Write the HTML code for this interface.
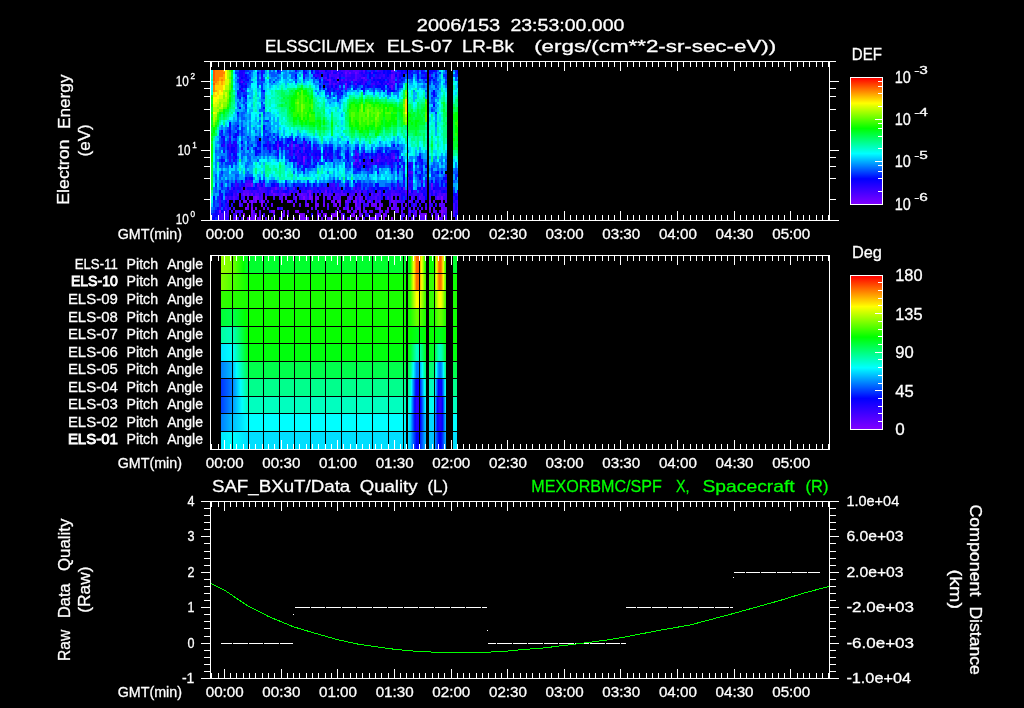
<!DOCTYPE html><html><head><meta charset="utf-8"><title>ELS plot</title>
<style>
html,body{margin:0;padding:0;background:#000;}
svg{display:block}
text{font-family:"Liberation Sans",sans-serif;fill:#fff;white-space:pre;stroke:#fff;stroke-width:0.3px}
.s{font-size:14.3px} .l{font-size:16.6px} .p1{font-size:8.2px} .p2{font-size:10.5px} .b{stroke-width:0.9px}
</style>
</head><body>
<svg width="1024" height="708" viewBox="0 0 1024 708">
<rect width="1024" height="708" fill="#000"/>
<defs><linearGradient id="rb" x1="0" y1="1" x2="0" y2="0">
<stop offset="0" stop-color="#8000ff"/>
<stop offset="0.2" stop-color="#0000ff"/>
<stop offset="0.4" stop-color="#00ffff"/>
<stop offset="0.6" stop-color="#00ff00"/>
<stop offset="0.8" stop-color="#ffff00"/>
<stop offset="1" stop-color="#ff0000"/>
</linearGradient>
</defs>
<g shape-rendering="crispEdges">
<path fill="#8000ff" d="M219 209.5h2v3.5h-2zM235 216.5h2v3.5h-2zM243 213h2v3.5h-2zM245 206.5h2v3h-2zM247 203h2v3.5h-2zM247 216.5h2v3.5h-2zM249 216.5h2v3.5h-2zM251 183h2v3.5h-2zM251 199.5h2v3.5h-2zM251 206.5h2v3h-2zM251 209.5h2v3.5h-2zM253 216.5h2v3.5h-2zM255 196h2v3.5h-2zM255 199.5h2v3.5h-2zM255 213h2v3.5h-2zM259 216.5h2v3.5h-2zM261 199.5h2v3.5h-2zM261 203h2v3.5h-2zM273 209.5h2v3.5h-2zM283 193h2v3h-2zM289 199.5h2v3.5h-2zM297 209.5h2v3.5h-2zM299 213h2v3.5h-2zM301 213h2v3.5h-2zM303 155.5h2v3h-2zM303 158.5h2v3h-2zM303 196h2v3.5h-2zM303 216.5h2v3.5h-2zM307 203h2v3.5h-2zM307 216.5h2v3.5h-2zM309 193h2v3h-2zM309 196h2v3.5h-2zM317 213h2v3.5h-2zM325 213h2v3.5h-2zM329 216.5h2v3.5h-2zM333 213h2v3.5h-2zM335 203h2v3.5h-2zM335 213h2v3.5h-2zM337 199.5h2v3.5h-2zM339 199.5h2v3.5h-2zM341 216.5h2v3.5h-2zM345 83h2v2h-2zM347 209.5h2v3.5h-2zM353 213h2v3.5h-2zM355 199.5h2v3.5h-2zM355 203h2v3.5h-2zM355 209.5h2v3.5h-2zM369 216.5h2v3.5h-2zM379 206.5h2v3h-2zM383 213h2v3.5h-2zM383 216.5h2v3.5h-2zM387 206.5h2v3h-2zM391 206.5h2v3h-2zM391 216.5h2v3.5h-2zM405 216.5h2v3.5h-2zM425 213h2v3.5h-2zM441 196h2v3.5h-2zM441 209.5h2v3.5h-2zM441 213h2v3.5h-2z"/>
<path fill="#6b00ff" d="M243 193h2v3h-2zM243 199.5h2v3.5h-2zM245 199.5h2v3.5h-2zM247 193h2v3h-2zM251 193h2v3h-2zM251 213h2v3.5h-2zM253 196h2v3.5h-2zM255 206.5h2v3h-2zM257 196h2v3.5h-2zM257 216.5h2v3.5h-2zM263 206.5h2v3h-2zM265 196h2v3.5h-2zM271 189.5h2v3.5h-2zM271 209.5h2v3.5h-2zM271 216.5h2v3.5h-2zM273 193h2v3h-2zM275 186.5h2v3h-2zM277 144h2v3h-2zM279 216.5h2v3.5h-2zM281 199.5h2v3.5h-2zM283 209.5h2v3.5h-2zM283 213h2v3.5h-2zM285 186.5h2v3h-2zM285 196h2v3.5h-2zM287 199.5h2v3.5h-2zM287 209.5h2v3.5h-2zM287 213h2v3.5h-2zM291 144h2v3h-2zM293 203h2v3.5h-2zM293 216.5h2v3.5h-2zM295 196h2v3.5h-2zM295 209.5h2v3.5h-2zM299 216.5h2v3.5h-2zM301 193h2v3h-2zM301 216.5h2v3.5h-2zM303 147h2v2.5h-2zM303 213h2v3.5h-2zM309 189.5h2v3.5h-2zM311 196h2v3.5h-2zM315 196h2v3.5h-2zM315 203h2v3.5h-2zM317 196h2v3.5h-2zM317 203h2v3.5h-2zM321 216.5h2v3.5h-2zM323 203h2v3.5h-2zM323 213h2v3.5h-2zM325 189.5h2v3.5h-2zM327 216.5h2v3.5h-2zM329 78.5h2v2h-2zM331 199.5h2v3.5h-2zM331 213h2v3.5h-2zM333 199.5h2v3.5h-2zM337 76.5h2v2h-2zM337 80.5h2v2.5h-2zM337 206.5h2v3h-2zM339 203h2v3.5h-2zM339 209.5h2v3.5h-2zM341 213h2v3.5h-2zM343 206.5h2v3h-2zM345 72h2v2h-2zM345 199.5h2v3.5h-2zM347 206.5h2v3h-2zM347 216.5h2v3.5h-2zM349 72h2v2h-2zM349 196h2v3.5h-2zM351 206.5h2v3h-2zM351 213h2v3.5h-2zM353 199.5h2v3.5h-2zM355 72h2v2h-2zM355 158.5h2v3h-2zM355 196h2v3.5h-2zM355 216.5h2v3.5h-2zM357 206.5h2v3h-2zM357 216.5h2v3.5h-2zM359 196h2v3.5h-2zM359 199.5h2v3.5h-2zM359 206.5h2v3h-2zM359 209.5h2v3.5h-2zM359 213h2v3.5h-2zM363 76.5h2v2h-2zM365 209.5h2v3.5h-2zM369 199.5h2v3.5h-2zM371 203h2v3.5h-2zM371 216.5h2v3.5h-2zM373 203h2v3.5h-2zM373 216.5h2v3.5h-2zM375 203h2v3.5h-2zM375 213h2v3.5h-2zM375 216.5h2v3.5h-2zM377 158.5h2v3h-2zM379 203h2v3.5h-2zM379 209.5h2v3.5h-2zM379 213h2v3.5h-2zM387 209.5h2v3.5h-2zM391 70h2v2h-2zM391 74h2v2.5h-2zM391 76.5h2v2h-2zM391 85h2v2.5h-2zM391 196h2v3.5h-2zM391 199.5h2v3.5h-2zM393 80.5h2v2.5h-2zM393 155.5h2v3h-2zM393 199.5h2v3.5h-2zM393 203h2v3.5h-2zM397 206.5h2v3h-2zM397 209.5h2v3.5h-2zM403 186.5h2v3h-2zM405 203h2v3.5h-2zM409 189.5h2v3.5h-2zM409 209.5h2v3.5h-2zM415 209.5h2v3.5h-2zM419 209.5h2v3.5h-2zM421 213h2v3.5h-2zM423 213h2v3.5h-2zM427 213h2v3.5h-2zM429 199.5h2v3.5h-2zM429 206.5h2v3h-2zM431 183h2v3.5h-2zM435 216.5h2v3.5h-2zM437 196h2v3.5h-2zM437 216.5h2v3.5h-2zM441 199.5h2v3.5h-2zM441 206.5h2v3h-2zM443 209.5h2v3.5h-2zM445 206.5h2v3h-2z"/>
<path fill="#5500ff" d="M221 213h2v3.5h-2zM221 216.5h2v3.5h-2zM225 196h2v3.5h-2zM227 199.5h2v3.5h-2zM227 209.5h2v3.5h-2zM233 196h2v3.5h-2zM233 216.5h2v3.5h-2zM235 209.5h2v3.5h-2zM237 193h2v3h-2zM239 203h2v3.5h-2zM241 80.5h2v2.5h-2zM243 189.5h2v3.5h-2zM245 183h2v3.5h-2zM245 189.5h2v3.5h-2zM245 193h2v3h-2zM247 183h2v3.5h-2zM247 189.5h2v3.5h-2zM247 196h2v3.5h-2zM247 206.5h2v3h-2zM249 183h2v3.5h-2zM249 199.5h2v3.5h-2zM251 203h2v3.5h-2zM251 216.5h2v3.5h-2zM253 199.5h2v3.5h-2zM253 213h2v3.5h-2zM255 193h2v3h-2zM257 183h2v3.5h-2zM257 193h2v3h-2zM259 186.5h2v3h-2zM259 209.5h2v3.5h-2zM259 213h2v3.5h-2zM261 193h2v3h-2zM261 196h2v3.5h-2zM263 183h2v3.5h-2zM263 199.5h2v3.5h-2zM265 216.5h2v3.5h-2zM267 199.5h2v3.5h-2zM267 206.5h2v3h-2zM271 203h2v3.5h-2zM275 193h2v3h-2zM277 147h2v2.5h-2zM277 206.5h2v3h-2zM279 196h2v3.5h-2zM281 186.5h2v3h-2zM281 193h2v3h-2zM281 196h2v3.5h-2zM281 213h2v3.5h-2zM281 216.5h2v3.5h-2zM285 193h2v3h-2zM289 193h2v3h-2zM291 147h2v2.5h-2zM293 186.5h2v3h-2zM295 144h2v3h-2zM297 149.5h2v3h-2zM297 161.5h2v3h-2zM297 193h2v3h-2zM299 193h2v3h-2zM299 203h2v3.5h-2zM301 196h2v3.5h-2zM303 161.5h2v3h-2zM303 193h2v3h-2zM305 193h2v3h-2zM305 196h2v3.5h-2zM305 203h2v3.5h-2zM305 216.5h2v3.5h-2zM307 189.5h2v3.5h-2zM307 209.5h2v3.5h-2zM311 206.5h2v3h-2zM315 199.5h2v3.5h-2zM315 206.5h2v3h-2zM317 209.5h2v3.5h-2zM317 216.5h2v3.5h-2zM319 213h2v3.5h-2zM321 209.5h2v3.5h-2zM323 193h2v3h-2zM323 196h2v3.5h-2zM323 199.5h2v3.5h-2zM325 76.5h2v2h-2zM325 193h2v3h-2zM327 78.5h2v2h-2zM327 196h2v3.5h-2zM327 203h2v3.5h-2zM329 74h2v2.5h-2zM329 80.5h2v2.5h-2zM329 83h2v2h-2zM329 193h2v3h-2zM329 196h2v3.5h-2zM331 70h2v2h-2zM331 72h2v2h-2zM331 216.5h2v3.5h-2zM333 83h2v2h-2zM333 196h2v3.5h-2zM333 203h2v3.5h-2zM335 193h2v3h-2zM335 196h2v3.5h-2zM335 209.5h2v3.5h-2zM337 72h2v2h-2zM337 87.5h2v2h-2zM337 186.5h2v3h-2zM337 193h2v3h-2zM337 216.5h2v3.5h-2zM339 196h2v3.5h-2zM341 78.5h2v2h-2zM341 189.5h2v3.5h-2zM341 193h2v3h-2zM343 193h2v3h-2zM345 70h2v2h-2zM345 74h2v2.5h-2zM345 78.5h2v2h-2zM345 85h2v2.5h-2zM345 87.5h2v2h-2zM347 70h2v2h-2zM347 196h2v3.5h-2zM347 199.5h2v3.5h-2zM347 203h2v3.5h-2zM349 209.5h2v3.5h-2zM353 70h2v2h-2zM353 78.5h2v2h-2zM353 161.5h2v3h-2zM353 186.5h2v3h-2zM355 70h2v2h-2zM355 74h2v2.5h-2zM355 76.5h2v2h-2zM355 78.5h2v2h-2zM355 83h2v2h-2zM355 189.5h2v3.5h-2zM357 70h2v2h-2zM357 72h2v2h-2zM357 152.5h2v3h-2zM357 193h2v3h-2zM359 161.5h2v3h-2zM359 189.5h2v3.5h-2zM359 193h2v3h-2zM359 203h2v3.5h-2zM361 76.5h2v2h-2zM361 196h2v3.5h-2zM361 213h2v3.5h-2zM363 70h2v2h-2zM363 206.5h2v3h-2zM365 78.5h2v2h-2zM365 196h2v3.5h-2zM367 203h2v3.5h-2zM369 209.5h2v3.5h-2zM371 72h2v2h-2zM371 76.5h2v2h-2zM371 193h2v3h-2zM371 209.5h2v3.5h-2zM375 196h2v3.5h-2zM375 199.5h2v3.5h-2zM377 193h2v3h-2zM377 206.5h2v3h-2zM377 213h2v3.5h-2zM377 216.5h2v3.5h-2zM379 189.5h2v3.5h-2zM379 199.5h2v3.5h-2zM381 203h2v3.5h-2zM381 209.5h2v3.5h-2zM383 193h2v3h-2zM385 213h2v3.5h-2zM387 83h2v2h-2zM387 196h2v3.5h-2zM391 78.5h2v2h-2zM391 80.5h2v2.5h-2zM391 87.5h2v2h-2zM391 193h2v3h-2zM393 70h2v2h-2zM393 74h2v2.5h-2zM393 76.5h2v2h-2zM393 83h2v2h-2zM393 206.5h2v3h-2zM395 193h2v3h-2zM395 199.5h2v3.5h-2zM395 203h2v3.5h-2zM395 206.5h2v3h-2zM395 209.5h2v3.5h-2zM397 158.5h2v3h-2zM397 199.5h2v3.5h-2zM401 209.5h2v3.5h-2zM403 206.5h2v3h-2zM405 189.5h2v3.5h-2zM407 177h2v3h-2zM407 216.5h2v3.5h-2zM409 199.5h2v3.5h-2zM411 170.5h2v3.5h-2zM411 196h2v3.5h-2zM411 216.5h2v3.5h-2zM413 206.5h2v3h-2zM413 213h2v3.5h-2zM415 213h2v3.5h-2zM419 196h2v3.5h-2zM419 213h2v3.5h-2zM421 186.5h2v3h-2zM421 193h2v3h-2zM421 206.5h2v3h-2zM421 216.5h2v3.5h-2zM423 216.5h2v3.5h-2zM425 206.5h2v3h-2zM425 216.5h2v3.5h-2zM427 199.5h2v3.5h-2zM427 206.5h2v3h-2zM427 216.5h2v3.5h-2zM429 209.5h2v3.5h-2zM431 186.5h2v3h-2zM433 189.5h2v3.5h-2zM433 199.5h2v3.5h-2zM433 206.5h2v3h-2zM433 209.5h2v3.5h-2zM435 213h2v3.5h-2zM437 213h2v3.5h-2zM439 193h2v3h-2zM439 196h2v3.5h-2zM439 203h2v3.5h-2zM439 209.5h2v3.5h-2zM439 216.5h2v3.5h-2zM441 203h2v3.5h-2zM441 216.5h2v3.5h-2zM443 193h2v3h-2zM443 203h2v3.5h-2zM443 206.5h2v3h-2zM445 199.5h2v3.5h-2zM445 209.5h2v3.5h-2zM445 216.5h2v3.5h-2zM457 206.5h1v3h-1z"/>
<path fill="#4000ff" d="M219 199.5h2v3.5h-2zM219 203h2v3.5h-2zM219 213h2v3.5h-2zM219 216.5h2v3.5h-2zM225 206.5h2v3h-2zM225 213h2v3.5h-2zM225 216.5h2v3.5h-2zM227 213h2v3.5h-2zM229 135.5h2v2.5h-2zM229 144h2v3h-2zM229 196h2v3.5h-2zM229 206.5h2v3h-2zM231 186.5h2v3h-2zM231 209.5h2v3.5h-2zM233 193h2v3h-2zM233 206.5h2v3h-2zM233 213h2v3.5h-2zM235 183h2v3.5h-2zM235 196h2v3.5h-2zM235 213h2v3.5h-2zM237 209.5h2v3.5h-2zM237 216.5h2v3.5h-2zM239 199.5h2v3.5h-2zM239 209.5h2v3.5h-2zM239 213h2v3.5h-2zM241 186.5h2v3h-2zM241 193h2v3h-2zM241 209.5h2v3.5h-2zM241 216.5h2v3.5h-2zM243 196h2v3.5h-2zM245 186.5h2v3h-2zM247 180h2v3h-2zM249 180h2v3h-2zM249 189.5h2v3.5h-2zM249 193h2v3h-2zM253 189.5h2v3.5h-2zM253 209.5h2v3.5h-2zM255 189.5h2v3.5h-2zM259 189.5h2v3.5h-2zM259 196h2v3.5h-2zM259 199.5h2v3.5h-2zM261 186.5h2v3h-2zM261 189.5h2v3.5h-2zM263 186.5h2v3h-2zM263 189.5h2v3.5h-2zM263 213h2v3.5h-2zM265 193h2v3h-2zM269 193h2v3h-2zM271 186.5h2v3h-2zM271 193h2v3h-2zM273 186.5h2v3h-2zM273 196h2v3.5h-2zM273 213h2v3.5h-2zM277 141h2v3h-2zM277 186.5h2v3h-2zM277 193h2v3h-2zM279 189.5h2v3.5h-2zM279 193h2v3h-2zM281 206.5h2v3h-2zM289 189.5h2v3.5h-2zM291 141h2v3h-2zM291 149.5h2v3h-2zM291 152.5h2v3h-2zM291 189.5h2v3.5h-2zM291 199.5h2v3.5h-2zM293 193h2v3h-2zM293 196h2v3.5h-2zM295 152.5h2v3h-2zM295 199.5h2v3.5h-2zM297 144h2v3h-2zM297 155.5h2v3h-2zM297 189.5h2v3.5h-2zM299 147h2v2.5h-2zM299 196h2v3.5h-2zM303 141h2v3h-2zM303 144h2v3h-2zM303 149.5h2v3h-2zM305 155.5h2v3h-2zM305 199.5h2v3.5h-2zM307 196h2v3.5h-2zM311 189.5h2v3.5h-2zM311 199.5h2v3.5h-2zM315 74h2v2.5h-2zM315 193h2v3h-2zM317 155.5h2v3h-2zM317 189.5h2v3.5h-2zM319 70h2v2h-2zM319 76.5h2v2h-2zM319 193h2v3h-2zM321 70h2v2h-2zM321 189.5h2v3.5h-2zM323 70h2v2h-2zM323 72h2v2h-2zM323 76.5h2v2h-2zM325 152.5h2v3h-2zM325 186.5h2v3h-2zM327 193h2v3h-2zM327 206.5h2v3h-2zM329 76.5h2v2h-2zM329 189.5h2v3.5h-2zM331 74h2v2.5h-2zM331 183h2v3.5h-2zM331 193h2v3h-2zM333 74h2v2.5h-2zM333 85h2v2.5h-2zM333 183h2v3.5h-2zM333 186.5h2v3h-2zM333 189.5h2v3.5h-2zM335 74h2v2.5h-2zM335 76.5h2v2h-2zM335 83h2v2h-2zM337 74h2v2.5h-2zM337 183h2v3.5h-2zM337 196h2v3.5h-2zM339 193h2v3h-2zM341 70h2v2h-2zM341 74h2v2.5h-2zM343 70h2v2h-2zM343 72h2v2h-2zM343 216.5h2v3.5h-2zM345 76.5h2v2h-2zM345 193h2v3h-2zM345 206.5h2v3h-2zM347 72h2v2h-2zM347 74h2v2.5h-2zM349 70h2v2h-2zM349 74h2v2.5h-2zM349 78.5h2v2h-2zM349 193h2v3h-2zM349 216.5h2v3.5h-2zM351 70h2v2h-2zM351 72h2v2h-2zM351 193h2v3h-2zM351 196h2v3.5h-2zM353 72h2v2h-2zM353 155.5h2v3h-2zM353 193h2v3h-2zM353 209.5h2v3.5h-2zM355 149.5h2v3h-2zM355 152.5h2v3h-2zM355 206.5h2v3h-2zM357 74h2v2.5h-2zM357 76.5h2v2h-2zM357 155.5h2v3h-2zM357 158.5h2v3h-2zM357 164.5h2v3h-2zM357 186.5h2v3h-2zM357 196h2v3.5h-2zM357 203h2v3.5h-2zM359 70h2v2h-2zM359 74h2v2.5h-2zM361 199.5h2v3.5h-2zM363 72h2v2h-2zM363 78.5h2v2h-2zM363 80.5h2v2.5h-2zM363 83h2v2h-2zM363 152.5h2v3h-2zM363 189.5h2v3.5h-2zM363 199.5h2v3.5h-2zM363 203h2v3.5h-2zM363 209.5h2v3.5h-2zM363 216.5h2v3.5h-2zM365 76.5h2v2h-2zM365 189.5h2v3.5h-2zM367 161.5h2v3h-2zM367 199.5h2v3.5h-2zM371 83h2v2h-2zM371 196h2v3.5h-2zM373 83h2v2h-2zM373 161.5h2v3h-2zM373 196h2v3.5h-2zM375 193h2v3h-2zM375 206.5h2v3h-2zM377 70h2v2h-2zM377 80.5h2v2.5h-2zM377 152.5h2v3h-2zM377 155.5h2v3h-2zM377 199.5h2v3.5h-2zM379 76.5h2v2h-2zM379 155.5h2v3h-2zM379 193h2v3h-2zM379 196h2v3.5h-2zM383 74h2v2.5h-2zM385 80.5h2v2.5h-2zM385 155.5h2v3h-2zM385 209.5h2v3.5h-2zM387 161.5h2v3h-2zM389 78.5h2v2h-2zM389 80.5h2v2.5h-2zM389 85h2v2.5h-2zM389 199.5h2v3.5h-2zM389 203h2v3.5h-2zM391 152.5h2v3h-2zM391 155.5h2v3h-2zM391 186.5h2v3h-2zM391 189.5h2v3.5h-2zM393 72h2v2h-2zM393 78.5h2v2h-2zM393 152.5h2v3h-2zM393 158.5h2v3h-2zM393 189.5h2v3.5h-2zM393 193h2v3h-2zM395 196h2v3.5h-2zM397 72h2v2h-2zM397 74h2v2.5h-2zM397 155.5h2v3h-2zM397 183h2v3.5h-2zM397 186.5h2v3h-2zM397 193h2v3h-2zM399 186.5h2v3h-2zM399 193h2v3h-2zM399 196h2v3.5h-2zM399 199.5h2v3.5h-2zM401 203h2v3.5h-2zM401 213h2v3.5h-2zM403 199.5h2v3.5h-2zM403 213h2v3.5h-2zM405 193h2v3h-2zM407 180h2v3h-2zM407 186.5h2v3h-2zM409 170.5h2v3.5h-2zM409 206.5h2v3h-2zM409 213h2v3.5h-2zM411 180h2v3h-2zM411 199.5h2v3.5h-2zM413 189.5h2v3.5h-2zM413 193h2v3h-2zM413 203h2v3.5h-2zM413 216.5h2v3.5h-2zM415 189.5h2v3.5h-2zM415 193h2v3h-2zM417 199.5h2v3.5h-2zM419 193h2v3h-2zM419 216.5h2v3.5h-2zM421 180h2v3h-2zM421 196h2v3.5h-2zM421 199.5h2v3.5h-2zM423 196h2v3.5h-2zM423 199.5h2v3.5h-2zM425 203h2v3.5h-2zM429 74h2v2.5h-2zM429 193h2v3h-2zM429 196h2v3.5h-2zM429 203h2v3.5h-2zM431 213h2v3.5h-2zM433 193h2v3h-2zM435 196h2v3.5h-2zM435 209.5h2v3.5h-2zM437 193h2v3h-2zM439 189.5h2v3.5h-2zM441 193h2v3h-2zM443 196h2v3.5h-2zM443 213h2v3.5h-2zM445 180h2v3h-2zM445 193h2v3h-2zM445 196h2v3.5h-2zM445 213h2v3.5h-2zM453 203h2v3.5h-2zM453 206.5h2v3h-2zM453 209.5h2v3.5h-2zM453 213h2v3.5h-2zM457 193h1v3h-1zM457 199.5h1v3.5h-1zM457 203h1v3.5h-1zM457 209.5h1v3.5h-1z"/>
<path fill="#2b00ff" d="M219 196h2v3.5h-2zM219 206.5h2v3h-2zM223 144h2v3h-2zM223 209.5h2v3.5h-2zM223 213h2v3.5h-2zM223 216.5h2v3.5h-2zM225 203h2v3.5h-2zM227 196h2v3.5h-2zM227 216.5h2v3.5h-2zM229 141h2v3h-2zM229 147h2v2.5h-2zM229 149.5h2v3h-2zM229 155.5h2v3h-2zM229 158.5h2v3h-2zM231 196h2v3.5h-2zM233 144h2v3h-2zM233 155.5h2v3h-2zM233 189.5h2v3.5h-2zM233 199.5h2v3.5h-2zM235 141h2v3h-2zM235 147h2v2.5h-2zM235 149.5h2v3h-2zM235 180h2v3h-2zM235 186.5h2v3h-2zM235 189.5h2v3.5h-2zM235 193h2v3h-2zM237 183h2v3.5h-2zM237 196h2v3.5h-2zM239 76.5h2v2h-2zM239 80.5h2v2.5h-2zM239 189.5h2v3.5h-2zM241 78.5h2v2h-2zM241 87.5h2v2h-2zM241 189.5h2v3.5h-2zM241 196h2v3.5h-2zM241 203h2v3.5h-2zM243 72h2v2h-2zM243 74h2v2.5h-2zM243 89.5h2v2.5h-2zM245 83h2v2h-2zM245 180h2v3h-2zM251 180h2v3h-2zM251 189.5h2v3.5h-2zM253 193h2v3h-2zM257 186.5h2v3h-2zM257 189.5h2v3.5h-2zM259 183h2v3.5h-2zM259 193h2v3h-2zM261 70h2v2h-2zM261 76.5h2v2h-2zM261 78.5h2v2h-2zM265 186.5h2v3h-2zM265 189.5h2v3.5h-2zM265 203h2v3.5h-2zM267 141h2v3h-2zM267 144h2v3h-2zM267 147h2v2.5h-2zM269 189.5h2v3.5h-2zM269 209.5h2v3.5h-2zM273 189.5h2v3.5h-2zM275 183h2v3.5h-2zM275 189.5h2v3.5h-2zM281 189.5h2v3.5h-2zM285 147h2v2.5h-2zM287 193h2v3h-2zM289 144h2v3h-2zM289 147h2v2.5h-2zM289 152.5h2v3h-2zM291 158.5h2v3h-2zM295 149.5h2v3h-2zM295 189.5h2v3.5h-2zM297 147h2v2.5h-2zM297 152.5h2v3h-2zM297 158.5h2v3h-2zM299 152.5h2v3h-2zM299 155.5h2v3h-2zM299 158.5h2v3h-2zM301 189.5h2v3.5h-2zM303 74h2v2.5h-2zM303 186.5h2v3h-2zM303 189.5h2v3.5h-2zM305 152.5h2v3h-2zM305 189.5h2v3.5h-2zM307 144h2v3h-2zM307 161.5h2v3h-2zM307 193h2v3h-2zM309 186.5h2v3h-2zM311 152.5h2v3h-2zM311 193h2v3h-2zM313 147h2v2.5h-2zM313 155.5h2v3h-2zM313 186.5h2v3h-2zM315 147h2v2.5h-2zM315 186.5h2v3h-2zM315 189.5h2v3.5h-2zM317 74h2v2.5h-2zM317 158.5h2v3h-2zM319 72h2v2h-2zM319 74h2v2.5h-2zM319 186.5h2v3h-2zM321 186.5h2v3h-2zM323 74h2v2.5h-2zM323 83h2v2h-2zM323 155.5h2v3h-2zM323 186.5h2v3h-2zM323 189.5h2v3.5h-2zM325 72h2v2h-2zM325 74h2v2.5h-2zM325 78.5h2v2h-2zM325 149.5h2v3h-2zM327 70h2v2h-2zM327 186.5h2v3h-2zM329 70h2v2h-2zM329 72h2v2h-2zM329 85h2v2.5h-2zM329 89.5h2v2.5h-2zM329 183h2v3.5h-2zM329 186.5h2v3h-2zM331 78.5h2v2h-2zM331 80.5h2v2.5h-2zM331 83h2v2h-2zM331 155.5h2v3h-2zM331 186.5h2v3h-2zM333 70h2v2h-2zM333 76.5h2v2h-2zM333 80.5h2v2.5h-2zM335 70h2v2h-2zM335 78.5h2v2h-2zM335 87.5h2v2h-2zM335 189.5h2v3.5h-2zM337 83h2v2h-2zM337 85h2v2.5h-2zM337 189.5h2v3.5h-2zM339 70h2v2h-2zM339 72h2v2h-2zM339 186.5h2v3h-2zM339 189.5h2v3.5h-2zM341 80.5h2v2.5h-2zM341 85h2v2.5h-2zM343 74h2v2.5h-2zM343 78.5h2v2h-2zM343 80.5h2v2.5h-2zM343 213h2v3.5h-2zM345 80.5h2v2.5h-2zM345 183h2v3.5h-2zM345 189.5h2v3.5h-2zM345 203h2v3.5h-2zM347 76.5h2v2h-2zM347 78.5h2v2h-2zM349 76.5h2v2h-2zM349 80.5h2v2.5h-2zM349 199.5h2v3.5h-2zM351 74h2v2.5h-2zM351 76.5h2v2h-2zM351 78.5h2v2h-2zM351 189.5h2v3.5h-2zM353 74h2v2.5h-2zM353 76.5h2v2h-2zM353 80.5h2v2.5h-2zM353 83h2v2h-2zM353 189.5h2v3.5h-2zM355 161.5h2v3h-2zM357 78.5h2v2h-2zM357 80.5h2v2.5h-2zM357 183h2v3.5h-2zM357 189.5h2v3.5h-2zM357 199.5h2v3.5h-2zM359 72h2v2h-2zM359 76.5h2v2h-2zM359 78.5h2v2h-2zM359 186.5h2v3h-2zM361 70h2v2h-2zM361 74h2v2.5h-2zM361 83h2v2h-2zM363 155.5h2v3h-2zM363 161.5h2v3h-2zM363 193h2v3h-2zM365 74h2v2.5h-2zM365 80.5h2v2.5h-2zM365 193h2v3h-2zM365 203h2v3.5h-2zM365 213h2v3.5h-2zM367 72h2v2h-2zM367 78.5h2v2h-2zM367 155.5h2v3h-2zM367 158.5h2v3h-2zM367 167.5h2v3h-2zM367 213h2v3.5h-2zM369 161.5h2v3h-2zM369 164.5h2v3h-2zM369 186.5h2v3h-2zM369 189.5h2v3.5h-2zM369 196h2v3.5h-2zM371 70h2v2h-2zM371 78.5h2v2h-2zM371 85h2v2.5h-2zM371 161.5h2v3h-2zM371 189.5h2v3.5h-2zM371 199.5h2v3.5h-2zM373 80.5h2v2.5h-2zM373 155.5h2v3h-2zM373 158.5h2v3h-2zM373 193h2v3h-2zM375 74h2v2.5h-2zM375 76.5h2v2h-2zM375 158.5h2v3h-2zM377 76.5h2v2h-2zM377 83h2v2h-2zM377 161.5h2v3h-2zM377 164.5h2v3h-2zM377 189.5h2v3.5h-2zM377 196h2v3.5h-2zM379 70h2v2h-2zM379 74h2v2.5h-2zM379 83h2v2h-2zM379 152.5h2v3h-2zM379 158.5h2v3h-2zM381 70h2v2h-2zM381 72h2v2h-2zM381 74h2v2.5h-2zM381 158.5h2v3h-2zM383 76.5h2v2h-2zM383 83h2v2h-2zM383 152.5h2v3h-2zM383 158.5h2v3h-2zM385 193h2v3h-2zM387 76.5h2v2h-2zM387 155.5h2v3h-2zM387 158.5h2v3h-2zM387 189.5h2v3.5h-2zM387 193h2v3h-2zM389 74h2v2.5h-2zM389 76.5h2v2h-2zM389 83h2v2h-2zM389 158.5h2v3h-2zM389 189.5h2v3.5h-2zM389 193h2v3h-2zM389 196h2v3.5h-2zM391 72h2v2h-2zM391 83h2v2h-2zM391 164.5h2v3h-2zM393 85h2v2.5h-2zM393 87.5h2v2h-2zM395 72h2v2h-2zM395 189.5h2v3.5h-2zM397 76.5h2v2h-2zM397 78.5h2v2h-2zM397 80.5h2v2.5h-2zM397 164.5h2v3h-2zM397 189.5h2v3.5h-2zM399 72h2v2h-2zM401 189.5h2v3.5h-2zM401 199.5h2v3.5h-2zM401 206.5h2v3h-2zM401 216.5h2v3.5h-2zM403 72h2v2h-2zM403 167.5h2v3h-2zM403 180h2v3h-2zM403 189.5h2v3.5h-2zM405 196h2v3.5h-2zM407 170.5h2v3.5h-2zM407 183h2v3.5h-2zM407 193h2v3h-2zM407 199.5h2v3.5h-2zM407 203h2v3.5h-2zM407 206.5h2v3h-2zM407 209.5h2v3.5h-2zM407 213h2v3.5h-2zM409 186.5h2v3h-2zM409 193h2v3h-2zM411 161.5h2v3h-2zM411 164.5h2v3h-2zM411 174h2v3h-2zM411 183h2v3.5h-2zM411 193h2v3h-2zM411 209.5h2v3.5h-2zM413 196h2v3.5h-2zM413 209.5h2v3.5h-2zM415 199.5h2v3.5h-2zM415 203h2v3.5h-2zM417 193h2v3h-2zM417 196h2v3.5h-2zM417 206.5h2v3h-2zM419 189.5h2v3.5h-2zM419 203h2v3.5h-2zM425 180h2v3h-2zM425 183h2v3.5h-2zM425 186.5h2v3h-2zM427 70h2v2h-2zM427 72h2v2h-2zM427 183h2v3.5h-2zM427 186.5h2v3h-2zM427 189.5h2v3.5h-2zM429 189.5h2v3.5h-2zM431 203h2v3.5h-2zM435 189.5h2v3.5h-2zM435 203h2v3.5h-2zM437 189.5h2v3.5h-2zM441 186.5h2v3h-2zM443 186.5h2v3h-2zM445 174h2v3h-2zM445 186.5h2v3h-2zM453 196h2v3.5h-2zM455 199.5h2v3.5h-2zM455 209.5h2v3.5h-2zM455 216.5h2v3.5h-2zM457 213h1v3.5h-1zM457 216.5h1v3.5h-1z"/>
<path fill="#1500ff" d="M213 213h2v3.5h-2zM217 209.5h2v3.5h-2zM217 213h2v3.5h-2zM217 216.5h2v3.5h-2zM219 193h2v3h-2zM221 130h2v2.5h-2zM221 144h2v3h-2zM221 183h2v3.5h-2zM221 193h2v3h-2zM223 135.5h2v2.5h-2zM223 138h2v3h-2zM223 141h2v3h-2zM223 149.5h2v3h-2zM223 158.5h2v3h-2zM223 206.5h2v3h-2zM225 209.5h2v3.5h-2zM227 144h2v3h-2zM227 186.5h2v3h-2zM227 193h2v3h-2zM227 203h2v3.5h-2zM227 206.5h2v3h-2zM229 127h2v3h-2zM229 132.5h2v3h-2zM229 138h2v3h-2zM229 152.5h2v3h-2zM229 189.5h2v3.5h-2zM229 193h2v3h-2zM231 144h2v3h-2zM231 189.5h2v3.5h-2zM231 203h2v3.5h-2zM233 141h2v3h-2zM233 149.5h2v3h-2zM233 158.5h2v3h-2zM235 144h2v3h-2zM235 152.5h2v3h-2zM237 92h2v2.5h-2zM237 132.5h2v3h-2zM237 186.5h2v3h-2zM239 70h2v2h-2zM239 72h2v2h-2zM239 74h2v2.5h-2zM239 78.5h2v2h-2zM239 186.5h2v3h-2zM241 70h2v2h-2zM241 72h2v2h-2zM241 74h2v2.5h-2zM241 83h2v2h-2zM241 147h2v2.5h-2zM241 183h2v3.5h-2zM243 70h2v2h-2zM243 76.5h2v2h-2zM243 80.5h2v2.5h-2zM243 85h2v2.5h-2zM243 183h2v3.5h-2zM245 76.5h2v2h-2zM245 78.5h2v2h-2zM245 94.5h2v2h-2zM247 147h2v2.5h-2zM247 186.5h2v3h-2zM249 177h2v3h-2zM249 186.5h2v3h-2zM251 186.5h2v3h-2zM255 186.5h2v3h-2zM261 72h2v2h-2zM261 74h2v2.5h-2zM263 180h2v3h-2zM267 186.5h2v3h-2zM267 189.5h2v3.5h-2zM267 193h2v3h-2zM269 147h2v2.5h-2zM269 186.5h2v3h-2zM273 147h2v2.5h-2zM275 144h2v3h-2zM277 149.5h2v3h-2zM277 152.5h2v3h-2zM277 183h2v3.5h-2zM277 189.5h2v3.5h-2zM279 206.5h2v3h-2zM281 141h2v3h-2zM281 144h2v3h-2zM281 147h2v2.5h-2zM283 189.5h2v3.5h-2zM285 144h2v3h-2zM287 147h2v2.5h-2zM287 189.5h2v3.5h-2zM289 149.5h2v3h-2zM291 138h2v3h-2zM291 155.5h2v3h-2zM293 189.5h2v3.5h-2zM295 70h2v2h-2zM295 138h2v3h-2zM295 147h2v2.5h-2zM297 164.5h2v3h-2zM301 152.5h2v3h-2zM301 155.5h2v3h-2zM301 158.5h2v3h-2zM301 161.5h2v3h-2zM301 186.5h2v3h-2zM303 72h2v2h-2zM303 76.5h2v2h-2zM303 152.5h2v3h-2zM303 164.5h2v3h-2zM303 167.5h2v3h-2zM303 183h2v3.5h-2zM305 141h2v3h-2zM305 147h2v2.5h-2zM307 147h2v2.5h-2zM307 149.5h2v3h-2zM307 155.5h2v3h-2zM307 164.5h2v3h-2zM307 186.5h2v3h-2zM309 144h2v3h-2zM309 149.5h2v3h-2zM309 155.5h2v3h-2zM309 158.5h2v3h-2zM309 161.5h2v3h-2zM311 72h2v2h-2zM311 213h2v3.5h-2zM313 74h2v2.5h-2zM313 144h2v3h-2zM313 149.5h2v3h-2zM313 152.5h2v3h-2zM313 158.5h2v3h-2zM313 189.5h2v3.5h-2zM315 70h2v2h-2zM315 72h2v2h-2zM315 149.5h2v3h-2zM315 155.5h2v3h-2zM317 70h2v2h-2zM317 149.5h2v3h-2zM317 152.5h2v3h-2zM319 149.5h2v3h-2zM319 155.5h2v3h-2zM321 183h2v3.5h-2zM323 78.5h2v2h-2zM323 80.5h2v2.5h-2zM325 147h2v2.5h-2zM325 155.5h2v3h-2zM327 72h2v2h-2zM327 85h2v2.5h-2zM327 189.5h2v3.5h-2zM329 87.5h2v2h-2zM329 92h2v2.5h-2zM329 152.5h2v3h-2zM329 155.5h2v3h-2zM331 76.5h2v2h-2zM331 152.5h2v3h-2zM333 72h2v2h-2zM333 87.5h2v2h-2zM333 180h2v3h-2zM335 72h2v2h-2zM335 80.5h2v2.5h-2zM335 186.5h2v3h-2zM337 70h2v2h-2zM337 92h2v2.5h-2zM337 152.5h2v3h-2zM337 155.5h2v3h-2zM339 74h2v2.5h-2zM339 78.5h2v2h-2zM339 80.5h2v2.5h-2zM339 83h2v2h-2zM339 89.5h2v2.5h-2zM341 72h2v2h-2zM341 83h2v2h-2zM341 87.5h2v2h-2zM343 189.5h2v3.5h-2zM345 155.5h2v3h-2zM347 80.5h2v2.5h-2zM347 83h2v2h-2zM347 85h2v2.5h-2zM347 186.5h2v3h-2zM347 189.5h2v3.5h-2zM349 186.5h2v3h-2zM349 189.5h2v3.5h-2zM353 164.5h2v3h-2zM355 80.5h2v2.5h-2zM355 85h2v2.5h-2zM355 155.5h2v3h-2zM355 164.5h2v3h-2zM355 186.5h2v3h-2zM357 161.5h2v3h-2zM359 80.5h2v2.5h-2zM359 164.5h2v3h-2zM359 183h2v3.5h-2zM361 72h2v2h-2zM361 78.5h2v2h-2zM361 80.5h2v2.5h-2zM361 161.5h2v3h-2zM361 189.5h2v3.5h-2zM363 74h2v2.5h-2zM363 85h2v2.5h-2zM363 87.5h2v2h-2zM363 149.5h2v3h-2zM363 186.5h2v3h-2zM365 70h2v2h-2zM365 72h2v2h-2zM365 158.5h2v3h-2zM365 161.5h2v3h-2zM367 164.5h2v3h-2zM367 193h2v3h-2zM367 196h2v3.5h-2zM369 85h2v2.5h-2zM369 158.5h2v3h-2zM371 74h2v2.5h-2zM371 80.5h2v2.5h-2zM371 155.5h2v3h-2zM371 186.5h2v3h-2zM373 70h2v2h-2zM373 76.5h2v2h-2zM373 189.5h2v3.5h-2zM375 78.5h2v2h-2zM375 80.5h2v2.5h-2zM375 83h2v2h-2zM375 85h2v2.5h-2zM375 155.5h2v3h-2zM375 161.5h2v3h-2zM377 72h2v2h-2zM377 74h2v2.5h-2zM377 170.5h2v3.5h-2zM379 72h2v2h-2zM379 161.5h2v3h-2zM381 76.5h2v2h-2zM381 78.5h2v2h-2zM381 85h2v2.5h-2zM381 155.5h2v3h-2zM381 196h2v3.5h-2zM383 80.5h2v2.5h-2zM383 87.5h2v2h-2zM383 155.5h2v3h-2zM383 161.5h2v3h-2zM383 186.5h2v3h-2zM385 70h2v2h-2zM385 72h2v2h-2zM385 74h2v2.5h-2zM385 76.5h2v2h-2zM385 83h2v2h-2zM385 158.5h2v3h-2zM385 196h2v3.5h-2zM387 78.5h2v2h-2zM387 80.5h2v2.5h-2zM387 89.5h2v2.5h-2zM387 186.5h2v3h-2zM389 152.5h2v3h-2zM389 155.5h2v3h-2zM389 161.5h2v3h-2zM391 149.5h2v3h-2zM391 158.5h2v3h-2zM391 161.5h2v3h-2zM391 183h2v3.5h-2zM393 149.5h2v3h-2zM395 80.5h2v2.5h-2zM397 70h2v2h-2zM397 83h2v2h-2zM397 170.5h2v3.5h-2zM397 180h2v3h-2zM399 70h2v2h-2zM399 74h2v2.5h-2zM399 80.5h2v2.5h-2zM399 189.5h2v3.5h-2zM401 193h2v3h-2zM401 196h2v3.5h-2zM403 70h2v2h-2zM403 164.5h2v3h-2zM403 183h2v3.5h-2zM403 193h2v3h-2zM405 72h2v2h-2zM407 189.5h2v3.5h-2zM407 196h2v3.5h-2zM409 70h2v2h-2zM409 72h2v2h-2zM409 161.5h2v3h-2zM409 167.5h2v3h-2zM409 174h2v3h-2zM409 183h2v3.5h-2zM411 70h2v2h-2zM411 177h2v3h-2zM411 186.5h2v3h-2zM411 203h2v3.5h-2zM417 70h2v2h-2zM417 72h2v2h-2zM419 158.5h2v3h-2zM421 70h2v2h-2zM421 158.5h2v3h-2zM421 167.5h2v3h-2zM421 189.5h2v3.5h-2zM423 189.5h2v3.5h-2zM425 72h2v2h-2zM425 74h2v2.5h-2zM425 189.5h2v3.5h-2zM425 193h2v3h-2zM427 74h2v2.5h-2zM427 174h2v3h-2zM429 76.5h2v2h-2zM431 72h2v2h-2zM431 189.5h2v3.5h-2zM431 193h2v3h-2zM435 70h2v2h-2zM435 180h2v3h-2zM435 183h2v3.5h-2zM435 186.5h2v3h-2zM435 193h2v3h-2zM437 183h2v3.5h-2zM437 186.5h2v3h-2zM439 186.5h2v3h-2zM441 189.5h2v3.5h-2zM445 189.5h2v3.5h-2zM453 199.5h2v3.5h-2zM455 193h2v3h-2zM455 203h2v3.5h-2zM455 206.5h2v3h-2zM457 189.5h1v3.5h-1zM457 196h1v3.5h-1z"/>
<path fill="#0000ff" d="M211 216.5h2v3.5h-2zM213 196h2v3.5h-2zM213 216.5h2v3.5h-2zM215 209.5h2v3.5h-2zM215 213h2v3.5h-2zM217 206.5h2v3h-2zM219 189.5h2v3.5h-2zM221 135.5h2v2.5h-2zM221 158.5h2v3h-2zM221 196h2v3.5h-2zM221 203h2v3.5h-2zM221 209.5h2v3.5h-2zM225 193h2v3h-2zM225 199.5h2v3.5h-2zM227 147h2v2.5h-2zM229 122h2v2.5h-2zM229 124.5h2v2.5h-2zM229 130h2v2.5h-2zM231 147h2v2.5h-2zM231 149.5h2v3h-2zM231 183h2v3.5h-2zM231 193h2v3h-2zM233 135.5h2v2.5h-2zM233 147h2v2.5h-2zM233 152.5h2v3h-2zM233 186.5h2v3h-2zM235 132.5h2v3h-2zM235 135.5h2v2.5h-2zM235 155.5h2v3h-2zM237 111.5h2v2.5h-2zM237 124.5h2v2.5h-2zM237 130h2v2.5h-2zM239 83h2v2h-2zM239 87.5h2v2h-2zM239 96.5h2v2.5h-2zM239 106.5h2v2.5h-2zM241 76.5h2v2h-2zM241 85h2v2.5h-2zM241 89.5h2v2.5h-2zM241 141h2v3h-2zM241 180h2v3h-2zM243 94.5h2v2h-2zM245 74h2v2.5h-2zM245 85h2v2.5h-2zM245 96.5h2v2.5h-2zM245 177h2v3h-2zM247 78.5h2v2h-2zM251 177h2v3h-2zM253 186.5h2v3h-2zM255 147h2v2.5h-2zM255 149.5h2v3h-2zM255 152.5h2v3h-2zM255 183h2v3.5h-2zM257 72h2v2h-2zM257 141h2v3h-2zM257 144h2v3h-2zM257 149.5h2v3h-2zM259 141h2v3h-2zM259 144h2v3h-2zM259 149.5h2v3h-2zM259 180h2v3h-2zM261 183h2v3.5h-2zM263 89.5h2v2.5h-2zM263 106.5h2v2.5h-2zM263 124.5h2v2.5h-2zM263 127h2v3h-2zM263 144h2v3h-2zM265 144h2v3h-2zM267 135.5h2v2.5h-2zM269 144h2v3h-2zM269 149.5h2v3h-2zM271 183h2v3.5h-2zM273 144h2v3h-2zM273 183h2v3.5h-2zM275 141h2v3h-2zM275 147h2v2.5h-2zM277 70h2v2h-2zM277 135.5h2v2.5h-2zM277 138h2v3h-2zM279 141h2v3h-2zM279 144h2v3h-2zM285 183h2v3.5h-2zM285 189.5h2v3.5h-2zM287 138h2v3h-2zM287 141h2v3h-2zM287 186.5h2v3h-2zM289 138h2v3h-2zM289 158.5h2v3h-2zM293 141h2v3h-2zM293 149.5h2v3h-2zM293 158.5h2v3h-2zM293 183h2v3.5h-2zM295 74h2v2.5h-2zM295 76.5h2v2h-2zM295 141h2v3h-2zM295 155.5h2v3h-2zM295 158.5h2v3h-2zM295 186.5h2v3h-2zM299 144h2v3h-2zM299 149.5h2v3h-2zM299 161.5h2v3h-2zM299 186.5h2v3h-2zM301 144h2v3h-2zM303 70h2v2h-2zM303 138h2v3h-2zM305 72h2v2h-2zM305 149.5h2v3h-2zM305 164.5h2v3h-2zM305 186.5h2v3h-2zM307 152.5h2v3h-2zM307 158.5h2v3h-2zM307 183h2v3.5h-2zM309 141h2v3h-2zM309 147h2v2.5h-2zM311 70h2v2h-2zM313 164.5h2v3h-2zM313 183h2v3.5h-2zM315 76.5h2v2h-2zM315 152.5h2v3h-2zM315 161.5h2v3h-2zM317 72h2v2h-2zM317 186.5h2v3h-2zM319 78.5h2v2h-2zM319 80.5h2v2.5h-2zM319 85h2v2.5h-2zM319 152.5h2v3h-2zM319 189.5h2v3.5h-2zM323 87.5h2v2h-2zM323 149.5h2v3h-2zM323 152.5h2v3h-2zM325 70h2v2h-2zM325 80.5h2v2.5h-2zM325 158.5h2v3h-2zM327 74h2v2.5h-2zM327 76.5h2v2h-2zM327 80.5h2v2.5h-2zM327 87.5h2v2h-2zM327 89.5h2v2.5h-2zM327 152.5h2v3h-2zM329 147h2v2.5h-2zM329 149.5h2v3h-2zM331 85h2v2.5h-2zM331 147h2v2.5h-2zM331 149.5h2v3h-2zM331 158.5h2v3h-2zM331 189.5h2v3.5h-2zM333 78.5h2v2h-2zM333 89.5h2v2.5h-2zM335 85h2v2.5h-2zM337 149.5h2v3h-2zM339 76.5h2v2h-2zM339 155.5h2v3h-2zM341 92h2v2.5h-2zM345 152.5h2v3h-2zM345 186.5h2v3h-2zM347 149.5h2v3h-2zM347 152.5h2v3h-2zM347 155.5h2v3h-2zM347 158.5h2v3h-2zM347 183h2v3.5h-2zM349 83h2v2h-2zM353 87.5h2v2h-2zM353 180h2v3h-2zM355 183h2v3.5h-2zM357 83h2v2h-2zM357 147h2v2.5h-2zM357 167.5h2v3h-2zM359 83h2v2h-2zM359 155.5h2v3h-2zM359 167.5h2v3h-2zM361 87.5h2v2h-2zM361 152.5h2v3h-2zM361 155.5h2v3h-2zM361 158.5h2v3h-2zM363 89.5h2v2.5h-2zM365 83h2v2h-2zM365 152.5h2v3h-2zM365 164.5h2v3h-2zM367 85h2v2.5h-2zM367 152.5h2v3h-2zM367 189.5h2v3.5h-2zM369 72h2v2h-2zM369 74h2v2.5h-2zM369 76.5h2v2h-2zM371 152.5h2v3h-2zM373 72h2v2h-2zM373 78.5h2v2h-2zM373 186.5h2v3h-2zM375 72h2v2h-2zM375 152.5h2v3h-2zM375 183h2v3.5h-2zM377 78.5h2v2h-2zM377 85h2v2.5h-2zM377 149.5h2v3h-2zM377 183h2v3.5h-2zM377 186.5h2v3h-2zM379 78.5h2v2h-2zM379 80.5h2v2.5h-2zM379 85h2v2.5h-2zM379 149.5h2v3h-2zM379 186.5h2v3h-2zM381 80.5h2v2.5h-2zM381 83h2v2h-2zM381 87.5h2v2h-2zM381 152.5h2v3h-2zM381 161.5h2v3h-2zM381 186.5h2v3h-2zM381 189.5h2v3.5h-2zM381 193h2v3h-2zM383 70h2v2h-2zM383 72h2v2h-2zM383 78.5h2v2h-2zM383 85h2v2.5h-2zM383 89.5h2v2.5h-2zM385 149.5h2v3h-2zM385 186.5h2v3h-2zM387 70h2v2h-2zM387 72h2v2h-2zM387 74h2v2.5h-2zM387 85h2v2.5h-2zM387 152.5h2v3h-2zM389 70h2v2h-2zM389 72h2v2h-2zM389 87.5h2v2h-2zM389 89.5h2v2.5h-2zM391 89.5h2v2.5h-2zM391 167.5h2v3h-2zM393 89.5h2v2.5h-2zM393 144h2v3h-2zM393 186.5h2v3h-2zM395 74h2v2.5h-2zM395 149.5h2v3h-2zM395 158.5h2v3h-2zM397 85h2v2.5h-2zM397 149.5h2v3h-2zM397 152.5h2v3h-2zM397 161.5h2v3h-2zM397 167.5h2v3h-2zM399 76.5h2v2h-2zM399 158.5h2v3h-2zM399 164.5h2v3h-2zM401 70h2v2h-2zM401 72h2v2h-2zM401 74h2v2.5h-2zM401 78.5h2v2h-2zM401 186.5h2v3h-2zM403 161.5h2v3h-2zM403 174h2v3h-2zM403 177h2v3h-2zM405 70h2v2h-2zM407 164.5h2v3h-2zM407 174h2v3h-2zM409 164.5h2v3h-2zM409 177h2v3h-2zM411 74h2v2.5h-2zM411 189.5h2v3.5h-2zM415 161.5h2v3h-2zM415 170.5h2v3.5h-2zM417 74h2v2.5h-2zM417 76.5h2v2h-2zM417 186.5h2v3h-2zM419 155.5h2v3h-2zM419 174h2v3h-2zM419 177h2v3h-2zM419 186.5h2v3h-2zM421 72h2v2h-2zM421 76.5h2v2h-2zM421 161.5h2v3h-2zM421 170.5h2v3.5h-2zM421 183h2v3.5h-2zM423 72h2v2h-2zM423 76.5h2v2h-2zM423 186.5h2v3h-2zM423 193h2v3h-2zM425 76.5h2v2h-2zM425 80.5h2v2.5h-2zM425 164.5h2v3h-2zM425 196h2v3.5h-2zM427 167.5h2v3h-2zM427 180h2v3h-2zM429 70h2v2h-2zM429 72h2v2h-2zM429 78.5h2v2h-2zM431 70h2v2h-2zM431 76.5h2v2h-2zM431 180h2v3h-2zM433 70h2v2h-2zM433 78.5h2v2h-2zM433 89.5h2v2.5h-2zM433 92h2v2.5h-2zM433 94.5h2v2h-2zM433 104h2v2.5h-2zM433 186.5h2v3h-2zM435 74h2v2.5h-2zM437 170.5h2v3.5h-2zM441 170.5h2v3.5h-2zM441 180h2v3h-2zM441 183h2v3.5h-2zM443 177h2v3h-2zM443 189.5h2v3.5h-2zM445 177h2v3h-2zM445 183h2v3.5h-2zM453 193h2v3h-2zM455 196h2v3.5h-2zM455 213h2v3.5h-2zM457 70h1v2h-1zM457 72h1v2h-1z"/>
<path fill="#002bff" d="M211 213h2v3.5h-2zM213 199.5h2v3.5h-2zM213 203h2v3.5h-2zM213 209.5h2v3.5h-2zM215 183h2v3.5h-2zM215 206.5h2v3h-2zM215 216.5h2v3.5h-2zM217 196h2v3.5h-2zM217 199.5h2v3.5h-2zM219 132.5h2v3h-2zM219 158.5h2v3h-2zM221 132.5h2v3h-2zM221 138h2v3h-2zM221 141h2v3h-2zM221 155.5h2v3h-2zM221 161.5h2v3h-2zM221 170.5h2v3.5h-2zM221 186.5h2v3h-2zM221 199.5h2v3.5h-2zM223 147h2v2.5h-2zM223 199.5h2v3.5h-2zM223 203h2v3.5h-2zM225 161.5h2v3h-2zM225 189.5h2v3.5h-2zM227 130h2v2.5h-2zM227 141h2v3h-2zM227 149.5h2v3h-2zM227 152.5h2v3h-2zM227 155.5h2v3h-2zM227 161.5h2v3h-2zM227 180h2v3h-2zM227 189.5h2v3.5h-2zM229 161.5h2v3h-2zM231 155.5h2v3h-2zM231 161.5h2v3h-2zM231 164.5h2v3h-2zM233 132.5h2v3h-2zM233 183h2v3.5h-2zM235 72h2v2h-2zM235 127h2v3h-2zM235 138h2v3h-2zM235 158.5h2v3h-2zM235 161.5h2v3h-2zM237 72h2v2h-2zM237 74h2v2.5h-2zM237 78.5h2v2h-2zM237 80.5h2v2.5h-2zM237 89.5h2v2.5h-2zM237 94.5h2v2h-2zM237 114h2v2.5h-2zM237 189.5h2v3.5h-2zM239 85h2v2.5h-2zM239 89.5h2v2.5h-2zM239 92h2v2.5h-2zM239 94.5h2v2h-2zM239 183h2v3.5h-2zM241 127h2v3h-2zM241 130h2v2.5h-2zM241 132.5h2v3h-2zM243 78.5h2v2h-2zM243 83h2v2h-2zM243 92h2v2.5h-2zM243 101.5h2v2.5h-2zM245 70h2v2h-2zM245 80.5h2v2.5h-2zM245 87.5h2v2h-2zM245 92h2v2.5h-2zM245 99h2v2.5h-2zM245 104h2v2.5h-2zM245 106.5h2v2.5h-2zM247 70h2v2h-2zM247 74h2v2.5h-2zM247 76.5h2v2h-2zM247 80.5h2v2.5h-2zM247 135.5h2v2.5h-2zM247 141h2v3h-2zM247 177h2v3h-2zM249 72h2v2h-2zM249 76.5h2v2h-2zM251 144h2v3h-2zM253 147h2v2.5h-2zM255 135.5h2v2.5h-2zM257 74h2v2.5h-2zM257 76.5h2v2h-2zM257 78.5h2v2h-2zM257 83h2v2h-2zM257 138h2v3h-2zM257 152.5h2v3h-2zM259 147h2v2.5h-2zM261 83h2v2h-2zM261 85h2v2.5h-2zM261 87.5h2v2h-2zM261 89.5h2v2.5h-2zM261 101.5h2v2.5h-2zM263 70h2v2h-2zM263 72h2v2h-2zM263 78.5h2v2h-2zM263 96.5h2v2.5h-2zM263 111.5h2v2.5h-2zM263 130h2v2.5h-2zM263 132.5h2v3h-2zM263 135.5h2v2.5h-2zM263 138h2v3h-2zM263 147h2v2.5h-2zM265 119.5h2v2.5h-2zM265 130h2v2.5h-2zM265 135.5h2v2.5h-2zM265 138h2v3h-2zM265 141h2v3h-2zM267 119.5h2v2.5h-2zM267 138h2v3h-2zM269 132.5h2v3h-2zM269 141h2v3h-2zM271 144h2v3h-2zM273 80.5h2v2.5h-2zM273 132.5h2v3h-2zM273 138h2v3h-2zM273 180h2v3h-2zM275 152.5h2v3h-2zM277 72h2v2h-2zM277 155.5h2v3h-2zM279 70h2v2h-2zM279 72h2v2h-2zM279 186.5h2v3h-2zM281 138h2v3h-2zM281 149.5h2v3h-2zM283 144h2v3h-2zM285 138h2v3h-2zM285 141h2v3h-2zM285 149.5h2v3h-2zM285 152.5h2v3h-2zM285 155.5h2v3h-2zM285 180h2v3h-2zM287 152.5h2v3h-2zM287 155.5h2v3h-2zM289 141h2v3h-2zM289 155.5h2v3h-2zM289 186.5h2v3h-2zM291 135.5h2v2.5h-2zM291 186.5h2v3h-2zM293 147h2v2.5h-2zM293 152.5h2v3h-2zM293 161.5h2v3h-2zM293 164.5h2v3h-2zM295 80.5h2v2.5h-2zM295 183h2v3.5h-2zM297 135.5h2v2.5h-2zM297 167.5h2v3h-2zM297 183h2v3.5h-2zM299 164.5h2v3h-2zM299 183h2v3.5h-2zM301 147h2v2.5h-2zM301 149.5h2v3h-2zM301 167.5h2v3h-2zM301 183h2v3.5h-2zM303 170.5h2v3.5h-2zM305 70h2v2h-2zM305 144h2v3h-2zM305 158.5h2v3h-2zM305 161.5h2v3h-2zM307 180h2v3h-2zM309 152.5h2v3h-2zM309 164.5h2v3h-2zM309 183h2v3.5h-2zM311 149.5h2v3h-2zM311 164.5h2v3h-2zM311 186.5h2v3h-2zM313 161.5h2v3h-2zM315 144h2v3h-2zM315 158.5h2v3h-2zM315 183h2v3.5h-2zM317 76.5h2v2h-2zM317 144h2v3h-2zM319 87.5h2v2h-2zM319 161.5h2v3h-2zM319 183h2v3.5h-2zM321 72h2v2h-2zM321 161.5h2v3h-2zM323 147h2v2.5h-2zM323 183h2v3.5h-2zM325 83h2v2h-2zM325 85h2v2.5h-2zM325 89.5h2v2.5h-2zM325 92h2v2.5h-2zM325 144h2v3h-2zM325 183h2v3.5h-2zM327 83h2v2h-2zM327 147h2v2.5h-2zM327 149.5h2v3h-2zM327 155.5h2v3h-2zM329 94.5h2v2h-2zM329 144h2v3h-2zM329 158.5h2v3h-2zM331 87.5h2v2h-2zM331 89.5h2v2.5h-2zM331 144h2v3h-2zM333 94.5h2v2h-2zM335 89.5h2v2.5h-2zM335 149.5h2v3h-2zM335 152.5h2v3h-2zM335 183h2v3.5h-2zM337 89.5h2v2.5h-2zM337 94.5h2v2h-2zM337 96.5h2v2.5h-2zM337 99h2v2.5h-2zM337 147h2v2.5h-2zM337 180h2v3h-2zM339 87.5h2v2h-2zM339 92h2v2.5h-2zM339 94.5h2v2h-2zM339 96.5h2v2.5h-2zM339 147h2v2.5h-2zM339 149.5h2v3h-2zM339 180h2v3h-2zM341 76.5h2v2h-2zM343 76.5h2v2h-2zM343 83h2v2h-2zM345 89.5h2v2.5h-2zM345 149.5h2v3h-2zM345 161.5h2v3h-2zM345 164.5h2v3h-2zM347 141h2v3h-2zM347 147h2v2.5h-2zM347 180h2v3h-2zM349 85h2v2.5h-2zM349 161.5h2v3h-2zM349 164.5h2v3h-2zM351 83h2v2h-2zM353 85h2v2.5h-2zM353 149.5h2v3h-2zM353 170.5h2v3.5h-2zM355 87.5h2v2h-2zM355 147h2v2.5h-2zM355 167.5h2v3h-2zM355 170.5h2v3.5h-2zM357 85h2v2.5h-2zM357 149.5h2v3h-2zM357 180h2v3h-2zM359 180h2v3h-2zM361 164.5h2v3h-2zM363 183h2v3.5h-2zM365 85h2v2.5h-2zM365 155.5h2v3h-2zM365 167.5h2v3h-2zM365 183h2v3.5h-2zM367 70h2v2h-2zM367 74h2v2.5h-2zM367 76.5h2v2h-2zM367 80.5h2v2.5h-2zM367 83h2v2h-2zM367 186.5h2v3h-2zM369 70h2v2h-2zM369 78.5h2v2h-2zM369 80.5h2v2.5h-2zM369 83h2v2h-2zM369 152.5h2v3h-2zM369 183h2v3.5h-2zM371 149.5h2v3h-2zM371 164.5h2v3h-2zM371 167.5h2v3h-2zM371 170.5h2v3.5h-2zM371 183h2v3.5h-2zM373 74h2v2.5h-2zM373 85h2v2.5h-2zM373 87.5h2v2h-2zM373 89.5h2v2.5h-2zM373 152.5h2v3h-2zM375 70h2v2h-2zM375 186.5h2v3h-2zM377 167.5h2v3h-2zM379 147h2v2.5h-2zM379 164.5h2v3h-2zM381 147h2v2.5h-2zM381 149.5h2v3h-2zM381 164.5h2v3h-2zM383 164.5h2v3h-2zM385 78.5h2v2h-2zM385 147h2v2.5h-2zM385 152.5h2v3h-2zM385 161.5h2v3h-2zM385 189.5h2v3.5h-2zM387 87.5h2v2h-2zM387 92h2v2.5h-2zM387 147h2v2.5h-2zM389 149.5h2v3h-2zM389 164.5h2v3h-2zM391 170.5h2v3.5h-2zM393 161.5h2v3h-2zM393 164.5h2v3h-2zM393 183h2v3.5h-2zM395 76.5h2v2h-2zM395 89.5h2v2.5h-2zM395 152.5h2v3h-2zM395 186.5h2v3h-2zM397 87.5h2v2h-2zM397 144h2v3h-2zM399 78.5h2v2h-2zM399 85h2v2.5h-2zM399 183h2v3.5h-2zM401 76.5h2v2h-2zM401 80.5h2v2.5h-2zM401 85h2v2.5h-2zM401 155.5h2v3h-2zM401 158.5h2v3h-2zM401 161.5h2v3h-2zM403 76.5h2v2h-2zM403 78.5h2v2h-2zM403 170.5h2v3.5h-2zM403 196h2v3.5h-2zM407 70h2v2h-2zM407 72h2v2h-2zM407 74h2v2.5h-2zM407 76.5h2v2h-2zM407 161.5h2v3h-2zM407 167.5h2v3h-2zM409 74h2v2.5h-2zM409 76.5h2v2h-2zM409 180h2v3h-2zM411 72h2v2h-2zM411 76.5h2v2h-2zM411 167.5h2v3h-2zM413 72h2v2h-2zM415 70h2v2h-2zM415 72h2v2h-2zM417 78.5h2v2h-2zM417 155.5h2v3h-2zM417 158.5h2v3h-2zM417 174h2v3h-2zM419 152.5h2v3h-2zM419 161.5h2v3h-2zM419 164.5h2v3h-2zM419 167.5h2v3h-2zM421 74h2v2.5h-2zM421 164.5h2v3h-2zM421 174h2v3h-2zM421 177h2v3h-2zM423 70h2v2h-2zM423 74h2v2.5h-2zM423 78.5h2v2h-2zM425 170.5h2v3.5h-2zM425 177h2v3h-2zM427 76.5h2v2h-2zM427 78.5h2v2h-2zM427 161.5h2v3h-2zM427 164.5h2v3h-2zM427 170.5h2v3.5h-2zM427 193h2v3h-2zM429 80.5h2v2.5h-2zM429 83h2v2h-2zM429 183h2v3.5h-2zM429 186.5h2v3h-2zM431 92h2v2.5h-2zM431 96.5h2v2.5h-2zM431 109h2v2.5h-2zM431 167.5h2v3h-2zM431 170.5h2v3.5h-2zM431 174h2v3h-2zM433 80.5h2v2.5h-2zM433 83h2v2h-2zM433 101.5h2v2.5h-2zM433 174h2v3h-2zM433 183h2v3.5h-2zM435 72h2v2h-2zM435 76.5h2v2h-2zM435 78.5h2v2h-2zM435 80.5h2v2.5h-2zM435 85h2v2.5h-2zM435 94.5h2v2h-2zM435 111.5h2v2.5h-2zM435 170.5h2v3.5h-2zM435 177h2v3h-2zM437 177h2v3h-2zM437 180h2v3h-2zM439 72h2v2h-2zM443 74h2v2.5h-2zM443 180h2v3h-2zM445 70h2v2h-2zM445 74h2v2.5h-2zM445 76.5h2v2h-2zM445 80.5h2v2.5h-2zM453 189.5h2v3.5h-2zM455 70h2v2h-2zM455 72h2v2h-2zM455 74h2v2.5h-2zM455 174h2v3h-2zM455 177h2v3h-2zM457 74h1v2.5h-1zM457 174h1v3h-1z"/>
<path fill="#0055ff" d="M211 209.5h2v3.5h-2zM213 206.5h2v3h-2zM215 149.5h2v3h-2zM215 174h2v3h-2zM215 177h2v3h-2zM215 186.5h2v3h-2zM215 189.5h2v3.5h-2zM215 199.5h2v3.5h-2zM215 203h2v3.5h-2zM217 203h2v3.5h-2zM219 130h2v2.5h-2zM219 138h2v3h-2zM219 141h2v3h-2zM219 147h2v2.5h-2zM219 149.5h2v3h-2zM219 164.5h2v3h-2zM219 174h2v3h-2zM219 177h2v3h-2zM219 183h2v3.5h-2zM221 147h2v2.5h-2zM221 164.5h2v3h-2zM221 174h2v3h-2zM221 180h2v3h-2zM221 206.5h2v3h-2zM223 155.5h2v3h-2zM223 186.5h2v3h-2zM225 130h2v2.5h-2zM225 132.5h2v3h-2zM225 141h2v3h-2zM225 144h2v3h-2zM225 147h2v2.5h-2zM225 164.5h2v3h-2zM225 180h2v3h-2zM225 186.5h2v3h-2zM227 127h2v3h-2zM227 132.5h2v3h-2zM227 138h2v3h-2zM227 158.5h2v3h-2zM227 164.5h2v3h-2zM227 183h2v3.5h-2zM229 186.5h2v3h-2zM231 130h2v2.5h-2zM231 132.5h2v3h-2zM231 141h2v3h-2zM231 152.5h2v3h-2zM231 158.5h2v3h-2zM231 180h2v3h-2zM233 124.5h2v2.5h-2zM233 127h2v3h-2zM233 130h2v2.5h-2zM233 138h2v3h-2zM235 70h2v2h-2zM235 122h2v2.5h-2zM235 124.5h2v2.5h-2zM235 174h2v3h-2zM235 177h2v3h-2zM237 70h2v2h-2zM237 96.5h2v2.5h-2zM237 101.5h2v2.5h-2zM237 104h2v2.5h-2zM237 116.5h2v3h-2zM237 119.5h2v2.5h-2zM237 122h2v2.5h-2zM237 127h2v3h-2zM237 144h2v3h-2zM237 147h2v2.5h-2zM237 149.5h2v3h-2zM237 155.5h2v3h-2zM237 174h2v3h-2zM237 180h2v3h-2zM239 99h2v2.5h-2zM239 130h2v2.5h-2zM239 180h2v3h-2zM241 92h2v2.5h-2zM241 94.5h2v2h-2zM241 111.5h2v2.5h-2zM241 114h2v2.5h-2zM241 116.5h2v3h-2zM241 122h2v2.5h-2zM241 124.5h2v2.5h-2zM241 135.5h2v2.5h-2zM241 138h2v3h-2zM241 144h2v3h-2zM241 152.5h2v3h-2zM241 155.5h2v3h-2zM243 87.5h2v2h-2zM243 96.5h2v2.5h-2zM243 99h2v2.5h-2zM243 111.5h2v2.5h-2zM243 116.5h2v3h-2zM243 127h2v3h-2zM243 132.5h2v3h-2zM243 144h2v3h-2zM243 149.5h2v3h-2zM243 152.5h2v3h-2zM245 72h2v2h-2zM245 89.5h2v2.5h-2zM245 109h2v2.5h-2zM245 164.5h2v3h-2zM245 174h2v3h-2zM247 83h2v2h-2zM247 85h2v2.5h-2zM247 138h2v3h-2zM247 144h2v3h-2zM247 152.5h2v3h-2zM247 155.5h2v3h-2zM247 161.5h2v3h-2zM247 170.5h2v3.5h-2zM247 174h2v3h-2zM249 70h2v2h-2zM249 74h2v2.5h-2zM249 78.5h2v2h-2zM249 80.5h2v2.5h-2zM249 83h2v2h-2zM249 138h2v3h-2zM249 144h2v3h-2zM249 149.5h2v3h-2zM249 155.5h2v3h-2zM249 158.5h2v3h-2zM249 174h2v3h-2zM251 70h2v2h-2zM251 80.5h2v2.5h-2zM251 174h2v3h-2zM253 183h2v3.5h-2zM255 130h2v2.5h-2zM255 138h2v3h-2zM255 141h2v3h-2zM257 70h2v2h-2zM257 80.5h2v2.5h-2zM257 85h2v2.5h-2zM257 135.5h2v2.5h-2zM257 147h2v2.5h-2zM257 158.5h2v3h-2zM259 70h2v2h-2zM259 72h2v2h-2zM259 78.5h2v2h-2zM259 80.5h2v2.5h-2zM259 83h2v2h-2zM259 109h2v2.5h-2zM259 114h2v2.5h-2zM259 119.5h2v2.5h-2zM259 132.5h2v3h-2zM259 135.5h2v2.5h-2zM259 152.5h2v3h-2zM259 177h2v3h-2zM261 80.5h2v2.5h-2zM261 92h2v2.5h-2zM261 94.5h2v2h-2zM261 96.5h2v2.5h-2zM261 104h2v2.5h-2zM261 106.5h2v2.5h-2zM261 109h2v2.5h-2zM261 180h2v3h-2zM263 76.5h2v2h-2zM263 80.5h2v2.5h-2zM263 92h2v2.5h-2zM263 94.5h2v2h-2zM263 104h2v2.5h-2zM263 109h2v2.5h-2zM263 114h2v2.5h-2zM263 119.5h2v2.5h-2zM263 141h2v3h-2zM263 149.5h2v3h-2zM263 152.5h2v3h-2zM263 177h2v3h-2zM265 124.5h2v2.5h-2zM265 147h2v2.5h-2zM265 149.5h2v3h-2zM267 130h2v2.5h-2zM267 132.5h2v3h-2zM267 149.5h2v3h-2zM267 152.5h2v3h-2zM267 183h2v3.5h-2zM269 70h2v2h-2zM269 72h2v2h-2zM269 78.5h2v2h-2zM269 80.5h2v2.5h-2zM269 127h2v3h-2zM269 135.5h2v2.5h-2zM269 152.5h2v3h-2zM269 180h2v3h-2zM269 183h2v3.5h-2zM271 72h2v2h-2zM271 74h2v2.5h-2zM271 135.5h2v2.5h-2zM271 138h2v3h-2zM271 141h2v3h-2zM271 147h2v2.5h-2zM271 149.5h2v3h-2zM271 180h2v3h-2zM273 70h2v2h-2zM273 72h2v2h-2zM273 74h2v2.5h-2zM273 152.5h2v3h-2zM275 74h2v2.5h-2zM275 78.5h2v2h-2zM275 135.5h2v2.5h-2zM275 149.5h2v3h-2zM275 180h2v3h-2zM277 76.5h2v2h-2zM277 132.5h2v3h-2zM281 152.5h2v3h-2zM281 155.5h2v3h-2zM281 183h2v3.5h-2zM283 147h2v2.5h-2zM283 186.5h2v3h-2zM285 161.5h2v3h-2zM287 149.5h2v3h-2zM287 183h2v3.5h-2zM289 72h2v2h-2zM289 135.5h2v2.5h-2zM291 72h2v2h-2zM291 74h2v2.5h-2zM291 76.5h2v2h-2zM291 183h2v3.5h-2zM293 72h2v2h-2zM293 74h2v2.5h-2zM293 144h2v3h-2zM293 155.5h2v3h-2zM293 170.5h2v3.5h-2zM295 72h2v2h-2zM295 78.5h2v2h-2zM297 70h2v2h-2zM297 138h2v3h-2zM297 141h2v3h-2zM297 180h2v3h-2zM299 138h2v3h-2zM299 141h2v3h-2zM301 141h2v3h-2zM303 78.5h2v2h-2zM305 74h2v2.5h-2zM307 70h2v2h-2zM307 72h2v2h-2zM307 74h2v2.5h-2zM307 167.5h2v3h-2zM309 167.5h2v3h-2zM311 76.5h2v2h-2zM311 155.5h2v3h-2zM313 70h2v2h-2zM313 72h2v2h-2zM313 76.5h2v2h-2zM313 78.5h2v2h-2zM313 80.5h2v2.5h-2zM313 141h2v3h-2zM315 141h2v3h-2zM315 164.5h2v3h-2zM315 180h2v3h-2zM317 78.5h2v2h-2zM317 147h2v2.5h-2zM319 83h2v2h-2zM319 147h2v2.5h-2zM319 158.5h2v3h-2zM321 76.5h2v2h-2zM321 80.5h2v2.5h-2zM321 83h2v2h-2zM321 85h2v2.5h-2zM323 144h2v3h-2zM323 161.5h2v3h-2zM327 92h2v2.5h-2zM327 96.5h2v2.5h-2zM327 158.5h2v3h-2zM329 96.5h2v2.5h-2zM329 180h2v3h-2zM331 180h2v3h-2zM333 92h2v2.5h-2zM333 152.5h2v3h-2zM333 155.5h2v3h-2zM333 161.5h2v3h-2zM333 164.5h2v3h-2zM333 177h2v3h-2zM335 92h2v2.5h-2zM335 155.5h2v3h-2zM339 152.5h2v3h-2zM339 158.5h2v3h-2zM339 183h2v3.5h-2zM341 89.5h2v2.5h-2zM341 94.5h2v2h-2zM341 155.5h2v3h-2zM341 183h2v3.5h-2zM343 87.5h2v2h-2zM343 158.5h2v3h-2zM343 186.5h2v3h-2zM345 144h2v3h-2zM345 158.5h2v3h-2zM345 180h2v3h-2zM347 87.5h2v2h-2zM347 161.5h2v3h-2zM347 164.5h2v3h-2zM347 167.5h2v3h-2zM349 87.5h2v2h-2zM349 152.5h2v3h-2zM349 155.5h2v3h-2zM349 158.5h2v3h-2zM351 80.5h2v2.5h-2zM351 155.5h2v3h-2zM351 158.5h2v3h-2zM351 186.5h2v3h-2zM353 152.5h2v3h-2zM353 158.5h2v3h-2zM353 167.5h2v3h-2zM353 183h2v3.5h-2zM355 144h2v3h-2zM357 144h2v3h-2zM357 170.5h2v3.5h-2zM359 85h2v2.5h-2zM359 152.5h2v3h-2zM359 158.5h2v3h-2zM359 170.5h2v3.5h-2zM361 147h2v2.5h-2zM361 149.5h2v3h-2zM361 167.5h2v3h-2zM361 183h2v3.5h-2zM361 186.5h2v3h-2zM363 92h2v2.5h-2zM363 147h2v2.5h-2zM363 167.5h2v3h-2zM363 180h2v3h-2zM365 87.5h2v2h-2zM365 186.5h2v3h-2zM367 87.5h2v2h-2zM367 170.5h2v3.5h-2zM367 174h2v3h-2zM367 183h2v3.5h-2zM369 155.5h2v3h-2zM369 167.5h2v3h-2zM369 170.5h2v3.5h-2zM369 180h2v3h-2zM371 87.5h2v2h-2zM371 147h2v2.5h-2zM375 149.5h2v3h-2zM375 167.5h2v3h-2zM377 87.5h2v2h-2zM377 147h2v2.5h-2zM379 87.5h2v2h-2zM379 89.5h2v2.5h-2zM385 87.5h2v2h-2zM385 164.5h2v3h-2zM385 183h2v3.5h-2zM387 149.5h2v3h-2zM387 164.5h2v3h-2zM387 183h2v3.5h-2zM389 92h2v2.5h-2zM389 147h2v2.5h-2zM389 183h2v3.5h-2zM389 186.5h2v3h-2zM391 144h2v3h-2zM391 147h2v2.5h-2zM391 180h2v3h-2zM393 147h2v2.5h-2zM393 167.5h2v3h-2zM395 70h2v2h-2zM395 78.5h2v2h-2zM395 147h2v2.5h-2zM395 155.5h2v3h-2zM395 161.5h2v3h-2zM395 183h2v3.5h-2zM397 89.5h2v2.5h-2zM397 174h2v3h-2zM399 83h2v2h-2zM399 149.5h2v3h-2zM399 152.5h2v3h-2zM401 83h2v2h-2zM401 147h2v2.5h-2zM401 167.5h2v3h-2zM401 183h2v3.5h-2zM403 80.5h2v2.5h-2zM405 74h2v2.5h-2zM405 76.5h2v2h-2zM411 78.5h2v2h-2zM413 70h2v2h-2zM415 164.5h2v3h-2zM415 167.5h2v3h-2zM415 174h2v3h-2zM417 80.5h2v2.5h-2zM417 161.5h2v3h-2zM417 167.5h2v3h-2zM417 177h2v3h-2zM417 180h2v3h-2zM417 183h2v3.5h-2zM417 189.5h2v3.5h-2zM419 70h2v2h-2zM419 74h2v2.5h-2zM419 76.5h2v2h-2zM419 80.5h2v2.5h-2zM419 180h2v3h-2zM423 80.5h2v2.5h-2zM423 85h2v2.5h-2zM423 161.5h2v3h-2zM423 174h2v3h-2zM425 78.5h2v2h-2zM425 89.5h2v2.5h-2zM425 161.5h2v3h-2zM427 80.5h2v2.5h-2zM427 83h2v2h-2zM427 177h2v3h-2zM429 180h2v3h-2zM431 74h2v2.5h-2zM431 78.5h2v2h-2zM431 99h2v2.5h-2zM431 101.5h2v2.5h-2zM431 106.5h2v2.5h-2zM431 164.5h2v3h-2zM431 177h2v3h-2zM433 72h2v2h-2zM433 76.5h2v2h-2zM433 96.5h2v2.5h-2zM433 99h2v2.5h-2zM433 109h2v2.5h-2zM433 161.5h2v3h-2zM433 164.5h2v3h-2zM433 170.5h2v3.5h-2zM435 83h2v2h-2zM435 92h2v2.5h-2zM435 174h2v3h-2zM437 70h2v2h-2zM437 74h2v2.5h-2zM437 80.5h2v2.5h-2zM437 83h2v2h-2zM437 87.5h2v2h-2zM437 164.5h2v3h-2zM437 167.5h2v3h-2zM437 174h2v3h-2zM439 177h2v3h-2zM439 180h2v3h-2zM439 183h2v3.5h-2zM441 161.5h2v3h-2zM441 167.5h2v3h-2zM441 177h2v3h-2zM443 174h2v3h-2zM443 183h2v3.5h-2zM445 72h2v2h-2zM445 78.5h2v2h-2zM445 83h2v2h-2zM445 158.5h2v3h-2zM445 164.5h2v3h-2zM445 167.5h2v3h-2zM453 74h2v2.5h-2zM453 170.5h2v3.5h-2zM453 180h2v3h-2zM453 186.5h2v3h-2zM455 76.5h2v2h-2zM455 78.5h2v2h-2zM455 167.5h2v3h-2zM455 170.5h2v3.5h-2zM457 78.5h1v2h-1zM457 170.5h1v3.5h-1z"/>
<path fill="#0080ff" d="M211 206.5h2v3h-2zM213 186.5h2v3h-2zM213 189.5h2v3.5h-2zM213 193h2v3h-2zM215 147h2v2.5h-2zM215 152.5h2v3h-2zM215 155.5h2v3h-2zM215 158.5h2v3h-2zM215 161.5h2v3h-2zM215 164.5h2v3h-2zM215 180h2v3h-2zM217 141h2v3h-2zM217 149.5h2v3h-2zM217 152.5h2v3h-2zM217 158.5h2v3h-2zM217 189.5h2v3.5h-2zM219 135.5h2v2.5h-2zM219 144h2v3h-2zM219 152.5h2v3h-2zM219 155.5h2v3h-2zM219 161.5h2v3h-2zM219 170.5h2v3.5h-2zM219 180h2v3h-2zM219 186.5h2v3h-2zM221 124.5h2v2.5h-2zM221 127h2v3h-2zM221 152.5h2v3h-2zM221 167.5h2v3h-2zM221 189.5h2v3.5h-2zM223 132.5h2v3h-2zM223 152.5h2v3h-2zM223 161.5h2v3h-2zM223 164.5h2v3h-2zM223 170.5h2v3.5h-2zM223 177h2v3h-2zM223 180h2v3h-2zM223 183h2v3.5h-2zM223 189.5h2v3.5h-2zM223 193h2v3h-2zM225 127h2v3h-2zM225 135.5h2v2.5h-2zM225 149.5h2v3h-2zM225 152.5h2v3h-2zM225 155.5h2v3h-2zM225 170.5h2v3.5h-2zM225 174h2v3h-2zM227 135.5h2v2.5h-2zM227 167.5h2v3h-2zM227 170.5h2v3.5h-2zM227 174h2v3h-2zM227 177h2v3h-2zM229 180h2v3h-2zM229 183h2v3.5h-2zM231 124.5h2v2.5h-2zM231 127h2v3h-2zM231 135.5h2v2.5h-2zM231 138h2v3h-2zM231 170.5h2v3.5h-2zM231 177h2v3h-2zM233 122h2v2.5h-2zM233 161.5h2v3h-2zM233 170.5h2v3.5h-2zM233 180h2v3h-2zM235 76.5h2v2h-2zM235 80.5h2v2.5h-2zM235 130h2v2.5h-2zM235 164.5h2v3h-2zM235 167.5h2v3h-2zM235 170.5h2v3.5h-2zM237 76.5h2v2h-2zM237 83h2v2h-2zM237 85h2v2.5h-2zM237 106.5h2v2.5h-2zM237 135.5h2v2.5h-2zM237 138h2v3h-2zM237 158.5h2v3h-2zM237 170.5h2v3.5h-2zM237 177h2v3h-2zM239 104h2v2.5h-2zM239 111.5h2v2.5h-2zM239 114h2v2.5h-2zM239 132.5h2v3h-2zM241 101.5h2v2.5h-2zM241 119.5h2v2.5h-2zM241 149.5h2v3h-2zM241 158.5h2v3h-2zM243 104h2v2.5h-2zM243 109h2v2.5h-2zM243 114h2v2.5h-2zM243 130h2v2.5h-2zM243 138h2v3h-2zM243 141h2v3h-2zM243 147h2v2.5h-2zM243 180h2v3h-2zM245 101.5h2v2.5h-2zM245 111.5h2v2.5h-2zM245 116.5h2v3h-2zM245 119.5h2v2.5h-2zM245 124.5h2v2.5h-2zM245 127h2v3h-2zM245 130h2v2.5h-2zM245 132.5h2v3h-2zM245 135.5h2v2.5h-2zM245 138h2v3h-2zM245 152.5h2v3h-2zM245 161.5h2v3h-2zM245 167.5h2v3h-2zM245 170.5h2v3.5h-2zM247 72h2v2h-2zM247 92h2v2.5h-2zM247 158.5h2v3h-2zM247 164.5h2v3h-2zM249 85h2v2.5h-2zM249 96.5h2v2.5h-2zM249 114h2v2.5h-2zM249 116.5h2v3h-2zM249 122h2v2.5h-2zM249 124.5h2v2.5h-2zM249 127h2v3h-2zM249 130h2v2.5h-2zM249 132.5h2v3h-2zM249 135.5h2v2.5h-2zM249 141h2v3h-2zM249 147h2v2.5h-2zM249 152.5h2v3h-2zM249 161.5h2v3h-2zM251 72h2v2h-2zM251 74h2v2.5h-2zM251 141h2v3h-2zM251 152.5h2v3h-2zM251 161.5h2v3h-2zM253 127h2v3h-2zM253 141h2v3h-2zM253 149.5h2v3h-2zM253 152.5h2v3h-2zM253 155.5h2v3h-2zM253 177h2v3h-2zM255 144h2v3h-2zM255 155.5h2v3h-2zM259 74h2v2.5h-2zM259 122h2v2.5h-2zM259 127h2v3h-2zM259 130h2v2.5h-2zM259 155.5h2v3h-2zM261 99h2v2.5h-2zM261 138h2v3h-2zM261 141h2v3h-2zM261 144h2v3h-2zM261 147h2v2.5h-2zM261 149.5h2v3h-2zM261 152.5h2v3h-2zM263 99h2v2.5h-2zM263 116.5h2v3h-2zM263 122h2v2.5h-2zM263 155.5h2v3h-2zM263 174h2v3h-2zM265 127h2v3h-2zM265 132.5h2v3h-2zM265 152.5h2v3h-2zM265 183h2v3.5h-2zM267 111.5h2v2.5h-2zM267 122h2v2.5h-2zM267 124.5h2v2.5h-2zM267 127h2v3h-2zM267 155.5h2v3h-2zM269 74h2v2.5h-2zM269 116.5h2v3h-2zM269 122h2v2.5h-2zM269 124.5h2v2.5h-2zM269 130h2v2.5h-2zM269 138h2v3h-2zM271 76.5h2v2h-2zM271 78.5h2v2h-2zM271 83h2v2h-2zM271 132.5h2v3h-2zM271 152.5h2v3h-2zM273 76.5h2v2h-2zM273 141h2v3h-2zM273 149.5h2v3h-2zM275 72h2v2h-2zM275 132.5h2v3h-2zM275 138h2v3h-2zM275 155.5h2v3h-2zM277 74h2v2.5h-2zM277 78.5h2v2h-2zM277 130h2v2.5h-2zM277 158.5h2v3h-2zM279 76.5h2v2h-2zM279 138h2v3h-2zM279 147h2v2.5h-2zM279 183h2v3.5h-2zM281 70h2v2h-2zM281 135.5h2v2.5h-2zM283 70h2v2h-2zM283 74h2v2.5h-2zM283 76.5h2v2h-2zM283 138h2v3h-2zM283 141h2v3h-2zM283 183h2v3.5h-2zM285 70h2v2h-2zM285 72h2v2h-2zM285 74h2v2.5h-2zM285 76.5h2v2h-2zM285 135.5h2v2.5h-2zM285 158.5h2v3h-2zM287 144h2v3h-2zM287 158.5h2v3h-2zM289 70h2v2h-2zM289 183h2v3.5h-2zM291 132.5h2v3h-2zM293 70h2v2h-2zM293 76.5h2v2h-2zM293 78.5h2v2h-2zM293 180h2v3h-2zM295 135.5h2v2.5h-2zM295 161.5h2v3h-2zM295 164.5h2v3h-2zM297 72h2v2h-2zM297 170.5h2v3.5h-2zM299 70h2v2h-2zM299 74h2v2.5h-2zM299 167.5h2v3h-2zM299 170.5h2v3.5h-2zM299 180h2v3h-2zM301 164.5h2v3h-2zM303 80.5h2v2.5h-2zM303 135.5h2v2.5h-2zM305 76.5h2v2h-2zM305 138h2v3h-2zM305 183h2v3.5h-2zM307 76.5h2v2h-2zM307 78.5h2v2h-2zM307 138h2v3h-2zM307 141h2v3h-2zM307 170.5h2v3.5h-2zM311 147h2v2.5h-2zM311 158.5h2v3h-2zM311 161.5h2v3h-2zM311 167.5h2v3h-2zM311 183h2v3.5h-2zM313 138h2v3h-2zM315 78.5h2v2h-2zM315 83h2v2h-2zM315 89.5h2v2.5h-2zM315 167.5h2v3h-2zM317 83h2v2h-2zM317 92h2v2.5h-2zM317 183h2v3.5h-2zM319 89.5h2v2.5h-2zM319 144h2v3h-2zM319 180h2v3h-2zM321 78.5h2v2h-2zM321 87.5h2v2h-2zM321 152.5h2v3h-2zM323 158.5h2v3h-2zM323 180h2v3h-2zM325 87.5h2v2h-2zM325 94.5h2v2h-2zM327 144h2v3h-2zM327 170.5h2v3.5h-2zM327 180h2v3h-2zM329 101.5h2v2.5h-2zM329 141h2v3h-2zM329 177h2v3h-2zM331 94.5h2v2h-2zM333 99h2v2.5h-2zM333 149.5h2v3h-2zM333 158.5h2v3h-2zM335 158.5h2v3h-2zM335 180h2v3h-2zM337 144h2v3h-2zM337 158.5h2v3h-2zM337 161.5h2v3h-2zM337 177h2v3h-2zM339 85h2v2.5h-2zM339 101.5h2v2.5h-2zM339 144h2v3h-2zM341 96.5h2v2.5h-2zM341 147h2v2.5h-2zM343 89.5h2v2.5h-2zM343 92h2v2.5h-2zM343 149.5h2v3h-2zM343 183h2v3.5h-2zM345 92h2v2.5h-2zM345 94.5h2v2h-2zM345 147h2v2.5h-2zM345 167.5h2v3h-2zM345 170.5h2v3.5h-2zM345 177h2v3h-2zM347 89.5h2v2.5h-2zM347 144h2v3h-2zM349 147h2v2.5h-2zM349 149.5h2v3h-2zM349 167.5h2v3h-2zM349 180h2v3h-2zM349 183h2v3.5h-2zM351 85h2v2.5h-2zM357 87.5h2v2h-2zM357 89.5h2v2.5h-2zM359 87.5h2v2h-2zM361 85h2v2.5h-2zM361 180h2v3h-2zM363 144h2v3h-2zM363 170.5h2v3.5h-2zM365 170.5h2v3.5h-2zM365 180h2v3h-2zM367 149.5h2v3h-2zM367 177h2v3h-2zM367 180h2v3h-2zM369 87.5h2v2h-2zM369 89.5h2v2.5h-2zM371 89.5h2v2.5h-2zM371 180h2v3h-2zM373 92h2v2.5h-2zM373 164.5h2v3h-2zM373 167.5h2v3h-2zM373 180h2v3h-2zM373 183h2v3.5h-2zM375 87.5h2v2h-2zM375 147h2v2.5h-2zM377 89.5h2v2.5h-2zM377 174h2v3h-2zM377 180h2v3h-2zM379 141h2v3h-2zM379 180h2v3h-2zM379 183h2v3.5h-2zM381 167.5h2v3h-2zM381 180h2v3h-2zM381 183h2v3.5h-2zM383 147h2v2.5h-2zM383 180h2v3h-2zM383 183h2v3.5h-2zM385 85h2v2.5h-2zM385 144h2v3h-2zM385 180h2v3h-2zM389 94.5h2v2h-2zM389 167.5h2v3h-2zM391 141h2v3h-2zM393 92h2v2.5h-2zM393 141h2v3h-2zM393 170.5h2v3.5h-2zM393 174h2v3h-2zM393 177h2v3h-2zM393 180h2v3h-2zM395 83h2v2h-2zM395 85h2v2.5h-2zM395 87.5h2v2h-2zM395 92h2v2.5h-2zM395 164.5h2v3h-2zM395 167.5h2v3h-2zM397 92h2v2.5h-2zM397 94.5h2v2h-2zM397 147h2v2.5h-2zM397 177h2v3h-2zM399 87.5h2v2h-2zM399 144h2v3h-2zM399 147h2v2.5h-2zM399 161.5h2v3h-2zM399 167.5h2v3h-2zM399 180h2v3h-2zM401 144h2v3h-2zM401 149.5h2v3h-2zM401 170.5h2v3.5h-2zM401 174h2v3h-2zM401 180h2v3h-2zM403 158.5h2v3h-2zM405 186.5h2v3h-2zM407 149.5h2v3h-2zM409 78.5h2v2h-2zM409 80.5h2v2.5h-2zM409 155.5h2v3h-2zM411 80.5h2v2.5h-2zM411 155.5h2v3h-2zM411 158.5h2v3h-2zM413 89.5h2v2.5h-2zM415 74h2v2.5h-2zM415 76.5h2v2h-2zM415 78.5h2v2h-2zM415 155.5h2v3h-2zM415 158.5h2v3h-2zM415 177h2v3h-2zM417 170.5h2v3.5h-2zM419 72h2v2h-2zM419 170.5h2v3.5h-2zM419 183h2v3.5h-2zM421 78.5h2v2h-2zM421 80.5h2v2.5h-2zM421 85h2v2.5h-2zM421 152.5h2v3h-2zM421 155.5h2v3h-2zM423 83h2v2h-2zM423 158.5h2v3h-2zM423 170.5h2v3.5h-2zM423 180h2v3h-2zM425 70h2v2h-2zM425 85h2v2.5h-2zM425 94.5h2v2h-2zM425 158.5h2v3h-2zM425 167.5h2v3h-2zM425 174h2v3h-2zM427 85h2v2.5h-2zM427 94.5h2v2h-2zM427 155.5h2v3h-2zM427 158.5h2v3h-2zM429 85h2v2.5h-2zM429 87.5h2v2h-2zM429 101.5h2v2.5h-2zM429 167.5h2v3h-2zM429 177h2v3h-2zM431 80.5h2v2.5h-2zM431 87.5h2v2h-2zM431 89.5h2v2.5h-2zM431 94.5h2v2h-2zM433 74h2v2.5h-2zM433 106.5h2v2.5h-2zM433 158.5h2v3h-2zM433 177h2v3h-2zM433 180h2v3h-2zM435 87.5h2v2h-2zM435 89.5h2v2.5h-2zM435 96.5h2v2.5h-2zM435 101.5h2v2.5h-2zM435 106.5h2v2.5h-2zM435 114h2v2.5h-2zM435 116.5h2v3h-2zM435 122h2v2.5h-2zM435 124.5h2v2.5h-2zM435 155.5h2v3h-2zM435 161.5h2v3h-2zM435 164.5h2v3h-2zM437 72h2v2h-2zM437 76.5h2v2h-2zM437 85h2v2.5h-2zM437 96.5h2v2.5h-2zM437 161.5h2v3h-2zM439 78.5h2v2h-2zM439 80.5h2v2.5h-2zM439 158.5h2v3h-2zM439 167.5h2v3h-2zM439 170.5h2v3.5h-2zM441 155.5h2v3h-2zM441 158.5h2v3h-2zM441 174h2v3h-2zM443 72h2v2h-2zM443 76.5h2v2h-2zM443 83h2v2h-2zM443 167.5h2v3h-2zM445 85h2v2.5h-2zM445 155.5h2v3h-2zM445 161.5h2v3h-2zM453 70h2v2h-2zM453 167.5h2v3h-2zM455 161.5h2v3h-2zM455 164.5h2v3h-2zM455 180h2v3h-2zM457 167.5h1v3h-1zM457 180h1v3h-1z"/>
<path fill="#00aaff" d="M213 170.5h2v3.5h-2zM213 174h2v3h-2zM215 141h2v3h-2zM215 144h2v3h-2zM215 167.5h2v3h-2zM215 170.5h2v3.5h-2zM215 193h2v3h-2zM215 196h2v3.5h-2zM217 135.5h2v2.5h-2zM217 147h2v2.5h-2zM217 180h2v3h-2zM217 186.5h2v3h-2zM217 193h2v3h-2zM219 127h2v3h-2zM221 177h2v3h-2zM223 127h2v3h-2zM223 130h2v2.5h-2zM223 174h2v3h-2zM223 196h2v3.5h-2zM225 124.5h2v2.5h-2zM225 138h2v3h-2zM225 158.5h2v3h-2zM225 167.5h2v3h-2zM229 119.5h2v2.5h-2zM229 174h2v3h-2zM229 177h2v3h-2zM231 122h2v2.5h-2zM231 174h2v3h-2zM233 116.5h2v3h-2zM233 119.5h2v2.5h-2zM233 174h2v3h-2zM233 177h2v3h-2zM235 74h2v2.5h-2zM235 78.5h2v2h-2zM235 83h2v2h-2zM235 85h2v2.5h-2zM235 87.5h2v2h-2zM235 89.5h2v2.5h-2zM235 94.5h2v2h-2zM235 96.5h2v2.5h-2zM235 99h2v2.5h-2zM235 109h2v2.5h-2zM235 111.5h2v2.5h-2zM235 119.5h2v2.5h-2zM237 87.5h2v2h-2zM237 99h2v2.5h-2zM237 109h2v2.5h-2zM237 141h2v3h-2zM237 152.5h2v3h-2zM237 161.5h2v3h-2zM237 164.5h2v3h-2zM239 101.5h2v2.5h-2zM239 109h2v2.5h-2zM239 116.5h2v3h-2zM239 122h2v2.5h-2zM239 124.5h2v2.5h-2zM239 141h2v3h-2zM239 147h2v2.5h-2zM239 149.5h2v3h-2zM239 174h2v3h-2zM239 177h2v3h-2zM241 96.5h2v2.5h-2zM241 99h2v2.5h-2zM241 106.5h2v2.5h-2zM241 109h2v2.5h-2zM241 161.5h2v3h-2zM241 170.5h2v3.5h-2zM241 174h2v3h-2zM241 177h2v3h-2zM243 106.5h2v2.5h-2zM243 119.5h2v2.5h-2zM243 122h2v2.5h-2zM243 124.5h2v2.5h-2zM243 135.5h2v2.5h-2zM243 155.5h2v3h-2zM243 158.5h2v3h-2zM243 177h2v3h-2zM245 114h2v2.5h-2zM245 122h2v2.5h-2zM245 144h2v3h-2zM245 147h2v2.5h-2zM245 149.5h2v3h-2zM247 114h2v2.5h-2zM247 116.5h2v3h-2zM247 132.5h2v3h-2zM247 149.5h2v3h-2zM249 87.5h2v2h-2zM249 92h2v2.5h-2zM249 109h2v2.5h-2zM249 111.5h2v2.5h-2zM249 119.5h2v2.5h-2zM249 164.5h2v3h-2zM249 167.5h2v3h-2zM249 170.5h2v3.5h-2zM251 76.5h2v2h-2zM251 89.5h2v2.5h-2zM251 92h2v2.5h-2zM251 94.5h2v2h-2zM251 96.5h2v2.5h-2zM251 104h2v2.5h-2zM251 109h2v2.5h-2zM251 135.5h2v2.5h-2zM251 138h2v3h-2zM251 147h2v2.5h-2zM251 155.5h2v3h-2zM251 158.5h2v3h-2zM251 164.5h2v3h-2zM251 167.5h2v3h-2zM251 170.5h2v3.5h-2zM253 70h2v2h-2zM253 135.5h2v2.5h-2zM253 138h2v3h-2zM253 144h2v3h-2zM253 158.5h2v3h-2zM255 116.5h2v3h-2zM255 119.5h2v2.5h-2zM255 124.5h2v2.5h-2zM255 127h2v3h-2zM255 132.5h2v3h-2zM255 158.5h2v3h-2zM255 180h2v3h-2zM257 87.5h2v2h-2zM257 89.5h2v2.5h-2zM257 94.5h2v2h-2zM257 122h2v2.5h-2zM257 130h2v2.5h-2zM257 132.5h2v3h-2zM257 155.5h2v3h-2zM257 174h2v3h-2zM257 180h2v3h-2zM259 76.5h2v2h-2zM259 87.5h2v2h-2zM259 99h2v2.5h-2zM259 116.5h2v3h-2zM259 161.5h2v3h-2zM259 174h2v3h-2zM261 135.5h2v2.5h-2zM263 74h2v2.5h-2zM263 83h2v2h-2zM263 85h2v2.5h-2zM263 87.5h2v2h-2zM263 161.5h2v3h-2zM263 170.5h2v3.5h-2zM265 70h2v2h-2zM265 72h2v2h-2zM265 74h2v2.5h-2zM265 83h2v2h-2zM265 111.5h2v2.5h-2zM265 114h2v2.5h-2zM265 122h2v2.5h-2zM265 180h2v3h-2zM267 114h2v2.5h-2zM267 158.5h2v3h-2zM269 76.5h2v2h-2zM269 83h2v2h-2zM269 85h2v2.5h-2zM269 111.5h2v2.5h-2zM269 114h2v2.5h-2zM269 119.5h2v2.5h-2zM271 70h2v2h-2zM271 80.5h2v2.5h-2zM271 124.5h2v2.5h-2zM271 130h2v2.5h-2zM271 155.5h2v3h-2zM271 177h2v3h-2zM273 78.5h2v2h-2zM273 83h2v2h-2zM273 116.5h2v3h-2zM273 119.5h2v2.5h-2zM273 122h2v2.5h-2zM273 124.5h2v2.5h-2zM273 127h2v3h-2zM273 135.5h2v2.5h-2zM273 155.5h2v3h-2zM273 177h2v3h-2zM275 76.5h2v2h-2zM275 80.5h2v2.5h-2zM275 83h2v2h-2zM275 122h2v2.5h-2zM277 80.5h2v2.5h-2zM277 116.5h2v3h-2zM277 119.5h2v2.5h-2zM277 122h2v2.5h-2zM277 124.5h2v2.5h-2zM277 127h2v3h-2zM277 180h2v3h-2zM279 74h2v2.5h-2zM279 78.5h2v2h-2zM279 149.5h2v3h-2zM283 72h2v2h-2zM283 130h2v2.5h-2zM283 132.5h2v3h-2zM283 149.5h2v3h-2zM283 152.5h2v3h-2zM285 78.5h2v2h-2zM285 80.5h2v2.5h-2zM285 83h2v2h-2zM287 72h2v2h-2zM287 74h2v2.5h-2zM287 78.5h2v2h-2zM287 180h2v3h-2zM289 76.5h2v2h-2zM289 80.5h2v2.5h-2zM289 161.5h2v3h-2zM289 164.5h2v3h-2zM289 180h2v3h-2zM291 70h2v2h-2zM291 80.5h2v2.5h-2zM293 167.5h2v3h-2zM295 83h2v2h-2zM297 76.5h2v2h-2zM297 78.5h2v2h-2zM297 130h2v2.5h-2zM297 132.5h2v3h-2zM297 174h2v3h-2zM299 80.5h2v2.5h-2zM299 132.5h2v3h-2zM299 135.5h2v2.5h-2zM301 70h2v2h-2zM301 72h2v2h-2zM301 138h2v3h-2zM303 174h2v3h-2zM303 180h2v3h-2zM305 78.5h2v2h-2zM305 135.5h2v2.5h-2zM305 167.5h2v3h-2zM305 170.5h2v3.5h-2zM307 135.5h2v2.5h-2zM307 174h2v3h-2zM309 70h2v2h-2zM309 74h2v2.5h-2zM309 76.5h2v2h-2zM309 138h2v3h-2zM311 74h2v2.5h-2zM311 144h2v3h-2zM313 83h2v2h-2zM313 167.5h2v3h-2zM315 80.5h2v2.5h-2zM315 85h2v2.5h-2zM315 138h2v3h-2zM315 170.5h2v3.5h-2zM317 80.5h2v2.5h-2zM317 141h2v3h-2zM317 161.5h2v3h-2zM319 164.5h2v3h-2zM321 144h2v3h-2zM321 180h2v3h-2zM323 141h2v3h-2zM323 164.5h2v3h-2zM323 177h2v3h-2zM325 96.5h2v2.5h-2zM325 141h2v3h-2zM325 180h2v3h-2zM327 99h2v2.5h-2zM327 161.5h2v3h-2zM329 99h2v2.5h-2zM329 161.5h2v3h-2zM329 164.5h2v3h-2zM329 174h2v3h-2zM331 96.5h2v2.5h-2zM331 99h2v2.5h-2zM331 138h2v3h-2zM331 141h2v3h-2zM331 177h2v3h-2zM333 144h2v3h-2zM333 147h2v2.5h-2zM333 170.5h2v3.5h-2zM333 174h2v3h-2zM335 94.5h2v2h-2zM335 99h2v2.5h-2zM335 147h2v2.5h-2zM335 161.5h2v3h-2zM337 101.5h2v2.5h-2zM337 138h2v3h-2zM337 141h2v3h-2zM337 164.5h2v3h-2zM337 167.5h2v3h-2zM339 99h2v2.5h-2zM339 104h2v2.5h-2zM339 106.5h2v2.5h-2zM339 138h2v3h-2zM339 161.5h2v3h-2zM341 114h2v2.5h-2zM341 149.5h2v3h-2zM341 158.5h2v3h-2zM341 161.5h2v3h-2zM341 177h2v3h-2zM341 180h2v3h-2zM343 85h2v2.5h-2zM343 144h2v3h-2zM343 147h2v2.5h-2zM343 152.5h2v3h-2zM345 174h2v3h-2zM347 170.5h2v3.5h-2zM349 89.5h2v2.5h-2zM349 144h2v3h-2zM349 174h2v3h-2zM351 89.5h2v2.5h-2zM351 149.5h2v3h-2zM351 164.5h2v3h-2zM353 89.5h2v2.5h-2zM353 147h2v2.5h-2zM353 174h2v3h-2zM355 174h2v3h-2zM355 177h2v3h-2zM355 180h2v3h-2zM357 141h2v3h-2zM357 177h2v3h-2zM359 149.5h2v3h-2zM359 174h2v3h-2zM361 144h2v3h-2zM361 170.5h2v3.5h-2zM361 177h2v3h-2zM363 174h2v3h-2zM365 89.5h2v2.5h-2zM365 149.5h2v3h-2zM365 177h2v3h-2zM369 149.5h2v3h-2zM369 177h2v3h-2zM371 144h2v3h-2zM373 144h2v3h-2zM373 149.5h2v3h-2zM373 170.5h2v3.5h-2zM375 164.5h2v3h-2zM377 177h2v3h-2zM379 92h2v2.5h-2zM379 144h2v3h-2zM379 170.5h2v3.5h-2zM379 174h2v3h-2zM381 89.5h2v2.5h-2zM381 144h2v3h-2zM381 170.5h2v3.5h-2zM383 94.5h2v2h-2zM383 149.5h2v3h-2zM383 167.5h2v3h-2zM383 170.5h2v3.5h-2zM385 92h2v2.5h-2zM385 167.5h2v3h-2zM385 177h2v3h-2zM387 94.5h2v2h-2zM387 96.5h2v2.5h-2zM387 180h2v3h-2zM389 170.5h2v3.5h-2zM389 180h2v3h-2zM391 174h2v3h-2zM391 177h2v3h-2zM393 138h2v3h-2zM395 144h2v3h-2zM395 180h2v3h-2zM397 96.5h2v2.5h-2zM397 135.5h2v2.5h-2zM397 138h2v3h-2zM397 141h2v3h-2zM399 89.5h2v2.5h-2zM399 155.5h2v3h-2zM399 170.5h2v3.5h-2zM399 174h2v3h-2zM399 177h2v3h-2zM401 87.5h2v2h-2zM401 164.5h2v3h-2zM401 177h2v3h-2zM403 144h2v3h-2zM403 147h2v2.5h-2zM403 155.5h2v3h-2zM405 78.5h2v2h-2zM405 80.5h2v2.5h-2zM405 177h2v3h-2zM405 180h2v3h-2zM405 183h2v3.5h-2zM407 80.5h2v2.5h-2zM407 158.5h2v3h-2zM409 83h2v2h-2zM409 158.5h2v3h-2zM411 83h2v2h-2zM413 74h2v2.5h-2zM413 92h2v2.5h-2zM413 94.5h2v2h-2zM413 96.5h2v2.5h-2zM413 99h2v2.5h-2zM413 155.5h2v3h-2zM413 170.5h2v3.5h-2zM413 174h2v3h-2zM413 183h2v3.5h-2zM415 92h2v2.5h-2zM415 96.5h2v2.5h-2zM415 149.5h2v3h-2zM415 152.5h2v3h-2zM415 180h2v3h-2zM415 183h2v3.5h-2zM415 186.5h2v3h-2zM417 83h2v2h-2zM417 85h2v2.5h-2zM417 87.5h2v2h-2zM417 164.5h2v3h-2zM419 78.5h2v2h-2zM419 85h2v2.5h-2zM419 147h2v2.5h-2zM419 149.5h2v3h-2zM423 87.5h2v2h-2zM423 152.5h2v3h-2zM423 155.5h2v3h-2zM423 164.5h2v3h-2zM423 167.5h2v3h-2zM423 183h2v3.5h-2zM425 83h2v2h-2zM425 87.5h2v2h-2zM425 92h2v2.5h-2zM425 96.5h2v2.5h-2zM425 149.5h2v3h-2zM425 152.5h2v3h-2zM425 155.5h2v3h-2zM427 87.5h2v2h-2zM427 92h2v2.5h-2zM427 96.5h2v2.5h-2zM429 89.5h2v2.5h-2zM429 92h2v2.5h-2zM429 94.5h2v2h-2zM429 96.5h2v2.5h-2zM429 99h2v2.5h-2zM429 106.5h2v2.5h-2zM429 109h2v2.5h-2zM429 155.5h2v3h-2zM429 164.5h2v3h-2zM429 170.5h2v3.5h-2zM431 83h2v2h-2zM431 85h2v2.5h-2zM431 161.5h2v3h-2zM433 85h2v2.5h-2zM433 87.5h2v2h-2zM433 155.5h2v3h-2zM433 167.5h2v3h-2zM435 104h2v2.5h-2zM435 109h2v2.5h-2zM435 119.5h2v2.5h-2zM435 127h2v3h-2zM435 130h2v2.5h-2zM435 132.5h2v3h-2zM435 158.5h2v3h-2zM435 167.5h2v3h-2zM437 78.5h2v2h-2zM437 89.5h2v2.5h-2zM437 92h2v2.5h-2zM437 99h2v2.5h-2zM437 104h2v2.5h-2zM439 74h2v2.5h-2zM439 76.5h2v2h-2zM439 83h2v2h-2zM439 85h2v2.5h-2zM439 89.5h2v2.5h-2zM439 155.5h2v3h-2zM439 174h2v3h-2zM441 152.5h2v3h-2zM441 164.5h2v3h-2zM443 70h2v2h-2zM443 155.5h2v3h-2zM443 161.5h2v3h-2zM443 170.5h2v3.5h-2zM445 152.5h2v3h-2zM453 174h2v3h-2zM453 177h2v3h-2zM453 183h2v3.5h-2zM455 183h2v3.5h-2zM455 186.5h2v3h-2zM455 189.5h2v3.5h-2zM457 76.5h1v2h-1zM457 83h1v2h-1zM457 85h1v2.5h-1z"/>
<path fill="#00d4ff" d="M211 203h2v3.5h-2zM213 161.5h2v3h-2zM213 167.5h2v3h-2zM213 177h2v3h-2zM213 180h2v3h-2zM215 135.5h2v2.5h-2zM215 138h2v3h-2zM217 138h2v3h-2zM217 144h2v3h-2zM217 155.5h2v3h-2zM217 177h2v3h-2zM217 183h2v3.5h-2zM219 124.5h2v2.5h-2zM219 167.5h2v3h-2zM221 149.5h2v3h-2zM223 167.5h2v3h-2zM225 122h2v2.5h-2zM225 177h2v3h-2zM225 183h2v3.5h-2zM227 119.5h2v2.5h-2zM229 164.5h2v3h-2zM229 167.5h2v3h-2zM231 119.5h2v2.5h-2zM231 167.5h2v3h-2zM233 72h2v2h-2zM233 78.5h2v2h-2zM233 85h2v2.5h-2zM233 114h2v2.5h-2zM233 164.5h2v3h-2zM233 167.5h2v3h-2zM235 92h2v2.5h-2zM235 101.5h2v2.5h-2zM235 104h2v2.5h-2zM235 114h2v2.5h-2zM235 116.5h2v3h-2zM237 167.5h2v3h-2zM239 119.5h2v2.5h-2zM239 127h2v3h-2zM239 135.5h2v2.5h-2zM239 144h2v3h-2zM239 152.5h2v3h-2zM239 155.5h2v3h-2zM241 104h2v2.5h-2zM241 167.5h2v3h-2zM243 161.5h2v3h-2zM243 164.5h2v3h-2zM243 174h2v3h-2zM245 141h2v3h-2zM245 155.5h2v3h-2zM245 158.5h2v3h-2zM247 87.5h2v2h-2zM247 96.5h2v2.5h-2zM247 99h2v2.5h-2zM247 101.5h2v2.5h-2zM247 106.5h2v2.5h-2zM247 111.5h2v2.5h-2zM247 119.5h2v2.5h-2zM247 122h2v2.5h-2zM247 124.5h2v2.5h-2zM247 130h2v2.5h-2zM247 167.5h2v3h-2zM249 89.5h2v2.5h-2zM249 94.5h2v2h-2zM249 99h2v2.5h-2zM249 106.5h2v2.5h-2zM251 78.5h2v2h-2zM251 87.5h2v2h-2zM251 99h2v2.5h-2zM251 101.5h2v2.5h-2zM251 106.5h2v2.5h-2zM251 122h2v2.5h-2zM251 127h2v3h-2zM251 132.5h2v3h-2zM251 149.5h2v3h-2zM253 72h2v2h-2zM253 74h2v2.5h-2zM253 76.5h2v2h-2zM253 80.5h2v2.5h-2zM253 119.5h2v2.5h-2zM253 122h2v2.5h-2zM253 124.5h2v2.5h-2zM253 130h2v2.5h-2zM253 132.5h2v3h-2zM253 164.5h2v3h-2zM253 180h2v3h-2zM255 72h2v2h-2zM255 74h2v2.5h-2zM255 78.5h2v2h-2zM255 114h2v2.5h-2zM255 122h2v2.5h-2zM257 92h2v2.5h-2zM257 99h2v2.5h-2zM257 104h2v2.5h-2zM257 106.5h2v2.5h-2zM257 109h2v2.5h-2zM257 127h2v3h-2zM257 177h2v3h-2zM259 89.5h2v2.5h-2zM259 96.5h2v2.5h-2zM259 106.5h2v2.5h-2zM259 111.5h2v2.5h-2zM259 124.5h2v2.5h-2zM259 170.5h2v3.5h-2zM261 155.5h2v3h-2zM263 101.5h2v2.5h-2zM263 164.5h2v3h-2zM263 167.5h2v3h-2zM265 78.5h2v2h-2zM265 80.5h2v2.5h-2zM265 85h2v2.5h-2zM265 87.5h2v2h-2zM265 89.5h2v2.5h-2zM265 116.5h2v3h-2zM265 155.5h2v3h-2zM265 177h2v3h-2zM267 72h2v2h-2zM267 80.5h2v2.5h-2zM267 116.5h2v3h-2zM267 180h2v3h-2zM269 87.5h2v2h-2zM269 155.5h2v3h-2zM269 158.5h2v3h-2zM269 177h2v3h-2zM271 85h2v2.5h-2zM271 114h2v2.5h-2zM271 119.5h2v2.5h-2zM271 127h2v3h-2zM271 174h2v3h-2zM273 114h2v2.5h-2zM273 130h2v2.5h-2zM275 70h2v2h-2zM275 127h2v3h-2zM275 130h2v2.5h-2zM275 158.5h2v3h-2zM277 83h2v2h-2zM277 85h2v2.5h-2zM277 111.5h2v2.5h-2zM277 177h2v3h-2zM279 83h2v2h-2zM279 124.5h2v2.5h-2zM279 130h2v2.5h-2zM279 132.5h2v3h-2zM279 135.5h2v2.5h-2zM279 152.5h2v3h-2zM279 155.5h2v3h-2zM281 74h2v2.5h-2zM281 158.5h2v3h-2zM281 180h2v3h-2zM283 78.5h2v2h-2zM283 80.5h2v2.5h-2zM283 127h2v3h-2zM285 85h2v2.5h-2zM285 164.5h2v3h-2zM285 167.5h2v3h-2zM287 70h2v2h-2zM287 76.5h2v2h-2zM287 80.5h2v2.5h-2zM287 135.5h2v2.5h-2zM287 161.5h2v3h-2zM287 164.5h2v3h-2zM289 74h2v2.5h-2zM291 78.5h2v2h-2zM291 161.5h2v3h-2zM291 167.5h2v3h-2zM293 138h2v3h-2zM293 174h2v3h-2zM293 177h2v3h-2zM295 167.5h2v3h-2zM295 180h2v3h-2zM297 74h2v2.5h-2zM297 80.5h2v2.5h-2zM299 72h2v2h-2zM299 78.5h2v2h-2zM301 135.5h2v2.5h-2zM301 170.5h2v3.5h-2zM301 180h2v3h-2zM303 83h2v2h-2zM303 132.5h2v3h-2zM305 80.5h2v2.5h-2zM305 83h2v2h-2zM305 132.5h2v3h-2zM305 174h2v3h-2zM305 180h2v3h-2zM309 72h2v2h-2zM309 78.5h2v2h-2zM309 135.5h2v2.5h-2zM309 170.5h2v3.5h-2zM309 174h2v3h-2zM309 180h2v3h-2zM311 78.5h2v2h-2zM311 80.5h2v2.5h-2zM311 138h2v3h-2zM311 141h2v3h-2zM311 170.5h2v3.5h-2zM313 89.5h2v2.5h-2zM313 135.5h2v2.5h-2zM313 170.5h2v3.5h-2zM313 174h2v3h-2zM313 180h2v3h-2zM315 87.5h2v2h-2zM315 94.5h2v2h-2zM315 132.5h2v3h-2zM315 177h2v3h-2zM317 85h2v2.5h-2zM317 89.5h2v2.5h-2zM317 138h2v3h-2zM317 164.5h2v3h-2zM319 92h2v2.5h-2zM319 94.5h2v2h-2zM319 141h2v3h-2zM319 167.5h2v3h-2zM319 177h2v3h-2zM321 89.5h2v2.5h-2zM321 174h2v3h-2zM323 89.5h2v2.5h-2zM323 138h2v3h-2zM323 167.5h2v3h-2zM323 174h2v3h-2zM325 101.5h2v2.5h-2zM325 104h2v2.5h-2zM325 164.5h2v3h-2zM327 94.5h2v2h-2zM327 101.5h2v2.5h-2zM327 164.5h2v3h-2zM327 167.5h2v3h-2zM327 177h2v3h-2zM329 104h2v2.5h-2zM329 109h2v2.5h-2zM329 111.5h2v2.5h-2zM329 138h2v3h-2zM331 92h2v2.5h-2zM331 101.5h2v2.5h-2zM331 104h2v2.5h-2zM331 135.5h2v2.5h-2zM331 161.5h2v3h-2zM331 164.5h2v3h-2zM331 174h2v3h-2zM333 101.5h2v2.5h-2zM333 104h2v2.5h-2zM333 141h2v3h-2zM333 167.5h2v3h-2zM335 96.5h2v2.5h-2zM335 141h2v3h-2zM335 144h2v3h-2zM335 164.5h2v3h-2zM335 177h2v3h-2zM337 104h2v2.5h-2zM337 109h2v2.5h-2zM337 135.5h2v2.5h-2zM337 170.5h2v3.5h-2zM337 174h2v3h-2zM339 174h2v3h-2zM341 99h2v2.5h-2zM341 101.5h2v2.5h-2zM341 111.5h2v2.5h-2zM341 119.5h2v2.5h-2zM341 122h2v2.5h-2zM341 127h2v3h-2zM341 132.5h2v3h-2zM341 141h2v3h-2zM341 144h2v3h-2zM341 152.5h2v3h-2zM341 164.5h2v3h-2zM343 94.5h2v2h-2zM343 96.5h2v2.5h-2zM343 135.5h2v2.5h-2zM343 141h2v3h-2zM343 155.5h2v3h-2zM345 135.5h2v2.5h-2zM345 141h2v3h-2zM347 94.5h2v2h-2zM347 138h2v3h-2zM347 174h2v3h-2zM349 92h2v2.5h-2zM349 170.5h2v3.5h-2zM349 177h2v3h-2zM351 144h2v3h-2zM351 147h2v2.5h-2zM351 161.5h2v3h-2zM351 167.5h2v3h-2zM351 170.5h2v3.5h-2zM351 183h2v3.5h-2zM353 144h2v3h-2zM353 177h2v3h-2zM355 89.5h2v2.5h-2zM355 92h2v2.5h-2zM355 138h2v3h-2zM355 141h2v3h-2zM357 92h2v2.5h-2zM357 174h2v3h-2zM359 89.5h2v2.5h-2zM359 177h2v3h-2zM361 174h2v3h-2zM363 141h2v3h-2zM363 177h2v3h-2zM365 92h2v2.5h-2zM365 174h2v3h-2zM367 144h2v3h-2zM367 147h2v2.5h-2zM369 147h2v2.5h-2zM369 174h2v3h-2zM371 174h2v3h-2zM371 177h2v3h-2zM373 94.5h2v2h-2zM373 174h2v3h-2zM375 89.5h2v2.5h-2zM375 180h2v3h-2zM377 144h2v3h-2zM379 94.5h2v2h-2zM379 167.5h2v3h-2zM379 177h2v3h-2zM381 141h2v3h-2zM383 92h2v2.5h-2zM383 144h2v3h-2zM383 174h2v3h-2zM385 89.5h2v2.5h-2zM385 141h2v3h-2zM385 174h2v3h-2zM387 144h2v3h-2zM387 167.5h2v3h-2zM387 170.5h2v3.5h-2zM387 174h2v3h-2zM389 141h2v3h-2zM389 174h2v3h-2zM389 177h2v3h-2zM393 94.5h2v2h-2zM393 135.5h2v2.5h-2zM395 141h2v3h-2zM395 170.5h2v3.5h-2zM395 174h2v3h-2zM399 138h2v3h-2zM401 141h2v3h-2zM403 83h2v2h-2zM403 149.5h2v3h-2zM403 152.5h2v3h-2zM405 155.5h2v3h-2zM405 161.5h2v3h-2zM407 78.5h2v2h-2zM407 85h2v2.5h-2zM407 147h2v2.5h-2zM409 85h2v2.5h-2zM409 87.5h2v2h-2zM409 147h2v2.5h-2zM409 149.5h2v3h-2zM411 85h2v2.5h-2zM413 76.5h2v2h-2zM413 85h2v2.5h-2zM413 161.5h2v3h-2zM413 167.5h2v3h-2zM413 177h2v3h-2zM413 186.5h2v3h-2zM415 80.5h2v2.5h-2zM415 94.5h2v2h-2zM415 147h2v2.5h-2zM417 152.5h2v3h-2zM419 83h2v2h-2zM421 83h2v2h-2zM421 87.5h2v2h-2zM421 149.5h2v3h-2zM423 177h2v3h-2zM427 89.5h2v2.5h-2zM427 99h2v2.5h-2zM427 106.5h2v2.5h-2zM427 147h2v2.5h-2zM427 149.5h2v3h-2zM427 152.5h2v3h-2zM429 104h2v2.5h-2zM429 111.5h2v2.5h-2zM429 116.5h2v3h-2zM429 119.5h2v2.5h-2zM429 158.5h2v3h-2zM429 161.5h2v3h-2zM431 104h2v2.5h-2zM431 111.5h2v2.5h-2zM433 111.5h2v2.5h-2zM433 114h2v2.5h-2zM433 119.5h2v2.5h-2zM433 149.5h2v3h-2zM435 99h2v2.5h-2zM435 141h2v3h-2zM435 149.5h2v3h-2zM435 152.5h2v3h-2zM437 94.5h2v2h-2zM437 106.5h2v2.5h-2zM437 109h2v2.5h-2zM439 70h2v2h-2zM439 87.5h2v2h-2zM439 92h2v2.5h-2zM439 94.5h2v2h-2zM439 96.5h2v2.5h-2zM439 114h2v2.5h-2zM439 116.5h2v3h-2zM439 119.5h2v2.5h-2zM439 161.5h2v3h-2zM439 164.5h2v3h-2zM441 72h2v2h-2zM441 78.5h2v2h-2zM443 78.5h2v2h-2zM443 80.5h2v2.5h-2zM443 85h2v2.5h-2zM443 164.5h2v3h-2zM445 87.5h2v2h-2zM445 89.5h2v2.5h-2zM445 149.5h2v3h-2zM453 72h2v2h-2zM453 78.5h2v2h-2zM453 158.5h2v3h-2zM455 85h2v2.5h-2zM455 87.5h2v2h-2zM455 92h2v2.5h-2zM457 80.5h1v2.5h-1zM457 164.5h1v3h-1zM457 177h1v3h-1zM457 183h1v3.5h-1zM457 186.5h1v3h-1z"/>
<path fill="#00ffff" d="M211 70h2v2h-2zM211 72h2v2h-2zM211 80.5h2v2.5h-2zM211 85h2v2.5h-2zM211 87.5h2v2h-2zM211 196h2v3.5h-2zM213 152.5h2v3h-2zM213 155.5h2v3h-2zM213 158.5h2v3h-2zM213 164.5h2v3h-2zM213 183h2v3.5h-2zM217 170.5h2v3.5h-2zM217 174h2v3h-2zM221 122h2v2.5h-2zM227 122h2v2.5h-2zM227 124.5h2v2.5h-2zM229 116.5h2v3h-2zM229 170.5h2v3.5h-2zM231 116.5h2v3h-2zM233 70h2v2h-2zM233 74h2v2.5h-2zM233 76.5h2v2h-2zM233 83h2v2h-2zM233 87.5h2v2h-2zM233 111.5h2v2.5h-2zM235 106.5h2v2.5h-2zM239 138h2v3h-2zM239 161.5h2v3h-2zM239 170.5h2v3.5h-2zM241 164.5h2v3h-2zM247 89.5h2v2.5h-2zM247 94.5h2v2h-2zM247 104h2v2.5h-2zM247 109h2v2.5h-2zM247 127h2v3h-2zM249 101.5h2v2.5h-2zM249 104h2v2.5h-2zM251 83h2v2h-2zM251 85h2v2.5h-2zM251 111.5h2v2.5h-2zM251 114h2v2.5h-2zM251 116.5h2v3h-2zM251 119.5h2v2.5h-2zM251 130h2v2.5h-2zM253 83h2v2h-2zM253 85h2v2.5h-2zM253 87.5h2v2h-2zM253 92h2v2.5h-2zM253 111.5h2v2.5h-2zM253 114h2v2.5h-2zM253 116.5h2v3h-2zM253 161.5h2v3h-2zM253 174h2v3h-2zM255 70h2v2h-2zM255 80.5h2v2.5h-2zM255 83h2v2h-2zM255 85h2v2.5h-2zM255 111.5h2v2.5h-2zM257 101.5h2v2.5h-2zM257 114h2v2.5h-2zM257 119.5h2v2.5h-2zM257 124.5h2v2.5h-2zM257 161.5h2v3h-2zM257 164.5h2v3h-2zM257 170.5h2v3.5h-2zM259 85h2v2.5h-2zM259 92h2v2.5h-2zM259 94.5h2v2h-2zM259 104h2v2.5h-2zM259 158.5h2v3h-2zM259 164.5h2v3h-2zM261 132.5h2v3h-2zM261 158.5h2v3h-2zM261 167.5h2v3h-2zM261 174h2v3h-2zM261 177h2v3h-2zM263 158.5h2v3h-2zM265 76.5h2v2h-2zM265 158.5h2v3h-2zM267 78.5h2v2h-2zM267 83h2v2h-2zM267 85h2v2.5h-2zM267 89.5h2v2.5h-2zM267 92h2v2.5h-2zM267 109h2v2.5h-2zM269 92h2v2.5h-2zM269 96.5h2v2.5h-2zM269 106.5h2v2.5h-2zM269 174h2v3h-2zM271 87.5h2v2h-2zM271 104h2v2.5h-2zM271 109h2v2.5h-2zM271 111.5h2v2.5h-2zM271 116.5h2v3h-2zM271 122h2v2.5h-2zM271 158.5h2v3h-2zM271 161.5h2v3h-2zM273 85h2v2.5h-2zM273 87.5h2v2h-2zM273 104h2v2.5h-2zM273 109h2v2.5h-2zM273 161.5h2v3h-2zM273 170.5h2v3.5h-2zM275 109h2v2.5h-2zM275 111.5h2v2.5h-2zM275 116.5h2v3h-2zM275 124.5h2v2.5h-2zM275 161.5h2v3h-2zM277 87.5h2v2h-2zM277 114h2v2.5h-2zM277 161.5h2v3h-2zM277 164.5h2v3h-2zM279 80.5h2v2.5h-2zM279 122h2v2.5h-2zM279 158.5h2v3h-2zM281 72h2v2h-2zM281 76.5h2v2h-2zM281 78.5h2v2h-2zM281 80.5h2v2.5h-2zM281 124.5h2v2.5h-2zM281 127h2v3h-2zM281 130h2v2.5h-2zM283 116.5h2v3h-2zM283 124.5h2v2.5h-2zM283 135.5h2v2.5h-2zM283 155.5h2v3h-2zM283 158.5h2v3h-2zM283 180h2v3h-2zM285 127h2v3h-2zM285 132.5h2v3h-2zM285 170.5h2v3.5h-2zM285 174h2v3h-2zM287 127h2v3h-2zM287 130h2v2.5h-2zM287 132.5h2v3h-2zM289 78.5h2v2h-2zM289 83h2v2h-2zM291 127h2v3h-2zM291 130h2v2.5h-2zM291 164.5h2v3h-2zM291 180h2v3h-2zM293 80.5h2v2.5h-2zM293 83h2v2h-2zM293 135.5h2v2.5h-2zM295 85h2v2.5h-2zM295 132.5h2v3h-2zM295 170.5h2v3.5h-2zM297 177h2v3h-2zM299 76.5h2v2h-2zM299 174h2v3h-2zM301 76.5h2v2h-2zM301 132.5h2v3h-2zM301 174h2v3h-2zM303 130h2v2.5h-2zM307 80.5h2v2.5h-2zM307 83h2v2h-2zM311 83h2v2h-2zM311 135.5h2v2.5h-2zM311 174h2v3h-2zM311 180h2v3h-2zM313 85h2v2.5h-2zM313 177h2v3h-2zM315 92h2v2.5h-2zM315 135.5h2v2.5h-2zM315 174h2v3h-2zM317 87.5h2v2h-2zM317 135.5h2v2.5h-2zM317 180h2v3h-2zM319 99h2v2.5h-2zM321 94.5h2v2h-2zM321 147h2v2.5h-2zM321 149.5h2v3h-2zM321 155.5h2v3h-2zM321 158.5h2v3h-2zM321 177h2v3h-2zM323 92h2v2.5h-2zM323 94.5h2v2h-2zM323 135.5h2v2.5h-2zM323 170.5h2v3.5h-2zM325 99h2v2.5h-2zM325 109h2v2.5h-2zM325 135.5h2v2.5h-2zM325 138h2v3h-2zM325 161.5h2v3h-2zM325 167.5h2v3h-2zM325 174h2v3h-2zM325 177h2v3h-2zM327 104h2v2.5h-2zM327 109h2v2.5h-2zM327 111.5h2v2.5h-2zM327 135.5h2v2.5h-2zM327 141h2v3h-2zM327 174h2v3h-2zM329 106.5h2v2.5h-2zM329 114h2v2.5h-2zM329 132.5h2v3h-2zM329 135.5h2v2.5h-2zM329 167.5h2v3h-2zM331 167.5h2v3h-2zM333 96.5h2v2.5h-2zM333 109h2v2.5h-2zM333 138h2v3h-2zM335 101.5h2v2.5h-2zM335 104h2v2.5h-2zM335 127h2v3h-2zM335 132.5h2v3h-2zM335 138h2v3h-2zM335 167.5h2v3h-2zM335 170.5h2v3.5h-2zM335 174h2v3h-2zM337 132.5h2v3h-2zM339 109h2v2.5h-2zM339 114h2v2.5h-2zM339 116.5h2v3h-2zM339 141h2v3h-2zM339 164.5h2v3h-2zM339 167.5h2v3h-2zM341 104h2v2.5h-2zM341 106.5h2v2.5h-2zM341 109h2v2.5h-2zM341 116.5h2v3h-2zM341 130h2v2.5h-2zM341 167.5h2v3h-2zM341 170.5h2v3.5h-2zM343 99h2v2.5h-2zM343 111.5h2v2.5h-2zM343 116.5h2v3h-2zM343 127h2v3h-2zM343 132.5h2v3h-2zM343 161.5h2v3h-2zM343 164.5h2v3h-2zM345 96.5h2v2.5h-2zM345 99h2v2.5h-2zM345 138h2v3h-2zM347 92h2v2.5h-2zM347 96.5h2v2.5h-2zM347 135.5h2v2.5h-2zM347 177h2v3h-2zM349 141h2v3h-2zM351 87.5h2v2h-2zM351 92h2v2.5h-2zM351 152.5h2v3h-2zM351 180h2v3h-2zM353 141h2v3h-2zM357 138h2v3h-2zM359 144h2v3h-2zM359 147h2v2.5h-2zM361 89.5h2v2.5h-2zM361 141h2v3h-2zM363 94.5h2v2h-2zM365 147h2v2.5h-2zM367 89.5h2v2.5h-2zM367 92h2v2.5h-2zM369 92h2v2.5h-2zM369 144h2v3h-2zM371 92h2v2.5h-2zM373 141h2v3h-2zM373 147h2v2.5h-2zM373 177h2v3h-2zM375 92h2v2.5h-2zM375 144h2v3h-2zM375 170.5h2v3.5h-2zM375 174h2v3h-2zM375 177h2v3h-2zM377 138h2v3h-2zM377 141h2v3h-2zM379 96.5h2v2.5h-2zM379 135.5h2v2.5h-2zM379 138h2v3h-2zM381 92h2v2.5h-2zM381 94.5h2v2h-2zM381 174h2v3h-2zM381 177h2v3h-2zM383 141h2v3h-2zM383 177h2v3h-2zM385 94.5h2v2h-2zM385 170.5h2v3.5h-2zM387 138h2v3h-2zM387 141h2v3h-2zM387 177h2v3h-2zM389 96.5h2v2.5h-2zM389 144h2v3h-2zM391 94.5h2v2h-2zM391 135.5h2v2.5h-2zM391 138h2v3h-2zM393 96.5h2v2.5h-2zM395 94.5h2v2h-2zM395 96.5h2v2.5h-2zM395 177h2v3h-2zM397 99h2v2.5h-2zM397 132.5h2v3h-2zM399 92h2v2.5h-2zM399 94.5h2v2h-2zM399 141h2v3h-2zM401 89.5h2v2.5h-2zM401 96.5h2v2.5h-2zM401 135.5h2v2.5h-2zM401 138h2v3h-2zM401 152.5h2v3h-2zM403 85h2v2.5h-2zM403 138h2v3h-2zM403 141h2v3h-2zM405 144h2v3h-2zM405 149.5h2v3h-2zM405 158.5h2v3h-2zM405 167.5h2v3h-2zM405 170.5h2v3.5h-2zM407 83h2v2h-2zM407 89.5h2v2.5h-2zM407 138h2v3h-2zM407 141h2v3h-2zM407 144h2v3h-2zM407 152.5h2v3h-2zM407 155.5h2v3h-2zM409 89.5h2v2.5h-2zM409 92h2v2.5h-2zM409 94.5h2v2h-2zM409 144h2v3h-2zM409 152.5h2v3h-2zM411 87.5h2v2h-2zM411 147h2v2.5h-2zM411 149.5h2v3h-2zM411 152.5h2v3h-2zM413 78.5h2v2h-2zM413 80.5h2v2.5h-2zM413 83h2v2h-2zM413 101.5h2v2.5h-2zM413 104h2v2.5h-2zM413 158.5h2v3h-2zM413 164.5h2v3h-2zM413 180h2v3h-2zM415 83h2v2h-2zM415 85h2v2.5h-2zM415 101.5h2v2.5h-2zM417 89.5h2v2.5h-2zM417 149.5h2v3h-2zM419 87.5h2v2h-2zM419 89.5h2v2.5h-2zM419 92h2v2.5h-2zM419 94.5h2v2h-2zM419 141h2v3h-2zM419 144h2v3h-2zM421 89.5h2v2.5h-2zM421 92h2v2.5h-2zM421 144h2v3h-2zM421 147h2v2.5h-2zM423 149.5h2v3h-2zM427 101.5h2v2.5h-2zM427 111.5h2v2.5h-2zM427 114h2v2.5h-2zM427 116.5h2v3h-2zM427 119.5h2v2.5h-2zM427 127h2v3h-2zM427 132.5h2v3h-2zM427 144h2v3h-2zM429 114h2v2.5h-2zM429 122h2v2.5h-2zM429 130h2v2.5h-2zM429 135.5h2v2.5h-2zM429 152.5h2v3h-2zM429 174h2v3h-2zM433 116.5h2v3h-2zM433 135.5h2v2.5h-2zM433 152.5h2v3h-2zM435 138h2v3h-2zM435 144h2v3h-2zM435 147h2v2.5h-2zM437 101.5h2v2.5h-2zM437 158.5h2v3h-2zM439 101.5h2v2.5h-2zM439 104h2v2.5h-2zM439 111.5h2v2.5h-2zM439 127h2v3h-2zM439 132.5h2v3h-2zM439 138h2v3h-2zM439 147h2v2.5h-2zM439 152.5h2v3h-2zM441 70h2v2h-2zM441 80.5h2v2.5h-2zM441 83h2v2h-2zM441 92h2v2.5h-2zM441 141h2v3h-2zM441 144h2v3h-2zM441 147h2v2.5h-2zM441 149.5h2v3h-2zM443 87.5h2v2h-2zM443 152.5h2v3h-2zM443 158.5h2v3h-2zM445 92h2v2.5h-2zM445 94.5h2v2h-2zM445 144h2v3h-2zM445 147h2v2.5h-2zM453 76.5h2v2h-2zM453 83h2v2h-2zM453 89.5h2v2.5h-2zM453 92h2v2.5h-2zM453 161.5h2v3h-2zM453 164.5h2v3h-2zM455 80.5h2v2.5h-2zM455 83h2v2h-2zM455 89.5h2v2.5h-2zM455 155.5h2v3h-2zM455 158.5h2v3h-2zM457 87.5h1v2h-1zM457 161.5h1v3h-1z"/>
<path fill="#00ffd5" d="M211 74h2v2.5h-2zM211 76.5h2v2h-2zM211 83h2v2h-2zM211 89.5h2v2.5h-2zM211 92h2v2.5h-2zM211 199.5h2v3.5h-2zM213 141h2v3h-2zM213 144h2v3h-2zM213 147h2v2.5h-2zM213 149.5h2v3h-2zM217 130h2v2.5h-2zM217 132.5h2v3h-2zM217 164.5h2v3h-2zM217 167.5h2v3h-2zM221 119.5h2v2.5h-2zM223 124.5h2v2.5h-2zM225 119.5h2v2.5h-2zM231 114h2v2.5h-2zM233 80.5h2v2.5h-2zM239 164.5h2v3h-2zM243 167.5h2v3h-2zM251 124.5h2v2.5h-2zM253 78.5h2v2h-2zM253 89.5h2v2.5h-2zM253 94.5h2v2h-2zM253 99h2v2.5h-2zM253 106.5h2v2.5h-2zM253 109h2v2.5h-2zM253 167.5h2v3h-2zM253 170.5h2v3.5h-2zM255 76.5h2v2h-2zM255 87.5h2v2h-2zM255 89.5h2v2.5h-2zM255 96.5h2v2.5h-2zM255 101.5h2v2.5h-2zM255 104h2v2.5h-2zM255 106.5h2v2.5h-2zM255 164.5h2v3h-2zM255 174h2v3h-2zM255 177h2v3h-2zM257 96.5h2v2.5h-2zM257 111.5h2v2.5h-2zM257 116.5h2v3h-2zM257 167.5h2v3h-2zM259 101.5h2v2.5h-2zM259 167.5h2v3h-2zM261 111.5h2v2.5h-2zM261 116.5h2v3h-2zM261 119.5h2v2.5h-2zM261 122h2v2.5h-2zM261 130h2v2.5h-2zM261 161.5h2v3h-2zM265 92h2v2.5h-2zM265 106.5h2v2.5h-2zM267 70h2v2h-2zM267 74h2v2.5h-2zM267 87.5h2v2h-2zM267 94.5h2v2h-2zM267 96.5h2v2.5h-2zM267 99h2v2.5h-2zM267 101.5h2v2.5h-2zM267 104h2v2.5h-2zM267 106.5h2v2.5h-2zM267 161.5h2v3h-2zM267 177h2v3h-2zM269 89.5h2v2.5h-2zM269 94.5h2v2h-2zM269 161.5h2v3h-2zM269 164.5h2v3h-2zM271 94.5h2v2h-2zM271 99h2v2.5h-2zM271 101.5h2v2.5h-2zM271 106.5h2v2.5h-2zM271 164.5h2v3h-2zM271 167.5h2v3h-2zM271 170.5h2v3.5h-2zM273 89.5h2v2.5h-2zM273 92h2v2.5h-2zM273 94.5h2v2h-2zM273 99h2v2.5h-2zM273 101.5h2v2.5h-2zM273 106.5h2v2.5h-2zM273 111.5h2v2.5h-2zM273 158.5h2v3h-2zM273 174h2v3h-2zM275 85h2v2.5h-2zM275 87.5h2v2h-2zM275 104h2v2.5h-2zM275 114h2v2.5h-2zM275 119.5h2v2.5h-2zM275 164.5h2v3h-2zM275 174h2v3h-2zM275 177h2v3h-2zM277 109h2v2.5h-2zM277 167.5h2v3h-2zM277 174h2v3h-2zM279 85h2v2.5h-2zM279 87.5h2v2h-2zM279 114h2v2.5h-2zM279 116.5h2v3h-2zM279 119.5h2v2.5h-2zM279 180h2v3h-2zM281 83h2v2h-2zM281 119.5h2v2.5h-2zM281 132.5h2v3h-2zM281 161.5h2v3h-2zM281 174h2v3h-2zM283 83h2v2h-2zM283 85h2v2.5h-2zM283 87.5h2v2h-2zM283 119.5h2v2.5h-2zM283 122h2v2.5h-2zM283 161.5h2v3h-2zM285 87.5h2v2h-2zM285 119.5h2v2.5h-2zM285 124.5h2v2.5h-2zM285 130h2v2.5h-2zM285 177h2v3h-2zM287 85h2v2.5h-2zM287 167.5h2v3h-2zM287 170.5h2v3.5h-2zM287 177h2v3h-2zM289 85h2v2.5h-2zM289 130h2v2.5h-2zM289 132.5h2v3h-2zM289 167.5h2v3h-2zM289 177h2v3h-2zM291 83h2v2h-2zM291 85h2v2.5h-2zM291 170.5h2v3.5h-2zM293 85h2v2.5h-2zM293 130h2v2.5h-2zM293 132.5h2v3h-2zM295 127h2v3h-2zM295 130h2v2.5h-2zM295 174h2v3h-2zM299 83h2v2h-2zM299 177h2v3h-2zM301 74h2v2.5h-2zM301 78.5h2v2h-2zM301 80.5h2v2.5h-2zM301 130h2v2.5h-2zM301 177h2v3h-2zM303 177h2v3h-2zM305 130h2v2.5h-2zM307 85h2v2.5h-2zM307 132.5h2v3h-2zM307 177h2v3h-2zM309 80.5h2v2.5h-2zM309 83h2v2h-2zM309 132.5h2v3h-2zM309 177h2v3h-2zM311 85h2v2.5h-2zM311 132.5h2v3h-2zM311 177h2v3h-2zM313 87.5h2v2h-2zM313 92h2v2.5h-2zM315 130h2v2.5h-2zM317 94.5h2v2h-2zM317 96.5h2v2.5h-2zM317 99h2v2.5h-2zM317 174h2v3h-2zM319 104h2v2.5h-2zM319 138h2v3h-2zM319 170.5h2v3.5h-2zM319 174h2v3h-2zM321 92h2v2.5h-2zM321 96.5h2v2.5h-2zM321 99h2v2.5h-2zM321 101.5h2v2.5h-2zM321 164.5h2v3h-2zM325 106.5h2v2.5h-2zM325 111.5h2v2.5h-2zM325 114h2v2.5h-2zM325 170.5h2v3.5h-2zM327 106.5h2v2.5h-2zM327 114h2v2.5h-2zM327 116.5h2v3h-2zM327 132.5h2v3h-2zM327 138h2v3h-2zM329 116.5h2v3h-2zM329 119.5h2v2.5h-2zM329 130h2v2.5h-2zM329 170.5h2v3.5h-2zM331 106.5h2v2.5h-2zM331 109h2v2.5h-2zM331 170.5h2v3.5h-2zM333 106.5h2v2.5h-2zM333 111.5h2v2.5h-2zM333 114h2v2.5h-2zM333 130h2v2.5h-2zM333 132.5h2v3h-2zM333 135.5h2v2.5h-2zM335 111.5h2v2.5h-2zM335 114h2v2.5h-2zM335 124.5h2v2.5h-2zM335 130h2v2.5h-2zM335 135.5h2v2.5h-2zM337 106.5h2v2.5h-2zM337 111.5h2v2.5h-2zM337 114h2v2.5h-2zM337 116.5h2v3h-2zM337 122h2v2.5h-2zM337 127h2v3h-2zM339 111.5h2v2.5h-2zM339 119.5h2v2.5h-2zM339 122h2v2.5h-2zM339 124.5h2v2.5h-2zM339 127h2v3h-2zM339 130h2v2.5h-2zM339 132.5h2v3h-2zM339 135.5h2v2.5h-2zM339 170.5h2v3.5h-2zM339 177h2v3h-2zM341 124.5h2v2.5h-2zM341 138h2v3h-2zM341 174h2v3h-2zM343 114h2v2.5h-2zM343 119.5h2v2.5h-2zM343 122h2v2.5h-2zM343 124.5h2v2.5h-2zM343 138h2v3h-2zM343 167.5h2v3h-2zM343 170.5h2v3.5h-2zM343 174h2v3h-2zM343 180h2v3h-2zM345 101.5h2v2.5h-2zM345 104h2v2.5h-2zM349 138h2v3h-2zM351 174h2v3h-2zM353 92h2v2.5h-2zM355 94.5h2v2h-2zM357 94.5h2v2h-2zM359 92h2v2.5h-2zM361 138h2v3h-2zM363 96.5h2v2.5h-2zM363 138h2v3h-2zM365 141h2v3h-2zM365 144h2v3h-2zM367 141h2v3h-2zM371 138h2v3h-2zM371 141h2v3h-2zM375 138h2v3h-2zM375 141h2v3h-2zM377 92h2v2.5h-2zM377 94.5h2v2h-2zM377 135.5h2v2.5h-2zM381 138h2v3h-2zM383 96.5h2v2.5h-2zM385 135.5h2v2.5h-2zM385 138h2v3h-2zM389 138h2v3h-2zM391 92h2v2.5h-2zM391 96.5h2v2.5h-2zM391 132.5h2v3h-2zM395 99h2v2.5h-2zM395 135.5h2v2.5h-2zM395 138h2v3h-2zM397 130h2v2.5h-2zM399 96.5h2v2.5h-2zM399 132.5h2v3h-2zM399 135.5h2v2.5h-2zM401 92h2v2.5h-2zM403 87.5h2v2h-2zM405 132.5h2v3h-2zM405 147h2v2.5h-2zM405 164.5h2v3h-2zM407 87.5h2v2h-2zM407 135.5h2v2.5h-2zM409 99h2v2.5h-2zM409 138h2v3h-2zM409 141h2v3h-2zM411 94.5h2v2h-2zM411 96.5h2v2.5h-2zM413 87.5h2v2h-2zM413 106.5h2v2.5h-2zM413 141h2v3h-2zM413 147h2v2.5h-2zM413 149.5h2v3h-2zM413 152.5h2v3h-2zM415 89.5h2v2.5h-2zM415 104h2v2.5h-2zM415 144h2v3h-2zM417 99h2v2.5h-2zM419 96.5h2v2.5h-2zM421 94.5h2v2h-2zM421 96.5h2v2.5h-2zM421 141h2v3h-2zM423 89.5h2v2.5h-2zM423 147h2v2.5h-2zM425 135.5h2v2.5h-2zM425 144h2v3h-2zM425 147h2v2.5h-2zM427 104h2v2.5h-2zM427 109h2v2.5h-2zM427 122h2v2.5h-2zM427 124.5h2v2.5h-2zM427 130h2v2.5h-2zM427 135.5h2v2.5h-2zM427 138h2v3h-2zM427 141h2v3h-2zM429 124.5h2v2.5h-2zM429 127h2v3h-2zM429 132.5h2v3h-2zM429 138h2v3h-2zM429 141h2v3h-2zM429 147h2v2.5h-2zM429 149.5h2v3h-2zM431 119.5h2v2.5h-2zM431 122h2v2.5h-2zM431 127h2v3h-2zM433 122h2v2.5h-2zM433 124.5h2v2.5h-2zM433 127h2v3h-2zM433 130h2v2.5h-2zM433 132.5h2v3h-2zM433 138h2v3h-2zM433 141h2v3h-2zM433 144h2v3h-2zM433 147h2v2.5h-2zM435 135.5h2v2.5h-2zM437 114h2v2.5h-2zM437 116.5h2v3h-2zM437 119.5h2v2.5h-2zM437 124.5h2v2.5h-2zM437 132.5h2v3h-2zM437 149.5h2v3h-2zM437 152.5h2v3h-2zM439 99h2v2.5h-2zM439 106.5h2v2.5h-2zM439 109h2v2.5h-2zM439 122h2v2.5h-2zM439 124.5h2v2.5h-2zM439 130h2v2.5h-2zM439 135.5h2v2.5h-2zM439 141h2v3h-2zM439 144h2v3h-2zM439 149.5h2v3h-2zM441 74h2v2.5h-2zM441 76.5h2v2h-2zM441 85h2v2.5h-2zM441 94.5h2v2h-2zM441 111.5h2v2.5h-2zM441 116.5h2v3h-2zM441 122h2v2.5h-2zM441 130h2v2.5h-2zM441 135.5h2v2.5h-2zM441 138h2v3h-2zM443 89.5h2v2.5h-2zM443 149.5h2v3h-2zM445 96.5h2v2.5h-2zM445 99h2v2.5h-2zM453 80.5h2v2.5h-2zM453 94.5h2v2h-2zM453 96.5h2v2.5h-2zM453 99h2v2.5h-2zM453 155.5h2v3h-2zM455 94.5h2v2h-2zM457 89.5h1v2.5h-1zM457 158.5h1v3h-1z"/>
<path fill="#00ffaa" d="M211 78.5h2v2h-2zM211 193h2v3h-2zM213 138h2v3h-2zM217 127h2v3h-2zM217 161.5h2v3h-2zM219 122h2v2.5h-2zM223 119.5h2v2.5h-2zM227 116.5h2v3h-2zM229 111.5h2v2.5h-2zM229 114h2v2.5h-2zM231 109h2v2.5h-2zM233 92h2v2.5h-2zM233 104h2v2.5h-2zM233 109h2v2.5h-2zM239 167.5h2v3h-2zM243 170.5h2v3.5h-2zM253 96.5h2v2.5h-2zM253 101.5h2v2.5h-2zM253 104h2v2.5h-2zM255 92h2v2.5h-2zM255 94.5h2v2h-2zM255 99h2v2.5h-2zM255 109h2v2.5h-2zM255 161.5h2v3h-2zM261 114h2v2.5h-2zM261 124.5h2v2.5h-2zM261 127h2v3h-2zM261 164.5h2v3h-2zM261 170.5h2v3.5h-2zM265 94.5h2v2h-2zM265 96.5h2v2.5h-2zM265 99h2v2.5h-2zM265 101.5h2v2.5h-2zM265 104h2v2.5h-2zM265 109h2v2.5h-2zM265 161.5h2v3h-2zM265 174h2v3h-2zM267 170.5h2v3.5h-2zM269 99h2v2.5h-2zM269 101.5h2v2.5h-2zM269 104h2v2.5h-2zM269 109h2v2.5h-2zM269 170.5h2v3.5h-2zM271 89.5h2v2.5h-2zM271 92h2v2.5h-2zM271 96.5h2v2.5h-2zM273 96.5h2v2.5h-2zM273 164.5h2v3h-2zM273 167.5h2v3h-2zM275 92h2v2.5h-2zM275 94.5h2v2h-2zM275 96.5h2v2.5h-2zM275 99h2v2.5h-2zM275 101.5h2v2.5h-2zM275 106.5h2v2.5h-2zM275 170.5h2v3.5h-2zM277 94.5h2v2h-2zM277 99h2v2.5h-2zM277 101.5h2v2.5h-2zM277 106.5h2v2.5h-2zM277 170.5h2v3.5h-2zM279 96.5h2v2.5h-2zM279 101.5h2v2.5h-2zM279 106.5h2v2.5h-2zM279 109h2v2.5h-2zM279 111.5h2v2.5h-2zM279 127h2v3h-2zM279 177h2v3h-2zM281 85h2v2.5h-2zM281 111.5h2v2.5h-2zM281 114h2v2.5h-2zM281 116.5h2v3h-2zM281 122h2v2.5h-2zM281 164.5h2v3h-2zM281 167.5h2v3h-2zM281 170.5h2v3.5h-2zM281 177h2v3h-2zM283 111.5h2v2.5h-2zM283 114h2v2.5h-2zM283 164.5h2v3h-2zM283 167.5h2v3h-2zM283 170.5h2v3.5h-2zM283 174h2v3h-2zM283 177h2v3h-2zM285 109h2v2.5h-2zM285 111.5h2v2.5h-2zM285 114h2v2.5h-2zM285 116.5h2v3h-2zM285 122h2v2.5h-2zM287 83h2v2h-2zM287 89.5h2v2.5h-2zM287 122h2v2.5h-2zM287 124.5h2v2.5h-2zM287 174h2v3h-2zM289 124.5h2v2.5h-2zM289 127h2v3h-2zM289 170.5h2v3.5h-2zM289 174h2v3h-2zM291 177h2v3h-2zM293 127h2v3h-2zM295 177h2v3h-2zM297 83h2v2h-2zM297 127h2v3h-2zM299 127h2v3h-2zM299 130h2v2.5h-2zM301 83h2v2h-2zM303 85h2v2.5h-2zM303 127h2v3h-2zM305 85h2v2.5h-2zM305 177h2v3h-2zM307 130h2v2.5h-2zM313 94.5h2v2h-2zM315 96.5h2v2.5h-2zM315 101.5h2v2.5h-2zM317 104h2v2.5h-2zM317 132.5h2v3h-2zM317 167.5h2v3h-2zM317 177h2v3h-2zM319 96.5h2v2.5h-2zM319 101.5h2v2.5h-2zM319 106.5h2v2.5h-2zM319 135.5h2v2.5h-2zM321 104h2v2.5h-2zM321 111.5h2v2.5h-2zM321 132.5h2v3h-2zM321 141h2v3h-2zM321 167.5h2v3h-2zM321 170.5h2v3.5h-2zM323 96.5h2v2.5h-2zM323 99h2v2.5h-2zM325 130h2v2.5h-2zM325 132.5h2v3h-2zM327 124.5h2v2.5h-2zM327 130h2v2.5h-2zM329 122h2v2.5h-2zM329 124.5h2v2.5h-2zM329 127h2v3h-2zM333 116.5h2v3h-2zM333 119.5h2v2.5h-2zM333 122h2v2.5h-2zM333 124.5h2v2.5h-2zM333 127h2v3h-2zM335 106.5h2v2.5h-2zM335 109h2v2.5h-2zM335 116.5h2v3h-2zM335 119.5h2v2.5h-2zM337 119.5h2v2.5h-2zM337 130h2v2.5h-2zM343 101.5h2v2.5h-2zM343 104h2v2.5h-2zM343 106.5h2v2.5h-2zM345 106.5h2v2.5h-2zM345 109h2v2.5h-2zM345 127h2v3h-2zM345 132.5h2v3h-2zM347 127h2v3h-2zM347 130h2v2.5h-2zM347 132.5h2v3h-2zM349 135.5h2v2.5h-2zM351 94.5h2v2h-2zM351 138h2v3h-2zM351 141h2v3h-2zM353 94.5h2v2h-2zM353 138h2v3h-2zM355 96.5h2v2.5h-2zM355 132.5h2v3h-2zM355 135.5h2v2.5h-2zM357 96.5h2v2.5h-2zM357 135.5h2v2.5h-2zM359 94.5h2v2h-2zM359 141h2v3h-2zM365 94.5h2v2h-2zM367 138h2v3h-2zM369 94.5h2v2h-2zM369 132.5h2v3h-2zM371 94.5h2v2h-2zM373 96.5h2v2.5h-2zM373 138h2v3h-2zM375 94.5h2v2h-2zM381 96.5h2v2.5h-2zM381 135.5h2v2.5h-2zM383 130h2v2.5h-2zM383 132.5h2v3h-2zM383 138h2v3h-2zM387 99h2v2.5h-2zM387 135.5h2v2.5h-2zM389 99h2v2.5h-2zM389 132.5h2v3h-2zM389 135.5h2v2.5h-2zM391 99h2v2.5h-2zM391 130h2v2.5h-2zM393 99h2v2.5h-2zM397 101.5h2v2.5h-2zM397 127h2v3h-2zM399 99h2v2.5h-2zM399 127h2v3h-2zM399 130h2v2.5h-2zM401 94.5h2v2h-2zM401 132.5h2v3h-2zM403 130h2v2.5h-2zM405 130h2v2.5h-2zM405 141h2v3h-2zM405 152.5h2v3h-2zM405 174h2v3h-2zM407 92h2v2.5h-2zM407 94.5h2v2h-2zM407 96.5h2v2.5h-2zM407 101.5h2v2.5h-2zM409 96.5h2v2.5h-2zM409 101.5h2v2.5h-2zM409 135.5h2v2.5h-2zM411 89.5h2v2.5h-2zM411 92h2v2.5h-2zM411 99h2v2.5h-2zM411 101.5h2v2.5h-2zM411 135.5h2v2.5h-2zM411 141h2v3h-2zM411 144h2v3h-2zM413 109h2v2.5h-2zM413 144h2v3h-2zM415 87.5h2v2h-2zM415 99h2v2.5h-2zM415 106.5h2v2.5h-2zM415 135.5h2v2.5h-2zM415 138h2v3h-2zM415 141h2v3h-2zM417 92h2v2.5h-2zM417 94.5h2v2h-2zM417 96.5h2v2.5h-2zM417 147h2v2.5h-2zM419 99h2v2.5h-2zM419 101.5h2v2.5h-2zM419 135.5h2v2.5h-2zM419 138h2v3h-2zM421 99h2v2.5h-2zM421 135.5h2v2.5h-2zM421 138h2v3h-2zM423 92h2v2.5h-2zM423 94.5h2v2h-2zM423 99h2v2.5h-2zM425 124.5h2v2.5h-2zM425 130h2v2.5h-2zM425 132.5h2v3h-2zM425 138h2v3h-2zM425 141h2v3h-2zM429 144h2v3h-2zM431 116.5h2v3h-2zM431 124.5h2v2.5h-2zM431 130h2v2.5h-2zM431 132.5h2v3h-2zM431 152.5h2v3h-2zM437 111.5h2v2.5h-2zM437 122h2v2.5h-2zM437 127h2v3h-2zM437 130h2v2.5h-2zM437 138h2v3h-2zM437 141h2v3h-2zM437 147h2v2.5h-2zM437 155.5h2v3h-2zM441 87.5h2v2h-2zM441 89.5h2v2.5h-2zM441 96.5h2v2.5h-2zM441 99h2v2.5h-2zM441 104h2v2.5h-2zM441 106.5h2v2.5h-2zM441 114h2v2.5h-2zM441 119.5h2v2.5h-2zM441 124.5h2v2.5h-2zM441 127h2v3h-2zM441 132.5h2v3h-2zM443 92h2v2.5h-2zM443 144h2v3h-2zM443 147h2v2.5h-2zM445 101.5h2v2.5h-2zM445 138h2v3h-2zM445 141h2v3h-2zM453 85h2v2.5h-2zM453 87.5h2v2h-2zM453 101.5h2v2.5h-2zM455 96.5h2v2.5h-2zM455 152.5h2v3h-2zM457 92h1v2.5h-1zM457 94.5h1v2h-1zM457 155.5h1v3h-1z"/>
<path fill="#00ff80" d="M211 189.5h2v3.5h-2zM213 135.5h2v2.5h-2zM215 130h2v2.5h-2zM219 119.5h2v2.5h-2zM221 114h2v2.5h-2zM221 116.5h2v3h-2zM223 122h2v2.5h-2zM225 116.5h2v3h-2zM227 114h2v2.5h-2zM229 109h2v2.5h-2zM231 101.5h2v2.5h-2zM231 104h2v2.5h-2zM231 106.5h2v2.5h-2zM231 111.5h2v2.5h-2zM233 89.5h2v2.5h-2zM233 96.5h2v2.5h-2zM233 99h2v2.5h-2zM233 101.5h2v2.5h-2zM233 106.5h2v2.5h-2zM239 158.5h2v3h-2zM255 167.5h2v3h-2zM255 170.5h2v3.5h-2zM265 164.5h2v3h-2zM265 167.5h2v3h-2zM265 170.5h2v3.5h-2zM267 76.5h2v2h-2zM267 164.5h2v3h-2zM267 167.5h2v3h-2zM267 174h2v3h-2zM269 167.5h2v3h-2zM275 89.5h2v2.5h-2zM275 167.5h2v3h-2zM277 89.5h2v2.5h-2zM277 92h2v2.5h-2zM277 96.5h2v2.5h-2zM277 104h2v2.5h-2zM279 89.5h2v2.5h-2zM279 92h2v2.5h-2zM279 94.5h2v2h-2zM279 99h2v2.5h-2zM279 161.5h2v3h-2zM279 167.5h2v3h-2zM279 170.5h2v3.5h-2zM279 174h2v3h-2zM281 87.5h2v2h-2zM281 96.5h2v2.5h-2zM281 101.5h2v2.5h-2zM281 106.5h2v2.5h-2zM281 109h2v2.5h-2zM283 89.5h2v2.5h-2zM283 101.5h2v2.5h-2zM283 106.5h2v2.5h-2zM283 109h2v2.5h-2zM285 89.5h2v2.5h-2zM285 92h2v2.5h-2zM285 106.5h2v2.5h-2zM287 87.5h2v2h-2zM287 92h2v2.5h-2zM287 116.5h2v3h-2zM287 119.5h2v2.5h-2zM289 87.5h2v2h-2zM289 122h2v2.5h-2zM291 87.5h2v2h-2zM291 122h2v2.5h-2zM291 124.5h2v2.5h-2zM291 174h2v3h-2zM295 87.5h2v2h-2zM295 124.5h2v2.5h-2zM297 85h2v2.5h-2zM297 124.5h2v2.5h-2zM299 85h2v2.5h-2zM299 124.5h2v2.5h-2zM301 127h2v3h-2zM305 127h2v3h-2zM307 127h2v3h-2zM309 85h2v2.5h-2zM309 89.5h2v2.5h-2zM309 130h2v2.5h-2zM311 87.5h2v2h-2zM311 130h2v2.5h-2zM313 96.5h2v2.5h-2zM313 99h2v2.5h-2zM313 132.5h2v3h-2zM315 99h2v2.5h-2zM315 104h2v2.5h-2zM315 106.5h2v2.5h-2zM315 109h2v2.5h-2zM315 111.5h2v2.5h-2zM315 114h2v2.5h-2zM315 127h2v3h-2zM317 101.5h2v2.5h-2zM317 109h2v2.5h-2zM317 130h2v2.5h-2zM317 170.5h2v3.5h-2zM319 109h2v2.5h-2zM321 106.5h2v2.5h-2zM321 109h2v2.5h-2zM321 114h2v2.5h-2zM321 116.5h2v3h-2zM321 124.5h2v2.5h-2zM321 130h2v2.5h-2zM321 135.5h2v2.5h-2zM321 138h2v3h-2zM323 101.5h2v2.5h-2zM323 104h2v2.5h-2zM323 106.5h2v2.5h-2zM323 114h2v2.5h-2zM323 132.5h2v3h-2zM325 116.5h2v3h-2zM325 119.5h2v2.5h-2zM325 124.5h2v2.5h-2zM327 119.5h2v2.5h-2zM327 122h2v2.5h-2zM327 127h2v3h-2zM335 122h2v2.5h-2zM337 124.5h2v2.5h-2zM341 135.5h2v2.5h-2zM343 109h2v2.5h-2zM343 130h2v2.5h-2zM343 177h2v3h-2zM345 114h2v2.5h-2zM345 119.5h2v2.5h-2zM345 122h2v2.5h-2zM345 124.5h2v2.5h-2zM345 130h2v2.5h-2zM347 99h2v2.5h-2zM347 101.5h2v2.5h-2zM347 122h2v2.5h-2zM347 124.5h2v2.5h-2zM349 94.5h2v2h-2zM349 96.5h2v2.5h-2zM349 132.5h2v3h-2zM351 96.5h2v2.5h-2zM351 177h2v3h-2zM353 135.5h2v2.5h-2zM355 130h2v2.5h-2zM357 132.5h2v3h-2zM359 138h2v3h-2zM361 135.5h2v2.5h-2zM363 99h2v2.5h-2zM363 135.5h2v2.5h-2zM365 96.5h2v2.5h-2zM365 138h2v3h-2zM367 94.5h2v2h-2zM367 135.5h2v2.5h-2zM369 96.5h2v2.5h-2zM369 138h2v3h-2zM371 132.5h2v3h-2zM371 135.5h2v2.5h-2zM373 99h2v2.5h-2zM373 132.5h2v3h-2zM373 135.5h2v2.5h-2zM375 96.5h2v2.5h-2zM377 96.5h2v2.5h-2zM379 132.5h2v3h-2zM381 99h2v2.5h-2zM381 132.5h2v3h-2zM383 99h2v2.5h-2zM383 127h2v3h-2zM383 135.5h2v2.5h-2zM385 96.5h2v2.5h-2zM385 132.5h2v3h-2zM387 132.5h2v3h-2zM391 127h2v3h-2zM393 101.5h2v2.5h-2zM395 132.5h2v3h-2zM397 104h2v2.5h-2zM397 119.5h2v2.5h-2zM397 122h2v2.5h-2zM397 124.5h2v2.5h-2zM401 99h2v2.5h-2zM401 127h2v3h-2zM403 124.5h2v2.5h-2zM403 127h2v3h-2zM403 132.5h2v3h-2zM403 135.5h2v2.5h-2zM405 127h2v3h-2zM405 135.5h2v2.5h-2zM405 138h2v3h-2zM407 99h2v2.5h-2zM409 132.5h2v3h-2zM411 104h2v2.5h-2zM411 106.5h2v2.5h-2zM411 132.5h2v3h-2zM411 138h2v3h-2zM413 135.5h2v2.5h-2zM413 138h2v3h-2zM415 109h2v2.5h-2zM417 135.5h2v2.5h-2zM417 138h2v3h-2zM417 141h2v3h-2zM417 144h2v3h-2zM419 104h2v2.5h-2zM419 106.5h2v2.5h-2zM419 130h2v2.5h-2zM421 101.5h2v2.5h-2zM421 130h2v2.5h-2zM421 132.5h2v3h-2zM423 101.5h2v2.5h-2zM423 130h2v2.5h-2zM423 141h2v3h-2zM423 144h2v3h-2zM425 122h2v2.5h-2zM425 127h2v3h-2zM431 114h2v2.5h-2zM431 138h2v3h-2zM431 149.5h2v3h-2zM431 155.5h2v3h-2zM431 158.5h2v3h-2zM437 135.5h2v2.5h-2zM437 144h2v3h-2zM441 109h2v2.5h-2zM443 94.5h2v2h-2zM443 96.5h2v2.5h-2zM443 99h2v2.5h-2zM443 122h2v2.5h-2zM443 127h2v3h-2zM443 130h2v2.5h-2zM443 132.5h2v3h-2zM443 135.5h2v2.5h-2zM443 138h2v3h-2zM443 141h2v3h-2zM445 104h2v2.5h-2zM445 106.5h2v2.5h-2zM445 109h2v2.5h-2zM445 116.5h2v3h-2zM445 119.5h2v2.5h-2zM445 124.5h2v2.5h-2zM445 127h2v3h-2zM445 130h2v2.5h-2zM445 132.5h2v3h-2zM445 135.5h2v2.5h-2zM453 149.5h2v3h-2zM453 152.5h2v3h-2zM455 99h2v2.5h-2zM455 101.5h2v2.5h-2zM455 104h2v2.5h-2zM455 149.5h2v3h-2zM457 96.5h1v2.5h-1zM457 101.5h1v2.5h-1zM457 104h1v2.5h-1zM457 152.5h1v3h-1z"/>
<path fill="#00ff55" d="M215 132.5h2v3h-2zM217 124.5h2v2.5h-2zM219 116.5h2v3h-2zM223 116.5h2v3h-2zM225 111.5h2v2.5h-2zM225 114h2v2.5h-2zM227 111.5h2v2.5h-2zM229 106.5h2v2.5h-2zM231 92h2v2.5h-2zM231 94.5h2v2h-2zM231 96.5h2v2.5h-2zM231 99h2v2.5h-2zM233 94.5h2v2h-2zM279 104h2v2.5h-2zM279 164.5h2v3h-2zM281 89.5h2v2.5h-2zM281 92h2v2.5h-2zM281 94.5h2v2h-2zM281 99h2v2.5h-2zM283 92h2v2.5h-2zM283 94.5h2v2h-2zM283 99h2v2.5h-2zM283 104h2v2.5h-2zM285 94.5h2v2h-2zM285 96.5h2v2.5h-2zM285 99h2v2.5h-2zM285 104h2v2.5h-2zM287 94.5h2v2h-2zM287 99h2v2.5h-2zM287 101.5h2v2.5h-2zM287 104h2v2.5h-2zM287 106.5h2v2.5h-2zM287 109h2v2.5h-2zM287 111.5h2v2.5h-2zM287 114h2v2.5h-2zM289 89.5h2v2.5h-2zM289 92h2v2.5h-2zM289 114h2v2.5h-2zM289 116.5h2v3h-2zM289 119.5h2v2.5h-2zM291 92h2v2.5h-2zM291 116.5h2v3h-2zM291 119.5h2v2.5h-2zM293 87.5h2v2h-2zM293 89.5h2v2.5h-2zM293 124.5h2v2.5h-2zM297 119.5h2v2.5h-2zM297 122h2v2.5h-2zM303 87.5h2v2h-2zM303 124.5h2v2.5h-2zM305 124.5h2v2.5h-2zM307 87.5h2v2h-2zM307 89.5h2v2.5h-2zM307 124.5h2v2.5h-2zM309 87.5h2v2h-2zM309 92h2v2.5h-2zM309 127h2v3h-2zM311 127h2v3h-2zM313 101.5h2v2.5h-2zM313 104h2v2.5h-2zM313 106.5h2v2.5h-2zM313 109h2v2.5h-2zM313 127h2v3h-2zM313 130h2v2.5h-2zM315 116.5h2v3h-2zM315 124.5h2v2.5h-2zM317 106.5h2v2.5h-2zM317 111.5h2v2.5h-2zM317 114h2v2.5h-2zM319 111.5h2v2.5h-2zM319 114h2v2.5h-2zM319 130h2v2.5h-2zM319 132.5h2v3h-2zM321 119.5h2v2.5h-2zM321 122h2v2.5h-2zM321 127h2v3h-2zM323 109h2v2.5h-2zM323 111.5h2v2.5h-2zM323 124.5h2v2.5h-2zM323 130h2v2.5h-2zM325 122h2v2.5h-2zM325 127h2v3h-2zM331 111.5h2v2.5h-2zM331 114h2v2.5h-2zM331 116.5h2v3h-2zM345 111.5h2v2.5h-2zM345 116.5h2v3h-2zM347 104h2v2.5h-2zM347 106.5h2v2.5h-2zM347 111.5h2v2.5h-2zM347 114h2v2.5h-2zM347 116.5h2v3h-2zM347 119.5h2v2.5h-2zM349 99h2v2.5h-2zM349 127h2v3h-2zM349 130h2v2.5h-2zM351 99h2v2.5h-2zM351 132.5h2v3h-2zM351 135.5h2v2.5h-2zM353 96.5h2v2.5h-2zM353 132.5h2v3h-2zM357 99h2v2.5h-2zM357 130h2v2.5h-2zM359 96.5h2v2.5h-2zM359 132.5h2v3h-2zM359 135.5h2v2.5h-2zM361 92h2v2.5h-2zM361 94.5h2v2h-2zM361 132.5h2v3h-2zM363 101.5h2v2.5h-2zM365 132.5h2v3h-2zM367 96.5h2v2.5h-2zM369 130h2v2.5h-2zM369 135.5h2v2.5h-2zM369 141h2v3h-2zM371 96.5h2v2.5h-2zM371 130h2v2.5h-2zM373 130h2v2.5h-2zM375 135.5h2v2.5h-2zM377 99h2v2.5h-2zM379 99h2v2.5h-2zM381 130h2v2.5h-2zM383 101.5h2v2.5h-2zM385 99h2v2.5h-2zM385 130h2v2.5h-2zM387 101.5h2v2.5h-2zM387 130h2v2.5h-2zM389 101.5h2v2.5h-2zM389 127h2v3h-2zM389 130h2v2.5h-2zM391 101.5h2v2.5h-2zM391 124.5h2v2.5h-2zM393 127h2v3h-2zM393 130h2v2.5h-2zM393 132.5h2v3h-2zM395 101.5h2v2.5h-2zM395 127h2v3h-2zM395 130h2v2.5h-2zM397 111.5h2v2.5h-2zM397 114h2v2.5h-2zM397 116.5h2v3h-2zM399 101.5h2v2.5h-2zM399 119.5h2v2.5h-2zM399 122h2v2.5h-2zM399 124.5h2v2.5h-2zM401 101.5h2v2.5h-2zM401 130h2v2.5h-2zM403 89.5h2v2.5h-2zM403 92h2v2.5h-2zM403 94.5h2v2h-2zM405 83h2v2h-2zM405 85h2v2.5h-2zM405 87.5h2v2h-2zM405 124.5h2v2.5h-2zM407 104h2v2.5h-2zM407 106.5h2v2.5h-2zM407 109h2v2.5h-2zM407 127h2v3h-2zM407 132.5h2v3h-2zM409 104h2v2.5h-2zM409 106.5h2v2.5h-2zM409 109h2v2.5h-2zM409 130h2v2.5h-2zM411 111.5h2v2.5h-2zM411 130h2v2.5h-2zM413 116.5h2v3h-2zM413 130h2v2.5h-2zM413 132.5h2v3h-2zM415 111.5h2v2.5h-2zM415 114h2v2.5h-2zM417 101.5h2v2.5h-2zM417 104h2v2.5h-2zM417 106.5h2v2.5h-2zM417 130h2v2.5h-2zM417 132.5h2v3h-2zM419 109h2v2.5h-2zM419 111.5h2v2.5h-2zM419 124.5h2v2.5h-2zM419 127h2v3h-2zM419 132.5h2v3h-2zM421 104h2v2.5h-2zM421 106.5h2v2.5h-2zM421 114h2v2.5h-2zM421 124.5h2v2.5h-2zM421 127h2v3h-2zM423 96.5h2v2.5h-2zM423 104h2v2.5h-2zM423 111.5h2v2.5h-2zM423 116.5h2v3h-2zM423 119.5h2v2.5h-2zM423 124.5h2v2.5h-2zM423 127h2v3h-2zM423 132.5h2v3h-2zM423 135.5h2v2.5h-2zM423 138h2v3h-2zM431 135.5h2v2.5h-2zM431 141h2v3h-2zM431 147h2v2.5h-2zM441 101.5h2v2.5h-2zM443 106.5h2v2.5h-2zM443 111.5h2v2.5h-2zM443 114h2v2.5h-2zM443 116.5h2v3h-2zM443 119.5h2v2.5h-2zM443 124.5h2v2.5h-2zM445 111.5h2v2.5h-2zM445 114h2v2.5h-2zM445 122h2v2.5h-2zM453 104h2v2.5h-2zM453 109h2v2.5h-2zM455 106.5h2v2.5h-2zM455 109h2v2.5h-2zM455 147h2v2.5h-2zM457 99h1v2.5h-1zM457 149.5h1v3h-1z"/>
<path fill="#00ff2a" d="M211 94.5h2v2h-2zM211 99h2v2.5h-2zM211 101.5h2v2.5h-2zM211 106.5h2v2.5h-2zM211 109h2v2.5h-2zM211 114h2v2.5h-2zM211 119.5h2v2.5h-2zM211 122h2v2.5h-2zM211 127h2v3h-2zM211 130h2v2.5h-2zM211 135.5h2v2.5h-2zM211 141h2v3h-2zM211 161.5h2v3h-2zM211 164.5h2v3h-2zM211 167.5h2v3h-2zM211 170.5h2v3.5h-2zM211 174h2v3h-2zM211 177h2v3h-2zM211 180h2v3h-2zM211 183h2v3.5h-2zM211 186.5h2v3h-2zM213 132.5h2v3h-2zM215 127h2v3h-2zM217 122h2v2.5h-2zM219 114h2v2.5h-2zM221 111.5h2v2.5h-2zM223 114h2v2.5h-2zM225 109h2v2.5h-2zM227 109h2v2.5h-2zM229 101.5h2v2.5h-2zM229 104h2v2.5h-2zM231 72h2v2h-2zM231 74h2v2.5h-2zM231 78.5h2v2h-2zM231 80.5h2v2.5h-2zM231 83h2v2h-2zM231 87.5h2v2h-2zM231 89.5h2v2.5h-2zM281 104h2v2.5h-2zM283 96.5h2v2.5h-2zM285 101.5h2v2.5h-2zM287 96.5h2v2.5h-2zM289 94.5h2v2h-2zM289 96.5h2v2.5h-2zM289 99h2v2.5h-2zM289 101.5h2v2.5h-2zM289 104h2v2.5h-2zM289 109h2v2.5h-2zM289 111.5h2v2.5h-2zM291 89.5h2v2.5h-2zM291 94.5h2v2h-2zM291 106.5h2v2.5h-2zM291 111.5h2v2.5h-2zM291 114h2v2.5h-2zM293 92h2v2.5h-2zM293 122h2v2.5h-2zM295 119.5h2v2.5h-2zM295 122h2v2.5h-2zM297 87.5h2v2h-2zM297 116.5h2v3h-2zM299 89.5h2v2.5h-2zM299 122h2v2.5h-2zM301 85h2v2.5h-2zM301 124.5h2v2.5h-2zM303 122h2v2.5h-2zM305 87.5h2v2h-2zM307 92h2v2.5h-2zM307 119.5h2v2.5h-2zM307 122h2v2.5h-2zM309 94.5h2v2h-2zM309 96.5h2v2.5h-2zM309 124.5h2v2.5h-2zM311 89.5h2v2.5h-2zM311 92h2v2.5h-2zM311 124.5h2v2.5h-2zM315 119.5h2v2.5h-2zM315 122h2v2.5h-2zM317 116.5h2v3h-2zM317 122h2v2.5h-2zM317 124.5h2v2.5h-2zM317 127h2v3h-2zM319 116.5h2v3h-2zM319 127h2v3h-2zM323 116.5h2v3h-2zM323 127h2v3h-2zM331 119.5h2v2.5h-2zM331 127h2v3h-2zM331 130h2v2.5h-2zM331 132.5h2v3h-2zM347 109h2v2.5h-2zM349 101.5h2v2.5h-2zM351 130h2v2.5h-2zM353 99h2v2.5h-2zM353 127h2v3h-2zM353 130h2v2.5h-2zM355 99h2v2.5h-2zM355 101.5h2v2.5h-2zM355 127h2v3h-2zM357 101.5h2v2.5h-2zM359 99h2v2.5h-2zM361 96.5h2v2.5h-2zM363 130h2v2.5h-2zM363 132.5h2v3h-2zM365 130h2v2.5h-2zM365 135.5h2v2.5h-2zM367 99h2v2.5h-2zM367 132.5h2v3h-2zM369 99h2v2.5h-2zM369 127h2v3h-2zM371 99h2v2.5h-2zM373 101.5h2v2.5h-2zM373 127h2v3h-2zM375 99h2v2.5h-2zM375 130h2v2.5h-2zM377 132.5h2v3h-2zM379 101.5h2v2.5h-2zM379 130h2v2.5h-2zM381 101.5h2v2.5h-2zM381 124.5h2v2.5h-2zM381 127h2v3h-2zM383 116.5h2v3h-2zM383 119.5h2v2.5h-2zM383 122h2v2.5h-2zM383 124.5h2v2.5h-2zM385 101.5h2v2.5h-2zM385 127h2v3h-2zM387 104h2v2.5h-2zM387 127h2v3h-2zM391 111.5h2v2.5h-2zM391 122h2v2.5h-2zM393 104h2v2.5h-2zM393 124.5h2v2.5h-2zM395 104h2v2.5h-2zM395 124.5h2v2.5h-2zM397 106.5h2v2.5h-2zM397 109h2v2.5h-2zM399 104h2v2.5h-2zM399 106.5h2v2.5h-2zM399 111.5h2v2.5h-2zM399 114h2v2.5h-2zM399 116.5h2v3h-2zM401 104h2v2.5h-2zM401 106.5h2v2.5h-2zM401 116.5h2v3h-2zM401 119.5h2v2.5h-2zM401 122h2v2.5h-2zM401 124.5h2v2.5h-2zM403 96.5h2v2.5h-2zM407 124.5h2v2.5h-2zM407 130h2v2.5h-2zM409 111.5h2v2.5h-2zM409 116.5h2v3h-2zM409 122h2v2.5h-2zM409 124.5h2v2.5h-2zM409 127h2v3h-2zM411 109h2v2.5h-2zM411 114h2v2.5h-2zM411 116.5h2v3h-2zM411 119.5h2v2.5h-2zM411 124.5h2v2.5h-2zM411 127h2v3h-2zM413 111.5h2v2.5h-2zM413 114h2v2.5h-2zM413 119.5h2v2.5h-2zM413 122h2v2.5h-2zM413 124.5h2v2.5h-2zM413 127h2v3h-2zM415 116.5h2v3h-2zM415 127h2v3h-2zM415 130h2v2.5h-2zM415 132.5h2v3h-2zM417 109h2v2.5h-2zM417 111.5h2v2.5h-2zM417 114h2v2.5h-2zM417 116.5h2v3h-2zM417 122h2v2.5h-2zM417 124.5h2v2.5h-2zM417 127h2v3h-2zM419 114h2v2.5h-2zM419 116.5h2v3h-2zM419 119.5h2v2.5h-2zM419 122h2v2.5h-2zM421 109h2v2.5h-2zM421 111.5h2v2.5h-2zM421 116.5h2v3h-2zM421 119.5h2v2.5h-2zM421 122h2v2.5h-2zM423 106.5h2v2.5h-2zM423 109h2v2.5h-2zM423 114h2v2.5h-2zM423 122h2v2.5h-2zM431 144h2v3h-2zM443 101.5h2v2.5h-2zM443 104h2v2.5h-2zM443 109h2v2.5h-2zM453 106.5h2v2.5h-2zM453 111.5h2v2.5h-2zM453 119.5h2v2.5h-2zM453 122h2v2.5h-2zM453 124.5h2v2.5h-2zM453 127h2v3h-2zM453 130h2v2.5h-2zM453 132.5h2v3h-2zM453 135.5h2v2.5h-2zM453 141h2v3h-2zM453 144h2v3h-2zM453 147h2v2.5h-2zM455 135.5h2v2.5h-2zM455 138h2v3h-2zM455 141h2v3h-2zM455 144h2v3h-2zM457 106.5h1v2.5h-1zM457 109h1v2.5h-1zM457 141h1v3h-1zM457 147h1v2.5h-1z"/>
<path fill="#00ff00" d="M211 96.5h2v2.5h-2zM211 104h2v2.5h-2zM211 111.5h2v2.5h-2zM211 116.5h2v3h-2zM211 124.5h2v2.5h-2zM211 132.5h2v3h-2zM211 138h2v3h-2zM211 144h2v3h-2zM211 147h2v2.5h-2zM211 149.5h2v3h-2zM211 152.5h2v3h-2zM211 155.5h2v3h-2zM211 158.5h2v3h-2zM213 127h2v3h-2zM213 130h2v2.5h-2zM215 124.5h2v2.5h-2zM217 119.5h2v2.5h-2zM219 111.5h2v2.5h-2zM223 109h2v2.5h-2zM223 111.5h2v2.5h-2zM227 106.5h2v2.5h-2zM229 92h2v2.5h-2zM229 96.5h2v2.5h-2zM229 99h2v2.5h-2zM231 70h2v2h-2zM231 76.5h2v2h-2zM231 85h2v2.5h-2zM289 106.5h2v2.5h-2zM291 96.5h2v2.5h-2zM291 99h2v2.5h-2zM291 101.5h2v2.5h-2zM291 104h2v2.5h-2zM291 109h2v2.5h-2zM293 94.5h2v2h-2zM293 96.5h2v2.5h-2zM293 99h2v2.5h-2zM293 101.5h2v2.5h-2zM293 104h2v2.5h-2zM293 106.5h2v2.5h-2zM293 109h2v2.5h-2zM293 116.5h2v3h-2zM293 119.5h2v2.5h-2zM295 89.5h2v2.5h-2zM295 92h2v2.5h-2zM295 94.5h2v2h-2zM295 96.5h2v2.5h-2zM295 116.5h2v3h-2zM297 89.5h2v2.5h-2zM297 114h2v2.5h-2zM299 87.5h2v2h-2zM299 92h2v2.5h-2zM299 116.5h2v3h-2zM299 119.5h2v2.5h-2zM301 87.5h2v2h-2zM301 119.5h2v2.5h-2zM301 122h2v2.5h-2zM303 89.5h2v2.5h-2zM303 92h2v2.5h-2zM303 116.5h2v3h-2zM305 89.5h2v2.5h-2zM305 92h2v2.5h-2zM305 96.5h2v2.5h-2zM305 99h2v2.5h-2zM305 119.5h2v2.5h-2zM305 122h2v2.5h-2zM307 94.5h2v2h-2zM307 111.5h2v2.5h-2zM307 114h2v2.5h-2zM307 116.5h2v3h-2zM309 99h2v2.5h-2zM309 101.5h2v2.5h-2zM309 106.5h2v2.5h-2zM309 109h2v2.5h-2zM309 122h2v2.5h-2zM311 94.5h2v2h-2zM311 96.5h2v2.5h-2zM311 111.5h2v2.5h-2zM311 122h2v2.5h-2zM313 111.5h2v2.5h-2zM313 122h2v2.5h-2zM313 124.5h2v2.5h-2zM317 119.5h2v2.5h-2zM319 119.5h2v2.5h-2zM319 122h2v2.5h-2zM319 124.5h2v2.5h-2zM323 119.5h2v2.5h-2zM323 122h2v2.5h-2zM331 122h2v2.5h-2zM331 124.5h2v2.5h-2zM349 104h2v2.5h-2zM349 106.5h2v2.5h-2zM349 116.5h2v3h-2zM349 119.5h2v2.5h-2zM349 122h2v2.5h-2zM349 124.5h2v2.5h-2zM351 101.5h2v2.5h-2zM351 124.5h2v2.5h-2zM351 127h2v3h-2zM353 101.5h2v2.5h-2zM355 104h2v2.5h-2zM355 119.5h2v2.5h-2zM355 122h2v2.5h-2zM355 124.5h2v2.5h-2zM357 104h2v2.5h-2zM357 106.5h2v2.5h-2zM357 109h2v2.5h-2zM357 122h2v2.5h-2zM357 124.5h2v2.5h-2zM357 127h2v3h-2zM359 101.5h2v2.5h-2zM359 130h2v2.5h-2zM361 99h2v2.5h-2zM361 127h2v3h-2zM361 130h2v2.5h-2zM363 104h2v2.5h-2zM363 106.5h2v2.5h-2zM363 109h2v2.5h-2zM365 99h2v2.5h-2zM365 124.5h2v2.5h-2zM365 127h2v3h-2zM367 127h2v3h-2zM367 130h2v2.5h-2zM369 101.5h2v2.5h-2zM369 124.5h2v2.5h-2zM371 101.5h2v2.5h-2zM371 124.5h2v2.5h-2zM371 127h2v3h-2zM373 104h2v2.5h-2zM373 122h2v2.5h-2zM373 124.5h2v2.5h-2zM375 101.5h2v2.5h-2zM375 132.5h2v3h-2zM377 101.5h2v2.5h-2zM377 127h2v3h-2zM377 130h2v2.5h-2zM379 104h2v2.5h-2zM379 124.5h2v2.5h-2zM379 127h2v3h-2zM381 119.5h2v2.5h-2zM381 122h2v2.5h-2zM383 104h2v2.5h-2zM383 106.5h2v2.5h-2zM383 109h2v2.5h-2zM383 111.5h2v2.5h-2zM383 114h2v2.5h-2zM385 104h2v2.5h-2zM385 119.5h2v2.5h-2zM385 122h2v2.5h-2zM385 124.5h2v2.5h-2zM387 106.5h2v2.5h-2zM387 109h2v2.5h-2zM387 122h2v2.5h-2zM387 124.5h2v2.5h-2zM389 104h2v2.5h-2zM389 119.5h2v2.5h-2zM389 122h2v2.5h-2zM389 124.5h2v2.5h-2zM391 104h2v2.5h-2zM391 114h2v2.5h-2zM391 116.5h2v3h-2zM391 119.5h2v2.5h-2zM393 106.5h2v2.5h-2zM393 109h2v2.5h-2zM393 114h2v2.5h-2zM393 116.5h2v3h-2zM393 119.5h2v2.5h-2zM393 122h2v2.5h-2zM395 106.5h2v2.5h-2zM395 109h2v2.5h-2zM395 114h2v2.5h-2zM395 119.5h2v2.5h-2zM395 122h2v2.5h-2zM399 109h2v2.5h-2zM401 109h2v2.5h-2zM401 111.5h2v2.5h-2zM401 114h2v2.5h-2zM407 111.5h2v2.5h-2zM407 114h2v2.5h-2zM407 116.5h2v3h-2zM407 119.5h2v2.5h-2zM407 122h2v2.5h-2zM409 114h2v2.5h-2zM409 119.5h2v2.5h-2zM411 122h2v2.5h-2zM415 119.5h2v2.5h-2zM415 122h2v2.5h-2zM415 124.5h2v2.5h-2zM417 119.5h2v2.5h-2zM453 114h2v2.5h-2zM453 116.5h2v3h-2zM453 138h2v3h-2zM455 111.5h2v2.5h-2zM455 114h2v2.5h-2zM455 116.5h2v3h-2zM455 119.5h2v2.5h-2zM455 124.5h2v2.5h-2zM455 127h2v3h-2zM455 130h2v2.5h-2zM457 111.5h1v2.5h-1zM457 114h1v2.5h-1zM457 116.5h1v3h-1zM457 127h1v3h-1zM457 130h1v2.5h-1zM457 132.5h1v3h-1zM457 135.5h1v2.5h-1zM457 138h1v3h-1zM457 144h1v3h-1z"/>
<path fill="#2aff00" d="M215 122h2v2.5h-2zM217 114h2v2.5h-2zM217 116.5h2v3h-2zM227 104h2v2.5h-2zM229 89.5h2v2.5h-2zM229 94.5h2v2h-2zM293 111.5h2v2.5h-2zM293 114h2v2.5h-2zM295 99h2v2.5h-2zM295 104h2v2.5h-2zM295 106.5h2v2.5h-2zM295 109h2v2.5h-2zM295 111.5h2v2.5h-2zM295 114h2v2.5h-2zM297 94.5h2v2h-2zM297 96.5h2v2.5h-2zM297 111.5h2v2.5h-2zM299 94.5h2v2h-2zM299 96.5h2v2.5h-2zM299 99h2v2.5h-2zM299 101.5h2v2.5h-2zM299 104h2v2.5h-2zM299 106.5h2v2.5h-2zM299 109h2v2.5h-2zM299 111.5h2v2.5h-2zM299 114h2v2.5h-2zM303 94.5h2v2h-2zM303 96.5h2v2.5h-2zM303 99h2v2.5h-2zM303 101.5h2v2.5h-2zM303 109h2v2.5h-2zM303 111.5h2v2.5h-2zM303 114h2v2.5h-2zM303 119.5h2v2.5h-2zM305 94.5h2v2h-2zM305 101.5h2v2.5h-2zM305 104h2v2.5h-2zM305 106.5h2v2.5h-2zM305 109h2v2.5h-2zM305 114h2v2.5h-2zM305 116.5h2v3h-2zM307 96.5h2v2.5h-2zM307 99h2v2.5h-2zM307 101.5h2v2.5h-2zM307 104h2v2.5h-2zM307 106.5h2v2.5h-2zM307 109h2v2.5h-2zM309 104h2v2.5h-2zM309 111.5h2v2.5h-2zM309 116.5h2v3h-2zM309 119.5h2v2.5h-2zM311 99h2v2.5h-2zM311 101.5h2v2.5h-2zM311 109h2v2.5h-2zM311 114h2v2.5h-2zM311 116.5h2v3h-2zM311 119.5h2v2.5h-2zM313 114h2v2.5h-2zM313 116.5h2v3h-2zM313 119.5h2v2.5h-2zM349 109h2v2.5h-2zM349 111.5h2v2.5h-2zM349 114h2v2.5h-2zM351 104h2v2.5h-2zM351 106.5h2v2.5h-2zM351 109h2v2.5h-2zM351 122h2v2.5h-2zM353 104h2v2.5h-2zM353 106.5h2v2.5h-2zM353 109h2v2.5h-2zM353 116.5h2v3h-2zM353 119.5h2v2.5h-2zM353 122h2v2.5h-2zM353 124.5h2v2.5h-2zM355 106.5h2v2.5h-2zM355 109h2v2.5h-2zM355 111.5h2v2.5h-2zM355 114h2v2.5h-2zM355 116.5h2v3h-2zM357 111.5h2v2.5h-2zM357 114h2v2.5h-2zM357 116.5h2v3h-2zM357 119.5h2v2.5h-2zM359 104h2v2.5h-2zM359 106.5h2v2.5h-2zM359 124.5h2v2.5h-2zM359 127h2v3h-2zM361 101.5h2v2.5h-2zM361 116.5h2v3h-2zM361 119.5h2v2.5h-2zM361 122h2v2.5h-2zM361 124.5h2v2.5h-2zM363 122h2v2.5h-2zM363 124.5h2v2.5h-2zM363 127h2v3h-2zM365 101.5h2v2.5h-2zM365 104h2v2.5h-2zM365 114h2v2.5h-2zM365 119.5h2v2.5h-2zM365 122h2v2.5h-2zM367 101.5h2v2.5h-2zM367 124.5h2v2.5h-2zM369 106.5h2v2.5h-2zM369 111.5h2v2.5h-2zM369 114h2v2.5h-2zM369 116.5h2v3h-2zM369 119.5h2v2.5h-2zM369 122h2v2.5h-2zM371 104h2v2.5h-2zM371 116.5h2v3h-2zM371 122h2v2.5h-2zM373 106.5h2v2.5h-2zM373 109h2v2.5h-2zM373 114h2v2.5h-2zM373 116.5h2v3h-2zM373 119.5h2v2.5h-2zM375 104h2v2.5h-2zM375 127h2v3h-2zM377 104h2v2.5h-2zM377 106.5h2v2.5h-2zM377 122h2v2.5h-2zM377 124.5h2v2.5h-2zM379 106.5h2v2.5h-2zM379 109h2v2.5h-2zM379 114h2v2.5h-2zM379 116.5h2v3h-2zM379 119.5h2v2.5h-2zM379 122h2v2.5h-2zM381 104h2v2.5h-2zM381 106.5h2v2.5h-2zM381 111.5h2v2.5h-2zM381 114h2v2.5h-2zM381 116.5h2v3h-2zM385 109h2v2.5h-2zM385 114h2v2.5h-2zM385 116.5h2v3h-2zM387 114h2v2.5h-2zM387 116.5h2v3h-2zM387 119.5h2v2.5h-2zM389 106.5h2v2.5h-2zM389 109h2v2.5h-2zM389 114h2v2.5h-2zM389 116.5h2v3h-2zM391 106.5h2v2.5h-2zM391 109h2v2.5h-2zM393 111.5h2v2.5h-2zM395 111.5h2v2.5h-2zM395 116.5h2v3h-2zM403 122h2v2.5h-2zM425 99h2v2.5h-2zM425 104h2v2.5h-2zM425 106.5h2v2.5h-2zM425 109h2v2.5h-2zM455 122h2v2.5h-2zM455 132.5h2v3h-2zM457 119.5h1v2.5h-1zM457 122h1v2.5h-1zM457 124.5h1v2.5h-1z"/>
<path fill="#55ff00" d="M213 124.5h2v2.5h-2zM215 119.5h2v2.5h-2zM217 111.5h2v2.5h-2zM219 109h2v2.5h-2zM221 109h2v2.5h-2zM223 106.5h2v2.5h-2zM225 106.5h2v2.5h-2zM227 99h2v2.5h-2zM227 101.5h2v2.5h-2zM229 70h2v2h-2zM229 76.5h2v2h-2zM229 83h2v2h-2zM229 85h2v2.5h-2zM229 87.5h2v2h-2zM295 101.5h2v2.5h-2zM297 92h2v2.5h-2zM297 99h2v2.5h-2zM297 104h2v2.5h-2zM297 106.5h2v2.5h-2zM297 109h2v2.5h-2zM301 89.5h2v2.5h-2zM301 92h2v2.5h-2zM301 94.5h2v2h-2zM301 96.5h2v2.5h-2zM301 99h2v2.5h-2zM301 101.5h2v2.5h-2zM301 111.5h2v2.5h-2zM301 114h2v2.5h-2zM301 116.5h2v3h-2zM303 104h2v2.5h-2zM303 106.5h2v2.5h-2zM305 111.5h2v2.5h-2zM309 114h2v2.5h-2zM311 104h2v2.5h-2zM311 106.5h2v2.5h-2zM351 111.5h2v2.5h-2zM351 114h2v2.5h-2zM351 116.5h2v3h-2zM351 119.5h2v2.5h-2zM353 111.5h2v2.5h-2zM353 114h2v2.5h-2zM359 109h2v2.5h-2zM359 111.5h2v2.5h-2zM359 114h2v2.5h-2zM359 116.5h2v3h-2zM359 119.5h2v2.5h-2zM359 122h2v2.5h-2zM361 111.5h2v2.5h-2zM361 114h2v2.5h-2zM363 111.5h2v2.5h-2zM363 114h2v2.5h-2zM363 116.5h2v3h-2zM363 119.5h2v2.5h-2zM365 106.5h2v2.5h-2zM365 109h2v2.5h-2zM365 111.5h2v2.5h-2zM365 116.5h2v3h-2zM367 104h2v2.5h-2zM367 106.5h2v2.5h-2zM367 116.5h2v3h-2zM367 119.5h2v2.5h-2zM367 122h2v2.5h-2zM369 104h2v2.5h-2zM369 109h2v2.5h-2zM371 106.5h2v2.5h-2zM371 109h2v2.5h-2zM371 111.5h2v2.5h-2zM371 114h2v2.5h-2zM371 119.5h2v2.5h-2zM373 111.5h2v2.5h-2zM375 106.5h2v2.5h-2zM375 109h2v2.5h-2zM375 111.5h2v2.5h-2zM375 114h2v2.5h-2zM375 119.5h2v2.5h-2zM375 122h2v2.5h-2zM375 124.5h2v2.5h-2zM377 109h2v2.5h-2zM377 116.5h2v3h-2zM377 119.5h2v2.5h-2zM379 111.5h2v2.5h-2zM381 109h2v2.5h-2zM385 106.5h2v2.5h-2zM385 111.5h2v2.5h-2zM387 111.5h2v2.5h-2zM389 111.5h2v2.5h-2zM403 99h2v2.5h-2zM403 101.5h2v2.5h-2zM403 106.5h2v2.5h-2zM403 109h2v2.5h-2zM403 114h2v2.5h-2zM403 116.5h2v3h-2zM403 119.5h2v2.5h-2zM405 89.5h2v2.5h-2zM405 94.5h2v2h-2zM425 101.5h2v2.5h-2zM425 111.5h2v2.5h-2zM425 114h2v2.5h-2zM425 116.5h2v3h-2zM425 119.5h2v2.5h-2z"/>
<path fill="#80ff00" d="M213 122h2v2.5h-2zM215 116.5h2v3h-2zM217 106.5h2v2.5h-2zM219 101.5h2v2.5h-2zM219 104h2v2.5h-2zM223 94.5h2v2h-2zM223 96.5h2v2.5h-2zM223 101.5h2v2.5h-2zM223 104h2v2.5h-2zM225 89.5h2v2.5h-2zM225 101.5h2v2.5h-2zM225 104h2v2.5h-2zM227 89.5h2v2.5h-2zM227 92h2v2.5h-2zM227 94.5h2v2h-2zM227 96.5h2v2.5h-2zM229 72h2v2h-2zM229 74h2v2.5h-2zM229 78.5h2v2h-2zM229 80.5h2v2.5h-2zM297 101.5h2v2.5h-2zM301 104h2v2.5h-2zM301 106.5h2v2.5h-2zM301 109h2v2.5h-2zM361 104h2v2.5h-2zM361 106.5h2v2.5h-2zM361 109h2v2.5h-2zM367 109h2v2.5h-2zM367 111.5h2v2.5h-2zM367 114h2v2.5h-2zM375 116.5h2v3h-2zM377 111.5h2v2.5h-2zM377 114h2v2.5h-2zM403 104h2v2.5h-2zM403 111.5h2v2.5h-2zM405 92h2v2.5h-2zM405 96.5h2v2.5h-2zM405 116.5h2v3h-2zM405 122h2v2.5h-2z"/>
<path fill="#aaff00" d="M213 106.5h2v2.5h-2zM213 109h2v2.5h-2zM213 114h2v2.5h-2zM213 116.5h2v3h-2zM213 119.5h2v2.5h-2zM215 106.5h2v2.5h-2zM215 109h2v2.5h-2zM215 114h2v2.5h-2zM217 104h2v2.5h-2zM217 109h2v2.5h-2zM219 99h2v2.5h-2zM219 106.5h2v2.5h-2zM221 99h2v2.5h-2zM221 101.5h2v2.5h-2zM221 106.5h2v2.5h-2zM223 89.5h2v2.5h-2zM223 92h2v2.5h-2zM223 99h2v2.5h-2zM225 85h2v2.5h-2zM225 87.5h2v2h-2zM225 96.5h2v2.5h-2zM225 99h2v2.5h-2zM227 70h2v2h-2zM227 72h2v2h-2zM227 74h2v2.5h-2zM227 76.5h2v2h-2zM227 85h2v2.5h-2zM227 87.5h2v2h-2zM405 114h2v2.5h-2zM405 119.5h2v2.5h-2z"/>
<path fill="#d5ff00" d="M213 104h2v2.5h-2zM215 101.5h2v2.5h-2zM215 104h2v2.5h-2zM215 111.5h2v2.5h-2zM217 99h2v2.5h-2zM217 101.5h2v2.5h-2zM219 94.5h2v2h-2zM219 96.5h2v2.5h-2zM221 94.5h2v2h-2zM221 96.5h2v2.5h-2zM221 104h2v2.5h-2zM225 78.5h2v2h-2zM225 80.5h2v2.5h-2zM225 83h2v2h-2zM225 92h2v2.5h-2zM225 94.5h2v2h-2zM227 78.5h2v2h-2zM227 80.5h2v2.5h-2zM227 83h2v2h-2z"/>
<path fill="#ffff00" d="M213 96.5h2v2.5h-2zM213 99h2v2.5h-2zM213 101.5h2v2.5h-2zM213 111.5h2v2.5h-2zM215 92h2v2.5h-2zM215 96.5h2v2.5h-2zM215 99h2v2.5h-2zM217 94.5h2v2h-2zM217 96.5h2v2.5h-2zM219 89.5h2v2.5h-2zM219 92h2v2.5h-2zM221 92h2v2.5h-2zM223 85h2v2.5h-2zM223 87.5h2v2h-2zM225 70h2v2h-2zM225 72h2v2h-2zM225 74h2v2.5h-2zM225 76.5h2v2h-2zM405 111.5h2v2.5h-2z"/>
<path fill="#ffd400" d="M213 92h2v2.5h-2zM213 94.5h2v2h-2zM215 85h2v2.5h-2zM215 87.5h2v2h-2zM215 94.5h2v2h-2zM217 85h2v2.5h-2zM217 87.5h2v2h-2zM217 89.5h2v2.5h-2zM217 92h2v2.5h-2zM219 80.5h2v2.5h-2zM219 83h2v2h-2zM219 85h2v2.5h-2zM219 87.5h2v2h-2zM221 85h2v2.5h-2zM221 87.5h2v2h-2zM221 89.5h2v2.5h-2zM223 80.5h2v2.5h-2zM223 83h2v2h-2zM405 99h2v2.5h-2zM405 101.5h2v2.5h-2zM405 104h2v2.5h-2zM405 106.5h2v2.5h-2zM405 109h2v2.5h-2z"/>
<path fill="#ffaa00" d="M215 83h2v2h-2zM215 89.5h2v2.5h-2zM217 80.5h2v2.5h-2zM217 83h2v2h-2zM219 76.5h2v2h-2zM219 78.5h2v2h-2zM221 76.5h2v2h-2zM221 80.5h2v2.5h-2zM221 83h2v2h-2zM223 70h2v2h-2zM223 74h2v2.5h-2zM223 76.5h2v2h-2zM223 78.5h2v2h-2z"/>
<path fill="#ff8000" d="M213 80.5h2v2.5h-2zM213 85h2v2.5h-2zM213 87.5h2v2h-2zM213 89.5h2v2.5h-2zM215 70h2v2h-2zM215 72h2v2h-2zM215 74h2v2.5h-2zM215 76.5h2v2h-2zM215 78.5h2v2h-2zM215 80.5h2v2.5h-2zM217 70h2v2h-2zM217 72h2v2h-2zM217 74h2v2.5h-2zM217 76.5h2v2h-2zM217 78.5h2v2h-2zM219 70h2v2h-2zM219 72h2v2h-2zM219 74h2v2.5h-2zM221 70h2v2h-2zM221 72h2v2h-2zM221 74h2v2.5h-2zM221 78.5h2v2h-2zM223 72h2v2h-2z"/>
<path fill="#ff5500" d="M213 70h2v2h-2zM213 72h2v2h-2zM213 74h2v2.5h-2zM213 76.5h2v2h-2zM213 78.5h2v2h-2zM213 83h2v2h-2z"/>
<rect x="407" y="70" width="1" height="150" fill="#000"/>
<rect x="427" y="70" width="2" height="150" fill="#000"/>
</g>
<g shape-rendering="crispEdges">
<rect x="221" y="256" width="1" height="17" fill="#97ff00"/>
<rect x="222" y="256" width="1" height="17" fill="#94ff00"/>
<rect x="223" y="256" width="1" height="17" fill="#91ff00"/>
<rect x="224" y="256" width="1" height="17" fill="#8dff00"/>
<rect x="225" y="256" width="1" height="17" fill="#8aff00"/>
<rect x="226" y="256" width="1" height="17" fill="#87ff00"/>
<rect x="227" y="256" width="1" height="17" fill="#83ff00"/>
<rect x="228" y="256" width="1" height="17" fill="#80ff00"/>
<rect x="229" y="256" width="1" height="17" fill="#7dff00"/>
<rect x="230" y="256" width="1" height="17" fill="#79ff00"/>
<rect x="231" y="256" width="1" height="17" fill="#76ff00"/>
<rect x="232" y="256" width="1" height="17" fill="#73ff00"/>
<rect x="233" y="256" width="1" height="17" fill="#68ff00"/>
<rect x="234" y="256" width="1" height="17" fill="#5eff00"/>
<rect x="235" y="256" width="1" height="17" fill="#54ff00"/>
<rect x="236" y="256" width="1" height="17" fill="#4aff00"/>
<rect x="237" y="256" width="1" height="17" fill="#3fff00"/>
<rect x="238" y="256" width="1" height="17" fill="#35ff00"/>
<rect x="239" y="256" width="1" height="17" fill="#2bff00"/>
<rect x="240" y="256" width="1" height="17" fill="#20ff00"/>
<rect x="241" y="256" width="1" height="17" fill="#16ff00"/>
<rect x="242" y="256" width="1" height="17" fill="#0cff00"/>
<rect x="243" y="256" width="1" height="17" fill="#02ff00"/>
<rect x="244" y="256" width="1" height="17" fill="#00ff09"/>
<rect x="245" y="256" width="1" height="17" fill="#00ff13"/>
<rect x="246" y="256" width="1" height="17" fill="#00ff1d"/>
<rect x="247" y="256" width="1" height="17" fill="#00ff27"/>
<rect x="248" y="256" width="160" height="17" fill="#00ff2d"/>
<rect x="408" y="256" width="1" height="17" fill="#00ff1f"/>
<rect x="409" y="256" width="1" height="17" fill="#00ff04"/>
<rect x="410" y="256" width="1" height="17" fill="#17ff00"/>
<rect x="411" y="256" width="1" height="17" fill="#5bff00"/>
<rect x="412" y="256" width="1" height="17" fill="#9fff00"/>
<rect x="413" y="256" width="1" height="17" fill="#e3ff00"/>
<rect x="414" y="256" width="1" height="17" fill="#ffdf00"/>
<rect x="415" y="256" width="1" height="17" fill="#ffa200"/>
<rect x="416" y="256" width="3" height="17" fill="#ff6600"/>
<rect x="419" y="256" width="1" height="17" fill="#ff9300"/>
<rect x="420" y="256" width="1" height="17" fill="#ffc100"/>
<rect x="421" y="256" width="1" height="17" fill="#fff900"/>
<rect x="422" y="256" width="1" height="17" fill="#ccff00"/>
<rect x="423" y="256" width="1" height="17" fill="#8dff00"/>
<rect x="424" y="256" width="1" height="17" fill="#4eff00"/>
<rect x="425" y="256" width="1" height="17" fill="#1cff00"/>
<rect x="426" y="256" width="8" height="17" fill="#0aff00"/>
<rect x="434" y="256" width="1" height="17" fill="#32ff00"/>
<rect x="435" y="256" width="1" height="17" fill="#88ff00"/>
<rect x="436" y="256" width="1" height="17" fill="#e3ff00"/>
<rect x="437" y="256" width="1" height="17" fill="#ffcc00"/>
<rect x="438" y="256" width="1" height="17" fill="#ff8800"/>
<rect x="439" y="256" width="2" height="17" fill="#ff6600"/>
<rect x="441" y="256" width="1" height="17" fill="#ff8800"/>
<rect x="442" y="256" width="1" height="17" fill="#ffcc00"/>
<rect x="443" y="256" width="1" height="17" fill="#e3ff00"/>
<rect x="444" y="256" width="1" height="17" fill="#88ff00"/>
<rect x="445" y="256" width="1" height="17" fill="#39ff00"/>
<rect x="446" y="256" width="1" height="17" fill="#00ff0b"/>
<rect x="447" y="256" width="10" height="17" fill="#00ff2d"/>
<rect x="221" y="273" width="1" height="17" fill="#7dff00"/>
<rect x="222" y="273" width="1" height="17" fill="#79ff00"/>
<rect x="223" y="273" width="1" height="17" fill="#74ff00"/>
<rect x="224" y="273" width="1" height="17" fill="#70ff00"/>
<rect x="225" y="273" width="1" height="17" fill="#6cff00"/>
<rect x="226" y="273" width="1" height="17" fill="#67ff00"/>
<rect x="227" y="273" width="1" height="17" fill="#63ff00"/>
<rect x="228" y="273" width="1" height="17" fill="#5eff00"/>
<rect x="229" y="273" width="1" height="17" fill="#5aff00"/>
<rect x="230" y="273" width="1" height="17" fill="#55ff00"/>
<rect x="231" y="273" width="1" height="17" fill="#51ff00"/>
<rect x="232" y="273" width="1" height="17" fill="#4cff00"/>
<rect x="233" y="273" width="1" height="17" fill="#48ff00"/>
<rect x="234" y="273" width="1" height="17" fill="#44ff00"/>
<rect x="235" y="273" width="1" height="17" fill="#40ff00"/>
<rect x="236" y="273" width="1" height="17" fill="#3cff00"/>
<rect x="237" y="273" width="1" height="17" fill="#38ff00"/>
<rect x="238" y="273" width="1" height="17" fill="#34ff00"/>
<rect x="239" y="273" width="1" height="17" fill="#30ff00"/>
<rect x="240" y="273" width="1" height="17" fill="#2cff00"/>
<rect x="241" y="273" width="1" height="17" fill="#27ff00"/>
<rect x="242" y="273" width="1" height="17" fill="#23ff00"/>
<rect x="243" y="273" width="1" height="17" fill="#1fff00"/>
<rect x="244" y="273" width="1" height="17" fill="#1bff00"/>
<rect x="245" y="273" width="1" height="17" fill="#17ff00"/>
<rect x="246" y="273" width="1" height="17" fill="#13ff00"/>
<rect x="247" y="273" width="1" height="17" fill="#0fff00"/>
<rect x="248" y="273" width="160" height="17" fill="#0dff00"/>
<rect x="408" y="273" width="1" height="17" fill="#18ff00"/>
<rect x="409" y="273" width="1" height="17" fill="#2fff00"/>
<rect x="410" y="273" width="1" height="17" fill="#46ff00"/>
<rect x="411" y="273" width="1" height="17" fill="#80ff00"/>
<rect x="412" y="273" width="1" height="17" fill="#b9ff00"/>
<rect x="413" y="273" width="1" height="17" fill="#f2ff00"/>
<rect x="414" y="273" width="1" height="17" fill="#ffd900"/>
<rect x="415" y="273" width="1" height="17" fill="#ffa600"/>
<rect x="416" y="273" width="3" height="17" fill="#ff7300"/>
<rect x="419" y="273" width="1" height="17" fill="#ff9900"/>
<rect x="420" y="273" width="1" height="17" fill="#ffbf00"/>
<rect x="421" y="273" width="1" height="17" fill="#ffef00"/>
<rect x="422" y="273" width="1" height="17" fill="#dfff00"/>
<rect x="423" y="273" width="1" height="17" fill="#aaff00"/>
<rect x="424" y="273" width="1" height="17" fill="#74ff00"/>
<rect x="425" y="273" width="1" height="17" fill="#4aff00"/>
<rect x="426" y="273" width="8" height="17" fill="#3bff00"/>
<rect x="434" y="273" width="1" height="17" fill="#5dff00"/>
<rect x="435" y="273" width="1" height="17" fill="#a6ff00"/>
<rect x="436" y="273" width="1" height="17" fill="#f2ff00"/>
<rect x="437" y="273" width="1" height="17" fill="#ffc900"/>
<rect x="438" y="273" width="1" height="17" fill="#ff8f00"/>
<rect x="439" y="273" width="2" height="17" fill="#ff7300"/>
<rect x="441" y="273" width="1" height="17" fill="#ff8f00"/>
<rect x="442" y="273" width="1" height="17" fill="#ffc900"/>
<rect x="443" y="273" width="1" height="17" fill="#f2ff00"/>
<rect x="444" y="273" width="1" height="17" fill="#a6ff00"/>
<rect x="445" y="273" width="1" height="17" fill="#63ff00"/>
<rect x="446" y="273" width="1" height="17" fill="#29ff00"/>
<rect x="447" y="273" width="10" height="17" fill="#0dff00"/>
<rect x="221" y="290" width="1" height="18" fill="#32ff00"/>
<rect x="222" y="290" width="1" height="18" fill="#31ff00"/>
<rect x="223" y="290" width="1" height="18" fill="#30ff00"/>
<rect x="224" y="290" width="1" height="18" fill="#2fff00"/>
<rect x="225" y="290" width="1" height="18" fill="#2eff00"/>
<rect x="226" y="290" width="1" height="18" fill="#2dff00"/>
<rect x="227" y="290" width="1" height="18" fill="#2cff00"/>
<rect x="228" y="290" width="1" height="18" fill="#2bff00"/>
<rect x="229" y="290" width="1" height="18" fill="#2aff00"/>
<rect x="230" y="290" width="1" height="18" fill="#28ff00"/>
<rect x="231" y="290" width="1" height="18" fill="#27ff00"/>
<rect x="232" y="290" width="1" height="18" fill="#26ff00"/>
<rect x="233" y="290" width="2" height="18" fill="#25ff00"/>
<rect x="235" y="290" width="1" height="18" fill="#24ff00"/>
<rect x="236" y="290" width="1" height="18" fill="#23ff00"/>
<rect x="237" y="290" width="1" height="18" fill="#22ff00"/>
<rect x="238" y="290" width="1" height="18" fill="#21ff00"/>
<rect x="239" y="290" width="2" height="18" fill="#20ff00"/>
<rect x="241" y="290" width="1" height="18" fill="#1fff00"/>
<rect x="242" y="290" width="1" height="18" fill="#1eff00"/>
<rect x="243" y="290" width="1" height="18" fill="#1dff00"/>
<rect x="244" y="290" width="2" height="18" fill="#1cff00"/>
<rect x="246" y="290" width="1" height="18" fill="#1bff00"/>
<rect x="247" y="290" width="161" height="18" fill="#1aff00"/>
<rect x="408" y="290" width="1" height="18" fill="#20ff00"/>
<rect x="409" y="290" width="1" height="18" fill="#2eff00"/>
<rect x="410" y="290" width="1" height="18" fill="#3cff00"/>
<rect x="411" y="290" width="1" height="18" fill="#5eff00"/>
<rect x="412" y="290" width="1" height="18" fill="#81ff00"/>
<rect x="413" y="290" width="1" height="18" fill="#a3ff00"/>
<rect x="414" y="290" width="1" height="18" fill="#c2ff00"/>
<rect x="415" y="290" width="1" height="18" fill="#e0ff00"/>
<rect x="416" y="290" width="3" height="18" fill="#ffff00"/>
<rect x="419" y="290" width="1" height="18" fill="#e8ff00"/>
<rect x="420" y="290" width="1" height="18" fill="#d1ff00"/>
<rect x="421" y="290" width="1" height="18" fill="#b4ff00"/>
<rect x="422" y="290" width="1" height="18" fill="#98ff00"/>
<rect x="423" y="290" width="1" height="18" fill="#78ff00"/>
<rect x="424" y="290" width="1" height="18" fill="#57ff00"/>
<rect x="425" y="290" width="1" height="18" fill="#3eff00"/>
<rect x="426" y="290" width="8" height="18" fill="#35ff00"/>
<rect x="434" y="290" width="1" height="18" fill="#4aff00"/>
<rect x="435" y="290" width="1" height="18" fill="#75ff00"/>
<rect x="436" y="290" width="1" height="18" fill="#a3ff00"/>
<rect x="437" y="290" width="1" height="18" fill="#cbff00"/>
<rect x="438" y="290" width="1" height="18" fill="#eeff00"/>
<rect x="439" y="290" width="2" height="18" fill="#ffff00"/>
<rect x="441" y="290" width="1" height="18" fill="#eeff00"/>
<rect x="442" y="290" width="1" height="18" fill="#cbff00"/>
<rect x="443" y="290" width="1" height="18" fill="#a3ff00"/>
<rect x="444" y="290" width="1" height="18" fill="#75ff00"/>
<rect x="445" y="290" width="1" height="18" fill="#4dff00"/>
<rect x="446" y="290" width="1" height="18" fill="#2bff00"/>
<rect x="447" y="290" width="10" height="18" fill="#1aff00"/>
<rect x="221" y="308" width="1" height="18" fill="#00ff34"/>
<rect x="222" y="308" width="1" height="18" fill="#00ff36"/>
<rect x="223" y="308" width="1" height="18" fill="#00ff39"/>
<rect x="224" y="308" width="1" height="18" fill="#00ff3b"/>
<rect x="225" y="308" width="1" height="18" fill="#00ff3d"/>
<rect x="226" y="308" width="1" height="18" fill="#00ff3f"/>
<rect x="227" y="308" width="1" height="18" fill="#00ff41"/>
<rect x="228" y="308" width="1" height="18" fill="#00ff44"/>
<rect x="229" y="308" width="1" height="18" fill="#00ff46"/>
<rect x="230" y="308" width="1" height="18" fill="#00ff48"/>
<rect x="231" y="308" width="1" height="18" fill="#00ff4a"/>
<rect x="232" y="308" width="1" height="18" fill="#00ff4c"/>
<rect x="233" y="308" width="1" height="18" fill="#00ff47"/>
<rect x="234" y="308" width="1" height="18" fill="#00ff41"/>
<rect x="235" y="308" width="1" height="18" fill="#00ff3b"/>
<rect x="236" y="308" width="1" height="18" fill="#00ff35"/>
<rect x="237" y="308" width="1" height="18" fill="#00ff30"/>
<rect x="238" y="308" width="1" height="18" fill="#00ff2a"/>
<rect x="239" y="308" width="1" height="18" fill="#00ff24"/>
<rect x="240" y="308" width="1" height="18" fill="#00ff1e"/>
<rect x="241" y="308" width="1" height="18" fill="#00ff19"/>
<rect x="242" y="308" width="1" height="18" fill="#00ff13"/>
<rect x="243" y="308" width="1" height="18" fill="#00ff0d"/>
<rect x="244" y="308" width="1" height="18" fill="#00ff07"/>
<rect x="245" y="308" width="1" height="18" fill="#00ff02"/>
<rect x="246" y="308" width="1" height="18" fill="#04ff00"/>
<rect x="247" y="308" width="1" height="18" fill="#0aff00"/>
<rect x="248" y="308" width="160" height="18" fill="#0dff00"/>
<rect x="408" y="308" width="1" height="18" fill="#0fff00"/>
<rect x="409" y="308" width="1" height="18" fill="#15ff00"/>
<rect x="410" y="308" width="1" height="18" fill="#1aff00"/>
<rect x="411" y="308" width="1" height="18" fill="#28ff00"/>
<rect x="412" y="308" width="1" height="18" fill="#35ff00"/>
<rect x="413" y="308" width="1" height="18" fill="#42ff00"/>
<rect x="414" y="308" width="1" height="18" fill="#4eff00"/>
<rect x="415" y="308" width="1" height="18" fill="#5aff00"/>
<rect x="416" y="308" width="3" height="18" fill="#66ff00"/>
<rect x="419" y="308" width="1" height="18" fill="#5dff00"/>
<rect x="420" y="308" width="1" height="18" fill="#54ff00"/>
<rect x="421" y="308" width="1" height="18" fill="#49ff00"/>
<rect x="422" y="308" width="1" height="18" fill="#3eff00"/>
<rect x="423" y="308" width="1" height="18" fill="#31ff00"/>
<rect x="424" y="308" width="1" height="18" fill="#25ff00"/>
<rect x="425" y="308" width="1" height="18" fill="#1bff00"/>
<rect x="426" y="308" width="8" height="18" fill="#17ff00"/>
<rect x="434" y="308" width="1" height="18" fill="#1fff00"/>
<rect x="435" y="308" width="1" height="18" fill="#30ff00"/>
<rect x="436" y="308" width="1" height="18" fill="#42ff00"/>
<rect x="437" y="308" width="1" height="18" fill="#52ff00"/>
<rect x="438" y="308" width="1" height="18" fill="#5fff00"/>
<rect x="439" y="308" width="2" height="18" fill="#66ff00"/>
<rect x="441" y="308" width="1" height="18" fill="#5fff00"/>
<rect x="442" y="308" width="1" height="18" fill="#52ff00"/>
<rect x="443" y="308" width="1" height="18" fill="#42ff00"/>
<rect x="444" y="308" width="1" height="18" fill="#30ff00"/>
<rect x="445" y="308" width="1" height="18" fill="#21ff00"/>
<rect x="446" y="308" width="1" height="18" fill="#13ff00"/>
<rect x="447" y="308" width="10" height="18" fill="#0dff00"/>
<rect x="221" y="326" width="1" height="17" fill="#00ffa1"/>
<rect x="222" y="326" width="1" height="17" fill="#00ffa4"/>
<rect x="223" y="326" width="1" height="17" fill="#00ffa6"/>
<rect x="224" y="326" width="1" height="17" fill="#00ffa9"/>
<rect x="225" y="326" width="1" height="17" fill="#00ffac"/>
<rect x="226" y="326" width="1" height="17" fill="#00ffaf"/>
<rect x="227" y="326" width="1" height="17" fill="#00ffb1"/>
<rect x="228" y="326" width="1" height="17" fill="#00ffb4"/>
<rect x="229" y="326" width="1" height="17" fill="#00ffb7"/>
<rect x="230" y="326" width="1" height="17" fill="#00ffba"/>
<rect x="231" y="326" width="1" height="17" fill="#00ffbc"/>
<rect x="232" y="326" width="1" height="17" fill="#00ffbf"/>
<rect x="233" y="326" width="1" height="17" fill="#00ffb3"/>
<rect x="234" y="326" width="1" height="17" fill="#00ffa6"/>
<rect x="235" y="326" width="1" height="17" fill="#00ff99"/>
<rect x="236" y="326" width="1" height="17" fill="#00ff8c"/>
<rect x="237" y="326" width="1" height="17" fill="#00ff80"/>
<rect x="238" y="326" width="1" height="17" fill="#00ff73"/>
<rect x="239" y="326" width="1" height="17" fill="#00ff66"/>
<rect x="240" y="326" width="1" height="17" fill="#00ff59"/>
<rect x="241" y="326" width="1" height="17" fill="#00ff4c"/>
<rect x="242" y="326" width="1" height="17" fill="#00ff40"/>
<rect x="243" y="326" width="1" height="17" fill="#00ff33"/>
<rect x="244" y="326" width="1" height="17" fill="#00ff26"/>
<rect x="245" y="326" width="1" height="17" fill="#00ff1a"/>
<rect x="246" y="326" width="1" height="17" fill="#00ff0d"/>
<rect x="247" y="326" width="1" height="17" fill="#00ff00"/>
<rect x="248" y="326" width="160" height="17" fill="#06ff00"/>
<rect x="408" y="326" width="1" height="17" fill="#05ff00"/>
<rect x="409" y="326" width="1" height="17" fill="#04ff00"/>
<rect x="410" y="326" width="1" height="17" fill="#02ff00"/>
<rect x="411" y="326" width="1" height="17" fill="#00ff03"/>
<rect x="412" y="326" width="1" height="17" fill="#00ff08"/>
<rect x="413" y="326" width="1" height="17" fill="#00ff0d"/>
<rect x="414" y="326" width="1" height="17" fill="#00ff11"/>
<rect x="415" y="326" width="1" height="17" fill="#00ff15"/>
<rect x="416" y="326" width="3" height="17" fill="#00ff1a"/>
<rect x="419" y="326" width="1" height="17" fill="#00ff16"/>
<rect x="420" y="326" width="1" height="17" fill="#00ff13"/>
<rect x="421" y="326" width="1" height="17" fill="#00ff0f"/>
<rect x="422" y="326" width="1" height="17" fill="#00ff0b"/>
<rect x="423" y="326" width="1" height="17" fill="#00ff07"/>
<rect x="424" y="326" width="1" height="17" fill="#00ff02"/>
<rect x="425" y="326" width="1" height="17" fill="#01ff00"/>
<rect x="426" y="326" width="8" height="17" fill="#03ff00"/>
<rect x="434" y="326" width="1" height="17" fill="#00ff00"/>
<rect x="435" y="326" width="1" height="17" fill="#00ff06"/>
<rect x="436" y="326" width="1" height="17" fill="#00ff0d"/>
<rect x="437" y="326" width="1" height="17" fill="#00ff12"/>
<rect x="438" y="326" width="1" height="17" fill="#00ff17"/>
<rect x="439" y="326" width="2" height="17" fill="#00ff1a"/>
<rect x="441" y="326" width="1" height="17" fill="#00ff17"/>
<rect x="442" y="326" width="1" height="17" fill="#00ff12"/>
<rect x="443" y="326" width="1" height="17" fill="#00ff0d"/>
<rect x="444" y="326" width="1" height="17" fill="#00ff06"/>
<rect x="445" y="326" width="1" height="17" fill="#00ff01"/>
<rect x="446" y="326" width="1" height="17" fill="#04ff00"/>
<rect x="447" y="326" width="10" height="17" fill="#06ff00"/>
<rect x="221" y="343" width="1" height="18" fill="#00e7ff"/>
<rect x="222" y="343" width="1" height="18" fill="#00e9ff"/>
<rect x="223" y="343" width="1" height="18" fill="#00ebff"/>
<rect x="224" y="343" width="1" height="18" fill="#00edff"/>
<rect x="225" y="343" width="1" height="18" fill="#00efff"/>
<rect x="226" y="343" width="1" height="18" fill="#00f2ff"/>
<rect x="227" y="343" width="1" height="18" fill="#00f4ff"/>
<rect x="228" y="343" width="1" height="18" fill="#00f6ff"/>
<rect x="229" y="343" width="1" height="18" fill="#00f8ff"/>
<rect x="230" y="343" width="1" height="18" fill="#00fbff"/>
<rect x="231" y="343" width="1" height="18" fill="#00fdff"/>
<rect x="232" y="343" width="1" height="18" fill="#00ffff"/>
<rect x="233" y="343" width="1" height="18" fill="#00ffef"/>
<rect x="234" y="343" width="1" height="18" fill="#00ffe0"/>
<rect x="235" y="343" width="1" height="18" fill="#00ffd0"/>
<rect x="236" y="343" width="1" height="18" fill="#00ffc0"/>
<rect x="237" y="343" width="1" height="18" fill="#00ffb1"/>
<rect x="238" y="343" width="1" height="18" fill="#00ffa1"/>
<rect x="239" y="343" width="1" height="18" fill="#00ff92"/>
<rect x="240" y="343" width="1" height="18" fill="#00ff82"/>
<rect x="241" y="343" width="1" height="18" fill="#00ff72"/>
<rect x="242" y="343" width="1" height="18" fill="#00ff63"/>
<rect x="243" y="343" width="1" height="18" fill="#00ff53"/>
<rect x="244" y="343" width="1" height="18" fill="#00ff43"/>
<rect x="245" y="343" width="1" height="18" fill="#00ff34"/>
<rect x="246" y="343" width="1" height="18" fill="#00ff24"/>
<rect x="247" y="343" width="1" height="18" fill="#00ff15"/>
<rect x="248" y="343" width="160" height="18" fill="#00ff0d"/>
<rect x="408" y="343" width="1" height="18" fill="#00ff12"/>
<rect x="409" y="343" width="1" height="18" fill="#00ff1d"/>
<rect x="410" y="343" width="1" height="18" fill="#00ff28"/>
<rect x="411" y="343" width="1" height="18" fill="#00ff42"/>
<rect x="412" y="343" width="1" height="18" fill="#00ff5d"/>
<rect x="413" y="343" width="1" height="18" fill="#00ff78"/>
<rect x="414" y="343" width="1" height="18" fill="#00ff90"/>
<rect x="415" y="343" width="1" height="18" fill="#00ffa7"/>
<rect x="416" y="343" width="3" height="18" fill="#00ffbf"/>
<rect x="419" y="343" width="1" height="18" fill="#00ffad"/>
<rect x="420" y="343" width="1" height="18" fill="#00ff9c"/>
<rect x="421" y="343" width="1" height="18" fill="#00ff85"/>
<rect x="422" y="343" width="1" height="18" fill="#00ff6f"/>
<rect x="423" y="343" width="1" height="18" fill="#00ff56"/>
<rect x="424" y="343" width="1" height="18" fill="#00ff3d"/>
<rect x="425" y="343" width="1" height="18" fill="#00ff29"/>
<rect x="426" y="343" width="8" height="18" fill="#00ff22"/>
<rect x="434" y="343" width="1" height="18" fill="#00ff32"/>
<rect x="435" y="343" width="1" height="18" fill="#00ff54"/>
<rect x="436" y="343" width="1" height="18" fill="#00ff78"/>
<rect x="437" y="343" width="1" height="18" fill="#00ff97"/>
<rect x="438" y="343" width="1" height="18" fill="#00ffb2"/>
<rect x="439" y="343" width="2" height="18" fill="#00ffbf"/>
<rect x="441" y="343" width="1" height="18" fill="#00ffb2"/>
<rect x="442" y="343" width="1" height="18" fill="#00ff97"/>
<rect x="443" y="343" width="1" height="18" fill="#00ff78"/>
<rect x="444" y="343" width="1" height="18" fill="#00ff54"/>
<rect x="445" y="343" width="1" height="18" fill="#00ff35"/>
<rect x="446" y="343" width="1" height="18" fill="#00ff1a"/>
<rect x="447" y="343" width="10" height="18" fill="#00ff0d"/>
<rect x="221" y="361" width="1" height="17" fill="#0082ff"/>
<rect x="222" y="361" width="1" height="17" fill="#0088ff"/>
<rect x="223" y="361" width="1" height="17" fill="#008dff"/>
<rect x="224" y="361" width="1" height="17" fill="#0093ff"/>
<rect x="225" y="361" width="1" height="17" fill="#0098ff"/>
<rect x="226" y="361" width="1" height="17" fill="#009eff"/>
<rect x="227" y="361" width="1" height="17" fill="#00a4ff"/>
<rect x="228" y="361" width="1" height="17" fill="#00a9ff"/>
<rect x="229" y="361" width="1" height="17" fill="#00afff"/>
<rect x="230" y="361" width="1" height="17" fill="#00b4ff"/>
<rect x="231" y="361" width="1" height="17" fill="#00baff"/>
<rect x="232" y="361" width="1" height="17" fill="#00bfff"/>
<rect x="233" y="361" width="1" height="17" fill="#00cfff"/>
<rect x="234" y="361" width="1" height="17" fill="#00dfff"/>
<rect x="235" y="361" width="1" height="17" fill="#00eeff"/>
<rect x="236" y="361" width="1" height="17" fill="#00feff"/>
<rect x="237" y="361" width="1" height="17" fill="#00fff1"/>
<rect x="238" y="361" width="1" height="17" fill="#00ffe1"/>
<rect x="239" y="361" width="1" height="17" fill="#00ffd1"/>
<rect x="240" y="361" width="1" height="17" fill="#00ffc2"/>
<rect x="241" y="361" width="1" height="17" fill="#00ffb2"/>
<rect x="242" y="361" width="1" height="17" fill="#00ffa2"/>
<rect x="243" y="361" width="1" height="17" fill="#00ff93"/>
<rect x="244" y="361" width="1" height="17" fill="#00ff83"/>
<rect x="245" y="361" width="1" height="17" fill="#00ff74"/>
<rect x="246" y="361" width="1" height="17" fill="#00ff64"/>
<rect x="247" y="361" width="1" height="17" fill="#00ff54"/>
<rect x="248" y="361" width="160" height="17" fill="#00ff4c"/>
<rect x="408" y="361" width="1" height="17" fill="#00ff56"/>
<rect x="409" y="361" width="1" height="17" fill="#00ff68"/>
<rect x="410" y="361" width="1" height="17" fill="#00ff7a"/>
<rect x="411" y="361" width="1" height="17" fill="#00ffa8"/>
<rect x="412" y="361" width="1" height="17" fill="#00ffd6"/>
<rect x="413" y="361" width="1" height="17" fill="#00faff"/>
<rect x="414" y="361" width="1" height="17" fill="#00d1ff"/>
<rect x="415" y="361" width="1" height="17" fill="#00a8ff"/>
<rect x="416" y="361" width="3" height="17" fill="#0080ff"/>
<rect x="419" y="361" width="1" height="17" fill="#009eff"/>
<rect x="420" y="361" width="1" height="17" fill="#00bdff"/>
<rect x="421" y="361" width="1" height="17" fill="#00e3ff"/>
<rect x="422" y="361" width="1" height="17" fill="#00fff5"/>
<rect x="423" y="361" width="1" height="17" fill="#00ffca"/>
<rect x="424" y="361" width="1" height="17" fill="#00ff9f"/>
<rect x="425" y="361" width="1" height="17" fill="#00ff7d"/>
<rect x="426" y="361" width="8" height="17" fill="#00ff71"/>
<rect x="434" y="361" width="1" height="17" fill="#00ff8d"/>
<rect x="435" y="361" width="1" height="17" fill="#00ffc7"/>
<rect x="436" y="361" width="1" height="17" fill="#00faff"/>
<rect x="437" y="361" width="1" height="17" fill="#00c4ff"/>
<rect x="438" y="361" width="1" height="17" fill="#0096ff"/>
<rect x="439" y="361" width="2" height="17" fill="#0080ff"/>
<rect x="441" y="361" width="1" height="17" fill="#0096ff"/>
<rect x="442" y="361" width="1" height="17" fill="#00c4ff"/>
<rect x="443" y="361" width="1" height="17" fill="#00faff"/>
<rect x="444" y="361" width="1" height="17" fill="#00ffc7"/>
<rect x="445" y="361" width="1" height="17" fill="#00ff91"/>
<rect x="446" y="361" width="1" height="17" fill="#00ff63"/>
<rect x="447" y="361" width="10" height="17" fill="#00ff4c"/>
<rect x="221" y="378" width="1" height="18" fill="#0036ff"/>
<rect x="222" y="378" width="1" height="18" fill="#003dff"/>
<rect x="223" y="378" width="1" height="18" fill="#0044ff"/>
<rect x="224" y="378" width="1" height="18" fill="#004aff"/>
<rect x="225" y="378" width="1" height="18" fill="#0051ff"/>
<rect x="226" y="378" width="1" height="18" fill="#0058ff"/>
<rect x="227" y="378" width="1" height="18" fill="#005eff"/>
<rect x="228" y="378" width="1" height="18" fill="#0065ff"/>
<rect x="229" y="378" width="1" height="18" fill="#006cff"/>
<rect x="230" y="378" width="1" height="18" fill="#0072ff"/>
<rect x="231" y="378" width="1" height="18" fill="#0079ff"/>
<rect x="232" y="378" width="1" height="18" fill="#0080ff"/>
<rect x="233" y="378" width="1" height="18" fill="#008fff"/>
<rect x="234" y="378" width="1" height="18" fill="#009fff"/>
<rect x="235" y="378" width="1" height="18" fill="#00aeff"/>
<rect x="236" y="378" width="1" height="18" fill="#00beff"/>
<rect x="237" y="378" width="1" height="18" fill="#00ceff"/>
<rect x="238" y="378" width="1" height="18" fill="#00ddff"/>
<rect x="239" y="378" width="1" height="18" fill="#00edff"/>
<rect x="240" y="378" width="1" height="18" fill="#00fdff"/>
<rect x="241" y="378" width="1" height="18" fill="#00fff2"/>
<rect x="242" y="378" width="1" height="18" fill="#00ffe2"/>
<rect x="243" y="378" width="1" height="18" fill="#00ffd3"/>
<rect x="244" y="378" width="1" height="18" fill="#00ffc3"/>
<rect x="245" y="378" width="1" height="18" fill="#00ffb3"/>
<rect x="246" y="378" width="1" height="18" fill="#00ffa4"/>
<rect x="247" y="378" width="1" height="18" fill="#00ff94"/>
<rect x="248" y="378" width="160" height="18" fill="#00ff8c"/>
<rect x="408" y="378" width="1" height="18" fill="#00ff98"/>
<rect x="409" y="378" width="1" height="18" fill="#00ffb0"/>
<rect x="410" y="378" width="1" height="18" fill="#00ffc8"/>
<rect x="411" y="378" width="1" height="18" fill="#00fbff"/>
<rect x="412" y="378" width="1" height="18" fill="#00c0ff"/>
<rect x="413" y="378" width="1" height="18" fill="#0085ff"/>
<rect x="414" y="378" width="1" height="18" fill="#0050ff"/>
<rect x="415" y="378" width="1" height="18" fill="#001bff"/>
<rect x="416" y="378" width="3" height="18" fill="#0d00ff"/>
<rect x="419" y="378" width="1" height="18" fill="#000eff"/>
<rect x="420" y="378" width="1" height="18" fill="#0036ff"/>
<rect x="421" y="378" width="1" height="18" fill="#0067ff"/>
<rect x="422" y="378" width="1" height="18" fill="#0098ff"/>
<rect x="423" y="378" width="1" height="18" fill="#00d0ff"/>
<rect x="424" y="378" width="1" height="18" fill="#00fff7"/>
<rect x="425" y="378" width="1" height="18" fill="#00ffcb"/>
<rect x="426" y="378" width="8" height="18" fill="#00ffbc"/>
<rect x="434" y="378" width="1" height="18" fill="#00ffdf"/>
<rect x="435" y="378" width="1" height="18" fill="#00d4ff"/>
<rect x="436" y="378" width="1" height="18" fill="#0085ff"/>
<rect x="437" y="378" width="1" height="18" fill="#003fff"/>
<rect x="438" y="378" width="1" height="18" fill="#0004ff"/>
<rect x="439" y="378" width="2" height="18" fill="#0d00ff"/>
<rect x="441" y="378" width="1" height="18" fill="#0004ff"/>
<rect x="442" y="378" width="1" height="18" fill="#003fff"/>
<rect x="443" y="378" width="1" height="18" fill="#0085ff"/>
<rect x="444" y="378" width="1" height="18" fill="#00d4ff"/>
<rect x="445" y="378" width="1" height="18" fill="#00ffe5"/>
<rect x="446" y="378" width="1" height="18" fill="#00ffaa"/>
<rect x="447" y="378" width="10" height="18" fill="#00ff8c"/>
<rect x="221" y="396" width="1" height="17" fill="#0044ff"/>
<rect x="222" y="396" width="1" height="17" fill="#004bff"/>
<rect x="223" y="396" width="1" height="17" fill="#0053ff"/>
<rect x="224" y="396" width="1" height="17" fill="#005bff"/>
<rect x="225" y="396" width="1" height="17" fill="#0063ff"/>
<rect x="226" y="396" width="1" height="17" fill="#006aff"/>
<rect x="227" y="396" width="1" height="17" fill="#0072ff"/>
<rect x="228" y="396" width="1" height="17" fill="#007aff"/>
<rect x="229" y="396" width="1" height="17" fill="#0082ff"/>
<rect x="230" y="396" width="1" height="17" fill="#0089ff"/>
<rect x="231" y="396" width="1" height="17" fill="#0091ff"/>
<rect x="232" y="396" width="1" height="17" fill="#0099ff"/>
<rect x="233" y="396" width="1" height="17" fill="#00a4ff"/>
<rect x="234" y="396" width="1" height="17" fill="#00aeff"/>
<rect x="235" y="396" width="1" height="17" fill="#00b9ff"/>
<rect x="236" y="396" width="1" height="17" fill="#00c4ff"/>
<rect x="237" y="396" width="1" height="17" fill="#00ceff"/>
<rect x="238" y="396" width="1" height="17" fill="#00d9ff"/>
<rect x="239" y="396" width="1" height="17" fill="#00e4ff"/>
<rect x="240" y="396" width="1" height="17" fill="#00efff"/>
<rect x="241" y="396" width="1" height="17" fill="#00f9ff"/>
<rect x="242" y="396" width="1" height="17" fill="#00fffa"/>
<rect x="243" y="396" width="1" height="17" fill="#00ffef"/>
<rect x="244" y="396" width="1" height="17" fill="#00ffe5"/>
<rect x="245" y="396" width="1" height="17" fill="#00ffda"/>
<rect x="246" y="396" width="1" height="17" fill="#00ffcf"/>
<rect x="247" y="396" width="1" height="17" fill="#00ffc5"/>
<rect x="248" y="396" width="160" height="17" fill="#00ffbf"/>
<rect x="408" y="396" width="1" height="17" fill="#00ffcb"/>
<rect x="409" y="396" width="1" height="17" fill="#00ffe4"/>
<rect x="410" y="396" width="1" height="17" fill="#00fffc"/>
<rect x="411" y="396" width="1" height="17" fill="#00c4ff"/>
<rect x="412" y="396" width="1" height="17" fill="#0087ff"/>
<rect x="413" y="396" width="1" height="17" fill="#004aff"/>
<rect x="414" y="396" width="1" height="17" fill="#0014ff"/>
<rect x="415" y="396" width="1" height="17" fill="#1100ff"/>
<rect x="416" y="396" width="3" height="17" fill="#2d00ff"/>
<rect x="419" y="396" width="1" height="17" fill="#1800ff"/>
<rect x="420" y="396" width="1" height="17" fill="#0400ff"/>
<rect x="421" y="396" width="1" height="17" fill="#002bff"/>
<rect x="422" y="396" width="1" height="17" fill="#005eff"/>
<rect x="423" y="396" width="1" height="17" fill="#0097ff"/>
<rect x="424" y="396" width="1" height="17" fill="#00d1ff"/>
<rect x="425" y="396" width="1" height="17" fill="#00fdff"/>
<rect x="426" y="396" width="8" height="17" fill="#00fff0"/>
<rect x="434" y="396" width="1" height="17" fill="#00e9ff"/>
<rect x="435" y="396" width="1" height="17" fill="#009cff"/>
<rect x="436" y="396" width="1" height="17" fill="#004aff"/>
<rect x="437" y="396" width="1" height="17" fill="#0003ff"/>
<rect x="438" y="396" width="1" height="17" fill="#1d00ff"/>
<rect x="439" y="396" width="2" height="17" fill="#2d00ff"/>
<rect x="441" y="396" width="1" height="17" fill="#1d00ff"/>
<rect x="442" y="396" width="1" height="17" fill="#0003ff"/>
<rect x="443" y="396" width="1" height="17" fill="#004aff"/>
<rect x="444" y="396" width="1" height="17" fill="#009cff"/>
<rect x="445" y="396" width="1" height="17" fill="#00e3ff"/>
<rect x="446" y="396" width="1" height="17" fill="#00ffde"/>
<rect x="447" y="396" width="10" height="17" fill="#00ffbf"/>
<rect x="221" y="413" width="1" height="18" fill="#0082ff"/>
<rect x="222" y="413" width="1" height="18" fill="#0088ff"/>
<rect x="223" y="413" width="1" height="18" fill="#008dff"/>
<rect x="224" y="413" width="1" height="18" fill="#0093ff"/>
<rect x="225" y="413" width="1" height="18" fill="#0098ff"/>
<rect x="226" y="413" width="1" height="18" fill="#009eff"/>
<rect x="227" y="413" width="1" height="18" fill="#00a4ff"/>
<rect x="228" y="413" width="1" height="18" fill="#00a9ff"/>
<rect x="229" y="413" width="1" height="18" fill="#00afff"/>
<rect x="230" y="413" width="1" height="18" fill="#00b4ff"/>
<rect x="231" y="413" width="1" height="18" fill="#00baff"/>
<rect x="232" y="413" width="1" height="18" fill="#00bfff"/>
<rect x="233" y="413" width="1" height="18" fill="#00c3ff"/>
<rect x="234" y="413" width="1" height="18" fill="#00c7ff"/>
<rect x="235" y="413" width="1" height="18" fill="#00ccff"/>
<rect x="236" y="413" width="1" height="18" fill="#00d0ff"/>
<rect x="237" y="413" width="1" height="18" fill="#00d4ff"/>
<rect x="238" y="413" width="1" height="18" fill="#00d8ff"/>
<rect x="239" y="413" width="1" height="18" fill="#00dcff"/>
<rect x="240" y="413" width="1" height="18" fill="#00e0ff"/>
<rect x="241" y="413" width="1" height="18" fill="#00e4ff"/>
<rect x="242" y="413" width="1" height="18" fill="#00e8ff"/>
<rect x="243" y="413" width="1" height="18" fill="#00ecff"/>
<rect x="244" y="413" width="1" height="18" fill="#00f1ff"/>
<rect x="245" y="413" width="1" height="18" fill="#00f5ff"/>
<rect x="246" y="413" width="1" height="18" fill="#00f9ff"/>
<rect x="247" y="413" width="1" height="18" fill="#00fdff"/>
<rect x="248" y="413" width="160" height="18" fill="#00ffff"/>
<rect x="408" y="413" width="1" height="18" fill="#00f5ff"/>
<rect x="409" y="413" width="1" height="18" fill="#00e2ff"/>
<rect x="410" y="413" width="1" height="18" fill="#00cfff"/>
<rect x="411" y="413" width="1" height="18" fill="#009fff"/>
<rect x="412" y="413" width="1" height="18" fill="#0070ff"/>
<rect x="413" y="413" width="1" height="18" fill="#0040ff"/>
<rect x="414" y="413" width="1" height="18" fill="#0015ff"/>
<rect x="415" y="413" width="1" height="18" fill="#0b00ff"/>
<rect x="416" y="413" width="3" height="18" fill="#2000ff"/>
<rect x="419" y="413" width="1" height="18" fill="#1000ff"/>
<rect x="420" y="413" width="1" height="18" fill="#0000ff"/>
<rect x="421" y="413" width="1" height="18" fill="#0028ff"/>
<rect x="422" y="413" width="1" height="18" fill="#0050ff"/>
<rect x="423" y="413" width="1" height="18" fill="#007cff"/>
<rect x="424" y="413" width="1" height="18" fill="#00a9ff"/>
<rect x="425" y="413" width="1" height="18" fill="#00ccff"/>
<rect x="426" y="413" width="8" height="18" fill="#00d9ff"/>
<rect x="434" y="413" width="1" height="18" fill="#00bcff"/>
<rect x="435" y="413" width="1" height="18" fill="#0080ff"/>
<rect x="436" y="413" width="1" height="18" fill="#0040ff"/>
<rect x="437" y="413" width="1" height="18" fill="#0008ff"/>
<rect x="438" y="413" width="1" height="18" fill="#1400ff"/>
<rect x="439" y="413" width="2" height="18" fill="#2000ff"/>
<rect x="441" y="413" width="1" height="18" fill="#1400ff"/>
<rect x="442" y="413" width="1" height="18" fill="#0008ff"/>
<rect x="443" y="413" width="1" height="18" fill="#0040ff"/>
<rect x="444" y="413" width="1" height="18" fill="#0080ff"/>
<rect x="445" y="413" width="1" height="18" fill="#00b7ff"/>
<rect x="446" y="413" width="1" height="18" fill="#00e7ff"/>
<rect x="447" y="413" width="10" height="18" fill="#00ffff"/>
<rect x="221" y="431" width="1" height="18" fill="#00e7ff"/>
<rect x="222" y="431" width="1" height="18" fill="#00e9ff"/>
<rect x="223" y="431" width="1" height="18" fill="#00ebff"/>
<rect x="224" y="431" width="1" height="18" fill="#00edff"/>
<rect x="225" y="431" width="1" height="18" fill="#00efff"/>
<rect x="226" y="431" width="1" height="18" fill="#00f2ff"/>
<rect x="227" y="431" width="1" height="18" fill="#00f4ff"/>
<rect x="228" y="431" width="1" height="18" fill="#00f6ff"/>
<rect x="229" y="431" width="1" height="18" fill="#00f8ff"/>
<rect x="230" y="431" width="1" height="18" fill="#00fbff"/>
<rect x="231" y="431" width="1" height="18" fill="#00fdff"/>
<rect x="232" y="431" width="1" height="18" fill="#00ffff"/>
<rect x="233" y="431" width="1" height="18" fill="#00fdff"/>
<rect x="234" y="431" width="1" height="18" fill="#00fbff"/>
<rect x="235" y="431" width="1" height="18" fill="#00f9ff"/>
<rect x="236" y="431" width="1" height="18" fill="#00f7ff"/>
<rect x="237" y="431" width="1" height="18" fill="#00f5ff"/>
<rect x="238" y="431" width="1" height="18" fill="#00f3ff"/>
<rect x="239" y="431" width="1" height="18" fill="#00f1ff"/>
<rect x="240" y="431" width="1" height="18" fill="#00efff"/>
<rect x="241" y="431" width="1" height="18" fill="#00ecff"/>
<rect x="242" y="431" width="1" height="18" fill="#00eaff"/>
<rect x="243" y="431" width="1" height="18" fill="#00e8ff"/>
<rect x="244" y="431" width="1" height="18" fill="#00e6ff"/>
<rect x="245" y="431" width="1" height="18" fill="#00e4ff"/>
<rect x="246" y="431" width="1" height="18" fill="#00e2ff"/>
<rect x="247" y="431" width="1" height="18" fill="#00e0ff"/>
<rect x="248" y="431" width="160" height="18" fill="#00dfff"/>
<rect x="408" y="431" width="1" height="18" fill="#00d8ff"/>
<rect x="409" y="431" width="1" height="18" fill="#00cbff"/>
<rect x="410" y="431" width="1" height="18" fill="#00beff"/>
<rect x="411" y="431" width="1" height="18" fill="#009cff"/>
<rect x="412" y="431" width="1" height="18" fill="#007bff"/>
<rect x="413" y="431" width="1" height="18" fill="#0059ff"/>
<rect x="414" y="431" width="1" height="18" fill="#003cff"/>
<rect x="415" y="431" width="1" height="18" fill="#001eff"/>
<rect x="416" y="431" width="3" height="18" fill="#0000ff"/>
<rect x="419" y="431" width="1" height="18" fill="#0016ff"/>
<rect x="420" y="431" width="1" height="18" fill="#002dff"/>
<rect x="421" y="431" width="1" height="18" fill="#0049ff"/>
<rect x="422" y="431" width="1" height="18" fill="#0064ff"/>
<rect x="423" y="431" width="1" height="18" fill="#0084ff"/>
<rect x="424" y="431" width="1" height="18" fill="#00a3ff"/>
<rect x="425" y="431" width="1" height="18" fill="#00bbff"/>
<rect x="426" y="431" width="8" height="18" fill="#00c4ff"/>
<rect x="434" y="431" width="1" height="18" fill="#00b0ff"/>
<rect x="435" y="431" width="1" height="18" fill="#0086ff"/>
<rect x="436" y="431" width="1" height="18" fill="#0059ff"/>
<rect x="437" y="431" width="1" height="18" fill="#0032ff"/>
<rect x="438" y="431" width="1" height="18" fill="#0011ff"/>
<rect x="439" y="431" width="2" height="18" fill="#0000ff"/>
<rect x="441" y="431" width="1" height="18" fill="#0011ff"/>
<rect x="442" y="431" width="1" height="18" fill="#0032ff"/>
<rect x="443" y="431" width="1" height="18" fill="#0059ff"/>
<rect x="444" y="431" width="1" height="18" fill="#0086ff"/>
<rect x="445" y="431" width="1" height="18" fill="#00adff"/>
<rect x="446" y="431" width="1" height="18" fill="#00ceff"/>
<rect x="447" y="431" width="10" height="18" fill="#00dfff"/>
<path fill="#000" d="M232 256h1v193h-1zM248 256h1v193h-1zM263 256h1v193h-1zM279 256h1v193h-1zM294 256h1v193h-1zM310 256h1v193h-1zM325 256h1v193h-1zM341 256h1v193h-1zM356 256h1v193h-1zM372 256h1v193h-1zM388 256h1v193h-1zM403 256h1v193h-1zM419 256h1v193h-1zM434 256h1v193h-1zM221 273h236v1h-236zM221 290h236v1h-236zM221 308h236v1h-236zM221 326h236v1h-236zM221 343h236v1h-236zM221 361h236v1h-236zM221 378h236v1h-236zM221 396h236v1h-236zM221 413h236v1h-236zM221 431h236v1h-236zM406 256h2v193h-2zM426 256h3v193h-3zM446 256h7v193h-7z"/>
</g>
<g shape-rendering="crispEdges">
<path fill="#fff" d="M221 643h11v1h-11zM233 643h15v1h-15zM249 643h14v1h-14zM264 643h15v1h-15zM280 643h13v1h-13zM295 607h15v1h-15zM311 607h14v1h-14zM326 607h15v1h-15zM342 607h14v1h-14zM357 607h15v1h-15zM373 607h14v1h-14zM388 607h15v1h-15zM404 607h14v1h-14zM419 607h15v1h-15zM435 607h15v1h-15zM451 607h14v1h-14zM466 607h15v1h-15zM482 607h5v1h-5zM488 643h8v1h-8zM497 643h15v1h-15zM513 643h14v1h-14zM528 643h15v1h-15zM544 643h14v1h-14zM559 643h15v1h-15zM575 643h14v1h-14zM590 643h15v1h-15zM606 643h14v1h-14zM621 643h5v1h-5zM626 607h10v1h-10zM637 607h14v1h-14zM652 607h15v1h-15zM668 607h14v1h-14zM683 607h15v1h-15zM699 607h15v1h-15zM715 607h14v1h-14zM730 607h3v1h-3zM734 572h11v1h-11zM746 572h14v1h-14zM761 572h15v1h-15zM777 572h14v1h-14zM792 572h15v1h-15zM808 572h12v1h-12zM293 614h1v1h-1zM487 630h1v1h-1zM733 577h1v1h-1z"/>
<polyline fill="none" stroke="#00ff00" stroke-width="1" points="211,583.4 225,590.5 246.9,605.3 268.75,616.6 293.75,626.9 315.6,633.4 337.5,639.7 359.4,644.4 370.3,645.9 395.3,649.4 417.2,651.4 440.3,652.4 462,652.6 483.6,652.4 505.5,651.25 520.3,649.8 545.3,647.8 562.5,645.6 579.7,643.6 609.4,639.7 625,637 659.4,630.3 689.6,625.1 733.1,613.6 780.6,600.3 806.3,592.4 829,586.5"/>
</g>
<g shape-rendering="crispEdges">
<rect x="850" y="77" width="33" height="128" fill="#fff"/>
<rect x="851" y="78" width="31" height="126" fill="url(#rb)"/>
<rect x="875" y="119" width="8" height="1" fill="#fff"/>
<rect x="875" y="161" width="8" height="1" fill="#fff"/>
<rect x="878" y="106" width="5" height="1" fill="#fff"/>
<rect x="878" y="93" width="5" height="1" fill="#fff"/>
<rect x="878" y="86" width="5" height="1" fill="#fff"/>
<rect x="878" y="81" width="5" height="1" fill="#fff"/>
<rect x="878" y="148" width="5" height="1" fill="#fff"/>
<rect x="878" y="136" width="5" height="1" fill="#fff"/>
<rect x="878" y="128" width="5" height="1" fill="#fff"/>
<rect x="878" y="123" width="5" height="1" fill="#fff"/>
<rect x="878" y="191" width="5" height="1" fill="#fff"/>
<rect x="878" y="178" width="5" height="1" fill="#fff"/>
<rect x="878" y="171" width="5" height="1" fill="#fff"/>
<rect x="878" y="165" width="5" height="1" fill="#fff"/>
<rect x="850" y="275" width="33" height="155" fill="#fff"/>
<rect x="851" y="276" width="31" height="153" fill="url(#rb)"/>
<rect x="875" y="313" width="8" height="1" fill="#fff"/>
<rect x="875" y="352" width="8" height="1" fill="#fff"/>
<rect x="875" y="390" width="8" height="1" fill="#fff"/>
<rect x="878" y="282" width="5" height="1" fill="#fff"/>
<rect x="878" y="290" width="5" height="1" fill="#fff"/>
<rect x="878" y="298" width="5" height="1" fill="#fff"/>
<rect x="878" y="305" width="5" height="1" fill="#fff"/>
<rect x="878" y="321" width="5" height="1" fill="#fff"/>
<rect x="878" y="329" width="5" height="1" fill="#fff"/>
<rect x="878" y="336" width="5" height="1" fill="#fff"/>
<rect x="878" y="344" width="5" height="1" fill="#fff"/>
<rect x="878" y="359" width="5" height="1" fill="#fff"/>
<rect x="878" y="367" width="5" height="1" fill="#fff"/>
<rect x="878" y="375" width="5" height="1" fill="#fff"/>
<rect x="878" y="383" width="5" height="1" fill="#fff"/>
<rect x="878" y="398" width="5" height="1" fill="#fff"/>
<rect x="878" y="406" width="5" height="1" fill="#fff"/>
<rect x="878" y="413" width="5" height="1" fill="#fff"/>
<rect x="878" y="421" width="5" height="1" fill="#fff"/>
</g>
<g shape-rendering="crispEdges" fill="#fff">
<rect x="204" y="61" width="632" height="1" fill="#fff"/>
<rect x="201" y="220" width="638" height="1" fill="#fff"/>
<rect x="210" y="61" width="1" height="160" fill="#fff"/>
<rect x="829" y="61" width="1" height="160" fill="#fff"/>
<rect x="224" y="61" width="1" height="10" fill="#fff"/>
<rect x="224" y="211" width="1" height="10" fill="#fff"/>
<rect x="281" y="61" width="1" height="10" fill="#fff"/>
<rect x="281" y="211" width="1" height="10" fill="#fff"/>
<rect x="337" y="61" width="1" height="10" fill="#fff"/>
<rect x="337" y="211" width="1" height="10" fill="#fff"/>
<rect x="394" y="61" width="1" height="10" fill="#fff"/>
<rect x="394" y="211" width="1" height="10" fill="#fff"/>
<rect x="451" y="61" width="1" height="10" fill="#fff"/>
<rect x="451" y="211" width="1" height="10" fill="#fff"/>
<rect x="507" y="61" width="1" height="10" fill="#fff"/>
<rect x="507" y="211" width="1" height="10" fill="#fff"/>
<rect x="564" y="61" width="1" height="10" fill="#fff"/>
<rect x="564" y="211" width="1" height="10" fill="#fff"/>
<rect x="620" y="61" width="1" height="10" fill="#fff"/>
<rect x="620" y="211" width="1" height="10" fill="#fff"/>
<rect x="677" y="61" width="1" height="10" fill="#fff"/>
<rect x="677" y="211" width="1" height="10" fill="#fff"/>
<rect x="734" y="61" width="1" height="10" fill="#fff"/>
<rect x="734" y="211" width="1" height="10" fill="#fff"/>
<rect x="790" y="61" width="1" height="10" fill="#fff"/>
<rect x="790" y="211" width="1" height="10" fill="#fff"/>
<rect x="211" y="61" width="1" height="6" fill="#fff"/>
<rect x="211" y="215" width="1" height="6" fill="#fff"/>
<rect x="218" y="61" width="1" height="6" fill="#fff"/>
<rect x="218" y="215" width="1" height="6" fill="#fff"/>
<rect x="230" y="61" width="1" height="6" fill="#fff"/>
<rect x="230" y="215" width="1" height="6" fill="#fff"/>
<rect x="236" y="61" width="1" height="6" fill="#fff"/>
<rect x="236" y="215" width="1" height="6" fill="#fff"/>
<rect x="243" y="61" width="1" height="6" fill="#fff"/>
<rect x="243" y="215" width="1" height="6" fill="#fff"/>
<rect x="249" y="61" width="1" height="6" fill="#fff"/>
<rect x="249" y="215" width="1" height="6" fill="#fff"/>
<rect x="255" y="61" width="1" height="6" fill="#fff"/>
<rect x="255" y="215" width="1" height="6" fill="#fff"/>
<rect x="262" y="61" width="1" height="6" fill="#fff"/>
<rect x="262" y="215" width="1" height="6" fill="#fff"/>
<rect x="268" y="61" width="1" height="6" fill="#fff"/>
<rect x="268" y="215" width="1" height="6" fill="#fff"/>
<rect x="274" y="61" width="1" height="6" fill="#fff"/>
<rect x="274" y="215" width="1" height="6" fill="#fff"/>
<rect x="287" y="61" width="1" height="6" fill="#fff"/>
<rect x="287" y="215" width="1" height="6" fill="#fff"/>
<rect x="293" y="61" width="1" height="6" fill="#fff"/>
<rect x="293" y="215" width="1" height="6" fill="#fff"/>
<rect x="299" y="61" width="1" height="6" fill="#fff"/>
<rect x="299" y="215" width="1" height="6" fill="#fff"/>
<rect x="306" y="61" width="1" height="6" fill="#fff"/>
<rect x="306" y="215" width="1" height="6" fill="#fff"/>
<rect x="312" y="61" width="1" height="6" fill="#fff"/>
<rect x="312" y="215" width="1" height="6" fill="#fff"/>
<rect x="318" y="61" width="1" height="6" fill="#fff"/>
<rect x="318" y="215" width="1" height="6" fill="#fff"/>
<rect x="325" y="61" width="1" height="6" fill="#fff"/>
<rect x="325" y="215" width="1" height="6" fill="#fff"/>
<rect x="331" y="61" width="1" height="6" fill="#fff"/>
<rect x="331" y="215" width="1" height="6" fill="#fff"/>
<rect x="343" y="61" width="1" height="6" fill="#fff"/>
<rect x="343" y="215" width="1" height="6" fill="#fff"/>
<rect x="350" y="61" width="1" height="6" fill="#fff"/>
<rect x="350" y="215" width="1" height="6" fill="#fff"/>
<rect x="356" y="61" width="1" height="6" fill="#fff"/>
<rect x="356" y="215" width="1" height="6" fill="#fff"/>
<rect x="362" y="61" width="1" height="6" fill="#fff"/>
<rect x="362" y="215" width="1" height="6" fill="#fff"/>
<rect x="369" y="61" width="1" height="6" fill="#fff"/>
<rect x="369" y="215" width="1" height="6" fill="#fff"/>
<rect x="375" y="61" width="1" height="6" fill="#fff"/>
<rect x="375" y="215" width="1" height="6" fill="#fff"/>
<rect x="381" y="61" width="1" height="6" fill="#fff"/>
<rect x="381" y="215" width="1" height="6" fill="#fff"/>
<rect x="388" y="61" width="1" height="6" fill="#fff"/>
<rect x="388" y="215" width="1" height="6" fill="#fff"/>
<rect x="400" y="61" width="1" height="6" fill="#fff"/>
<rect x="400" y="215" width="1" height="6" fill="#fff"/>
<rect x="406" y="61" width="1" height="6" fill="#fff"/>
<rect x="406" y="215" width="1" height="6" fill="#fff"/>
<rect x="413" y="61" width="1" height="6" fill="#fff"/>
<rect x="413" y="215" width="1" height="6" fill="#fff"/>
<rect x="419" y="61" width="1" height="6" fill="#fff"/>
<rect x="419" y="215" width="1" height="6" fill="#fff"/>
<rect x="425" y="61" width="1" height="6" fill="#fff"/>
<rect x="425" y="215" width="1" height="6" fill="#fff"/>
<rect x="432" y="61" width="1" height="6" fill="#fff"/>
<rect x="432" y="215" width="1" height="6" fill="#fff"/>
<rect x="438" y="61" width="1" height="6" fill="#fff"/>
<rect x="438" y="215" width="1" height="6" fill="#fff"/>
<rect x="444" y="61" width="1" height="6" fill="#fff"/>
<rect x="444" y="215" width="1" height="6" fill="#fff"/>
<rect x="457" y="61" width="1" height="6" fill="#fff"/>
<rect x="457" y="215" width="1" height="6" fill="#fff"/>
<rect x="463" y="61" width="1" height="6" fill="#fff"/>
<rect x="463" y="215" width="1" height="6" fill="#fff"/>
<rect x="469" y="61" width="1" height="6" fill="#fff"/>
<rect x="469" y="215" width="1" height="6" fill="#fff"/>
<rect x="476" y="61" width="1" height="6" fill="#fff"/>
<rect x="476" y="215" width="1" height="6" fill="#fff"/>
<rect x="482" y="61" width="1" height="6" fill="#fff"/>
<rect x="482" y="215" width="1" height="6" fill="#fff"/>
<rect x="488" y="61" width="1" height="6" fill="#fff"/>
<rect x="488" y="215" width="1" height="6" fill="#fff"/>
<rect x="495" y="61" width="1" height="6" fill="#fff"/>
<rect x="495" y="215" width="1" height="6" fill="#fff"/>
<rect x="501" y="61" width="1" height="6" fill="#fff"/>
<rect x="501" y="215" width="1" height="6" fill="#fff"/>
<rect x="513" y="61" width="1" height="6" fill="#fff"/>
<rect x="513" y="215" width="1" height="6" fill="#fff"/>
<rect x="520" y="61" width="1" height="6" fill="#fff"/>
<rect x="520" y="215" width="1" height="6" fill="#fff"/>
<rect x="526" y="61" width="1" height="6" fill="#fff"/>
<rect x="526" y="215" width="1" height="6" fill="#fff"/>
<rect x="532" y="61" width="1" height="6" fill="#fff"/>
<rect x="532" y="215" width="1" height="6" fill="#fff"/>
<rect x="539" y="61" width="1" height="6" fill="#fff"/>
<rect x="539" y="215" width="1" height="6" fill="#fff"/>
<rect x="545" y="61" width="1" height="6" fill="#fff"/>
<rect x="545" y="215" width="1" height="6" fill="#fff"/>
<rect x="551" y="61" width="1" height="6" fill="#fff"/>
<rect x="551" y="215" width="1" height="6" fill="#fff"/>
<rect x="558" y="61" width="1" height="6" fill="#fff"/>
<rect x="558" y="215" width="1" height="6" fill="#fff"/>
<rect x="570" y="61" width="1" height="6" fill="#fff"/>
<rect x="570" y="215" width="1" height="6" fill="#fff"/>
<rect x="576" y="61" width="1" height="6" fill="#fff"/>
<rect x="576" y="215" width="1" height="6" fill="#fff"/>
<rect x="583" y="61" width="1" height="6" fill="#fff"/>
<rect x="583" y="215" width="1" height="6" fill="#fff"/>
<rect x="589" y="61" width="1" height="6" fill="#fff"/>
<rect x="589" y="215" width="1" height="6" fill="#fff"/>
<rect x="595" y="61" width="1" height="6" fill="#fff"/>
<rect x="595" y="215" width="1" height="6" fill="#fff"/>
<rect x="602" y="61" width="1" height="6" fill="#fff"/>
<rect x="602" y="215" width="1" height="6" fill="#fff"/>
<rect x="608" y="61" width="1" height="6" fill="#fff"/>
<rect x="608" y="215" width="1" height="6" fill="#fff"/>
<rect x="614" y="61" width="1" height="6" fill="#fff"/>
<rect x="614" y="215" width="1" height="6" fill="#fff"/>
<rect x="627" y="61" width="1" height="6" fill="#fff"/>
<rect x="627" y="215" width="1" height="6" fill="#fff"/>
<rect x="633" y="61" width="1" height="6" fill="#fff"/>
<rect x="633" y="215" width="1" height="6" fill="#fff"/>
<rect x="639" y="61" width="1" height="6" fill="#fff"/>
<rect x="639" y="215" width="1" height="6" fill="#fff"/>
<rect x="646" y="61" width="1" height="6" fill="#fff"/>
<rect x="646" y="215" width="1" height="6" fill="#fff"/>
<rect x="652" y="61" width="1" height="6" fill="#fff"/>
<rect x="652" y="215" width="1" height="6" fill="#fff"/>
<rect x="658" y="61" width="1" height="6" fill="#fff"/>
<rect x="658" y="215" width="1" height="6" fill="#fff"/>
<rect x="665" y="61" width="1" height="6" fill="#fff"/>
<rect x="665" y="215" width="1" height="6" fill="#fff"/>
<rect x="671" y="61" width="1" height="6" fill="#fff"/>
<rect x="671" y="215" width="1" height="6" fill="#fff"/>
<rect x="683" y="61" width="1" height="6" fill="#fff"/>
<rect x="683" y="215" width="1" height="6" fill="#fff"/>
<rect x="690" y="61" width="1" height="6" fill="#fff"/>
<rect x="690" y="215" width="1" height="6" fill="#fff"/>
<rect x="696" y="61" width="1" height="6" fill="#fff"/>
<rect x="696" y="215" width="1" height="6" fill="#fff"/>
<rect x="702" y="61" width="1" height="6" fill="#fff"/>
<rect x="702" y="215" width="1" height="6" fill="#fff"/>
<rect x="709" y="61" width="1" height="6" fill="#fff"/>
<rect x="709" y="215" width="1" height="6" fill="#fff"/>
<rect x="715" y="61" width="1" height="6" fill="#fff"/>
<rect x="715" y="215" width="1" height="6" fill="#fff"/>
<rect x="721" y="61" width="1" height="6" fill="#fff"/>
<rect x="721" y="215" width="1" height="6" fill="#fff"/>
<rect x="727" y="61" width="1" height="6" fill="#fff"/>
<rect x="727" y="215" width="1" height="6" fill="#fff"/>
<rect x="740" y="61" width="1" height="6" fill="#fff"/>
<rect x="740" y="215" width="1" height="6" fill="#fff"/>
<rect x="746" y="61" width="1" height="6" fill="#fff"/>
<rect x="746" y="215" width="1" height="6" fill="#fff"/>
<rect x="753" y="61" width="1" height="6" fill="#fff"/>
<rect x="753" y="215" width="1" height="6" fill="#fff"/>
<rect x="759" y="61" width="1" height="6" fill="#fff"/>
<rect x="759" y="215" width="1" height="6" fill="#fff"/>
<rect x="765" y="61" width="1" height="6" fill="#fff"/>
<rect x="765" y="215" width="1" height="6" fill="#fff"/>
<rect x="772" y="61" width="1" height="6" fill="#fff"/>
<rect x="772" y="215" width="1" height="6" fill="#fff"/>
<rect x="778" y="61" width="1" height="6" fill="#fff"/>
<rect x="778" y="215" width="1" height="6" fill="#fff"/>
<rect x="784" y="61" width="1" height="6" fill="#fff"/>
<rect x="784" y="215" width="1" height="6" fill="#fff"/>
<rect x="797" y="61" width="1" height="6" fill="#fff"/>
<rect x="797" y="215" width="1" height="6" fill="#fff"/>
<rect x="803" y="61" width="1" height="6" fill="#fff"/>
<rect x="803" y="215" width="1" height="6" fill="#fff"/>
<rect x="809" y="61" width="1" height="6" fill="#fff"/>
<rect x="809" y="215" width="1" height="6" fill="#fff"/>
<rect x="816" y="61" width="1" height="6" fill="#fff"/>
<rect x="816" y="215" width="1" height="6" fill="#fff"/>
<rect x="822" y="61" width="1" height="6" fill="#fff"/>
<rect x="822" y="215" width="1" height="6" fill="#fff"/>
<rect x="828" y="61" width="1" height="6" fill="#fff"/>
<rect x="828" y="215" width="1" height="6" fill="#fff"/>
<rect x="204" y="199" width="7" height="1" fill="#fff"/>
<rect x="829" y="199" width="7" height="1" fill="#fff"/>
<rect x="204" y="178" width="7" height="1" fill="#fff"/>
<rect x="829" y="178" width="7" height="1" fill="#fff"/>
<rect x="204" y="166" width="7" height="1" fill="#fff"/>
<rect x="829" y="166" width="7" height="1" fill="#fff"/>
<rect x="204" y="157" width="7" height="1" fill="#fff"/>
<rect x="829" y="157" width="7" height="1" fill="#fff"/>
<rect x="201" y="150" width="10" height="1" fill="#fff"/>
<rect x="829" y="150" width="10" height="1" fill="#fff"/>
<rect x="204" y="130" width="7" height="1" fill="#fff"/>
<rect x="829" y="130" width="7" height="1" fill="#fff"/>
<rect x="204" y="109" width="7" height="1" fill="#fff"/>
<rect x="829" y="109" width="7" height="1" fill="#fff"/>
<rect x="204" y="96" width="7" height="1" fill="#fff"/>
<rect x="829" y="96" width="7" height="1" fill="#fff"/>
<rect x="204" y="88" width="7" height="1" fill="#fff"/>
<rect x="829" y="88" width="7" height="1" fill="#fff"/>
<rect x="201" y="81" width="10" height="1" fill="#fff"/>
<rect x="829" y="81" width="10" height="1" fill="#fff"/>
<rect x="210" y="255" width="620" height="1" fill="#fff"/>
<rect x="210" y="449" width="620" height="1" fill="#fff"/>
<rect x="210" y="255" width="1" height="195" fill="#fff"/>
<rect x="829" y="255" width="1" height="195" fill="#fff"/>
<rect x="224" y="255" width="1" height="10" fill="#fff"/>
<rect x="224" y="440" width="1" height="10" fill="#fff"/>
<rect x="281" y="255" width="1" height="10" fill="#fff"/>
<rect x="281" y="440" width="1" height="10" fill="#fff"/>
<rect x="337" y="255" width="1" height="10" fill="#fff"/>
<rect x="337" y="440" width="1" height="10" fill="#fff"/>
<rect x="394" y="255" width="1" height="10" fill="#fff"/>
<rect x="394" y="440" width="1" height="10" fill="#fff"/>
<rect x="451" y="255" width="1" height="10" fill="#fff"/>
<rect x="451" y="440" width="1" height="10" fill="#fff"/>
<rect x="507" y="255" width="1" height="10" fill="#fff"/>
<rect x="507" y="440" width="1" height="10" fill="#fff"/>
<rect x="564" y="255" width="1" height="10" fill="#fff"/>
<rect x="564" y="440" width="1" height="10" fill="#fff"/>
<rect x="620" y="255" width="1" height="10" fill="#fff"/>
<rect x="620" y="440" width="1" height="10" fill="#fff"/>
<rect x="677" y="255" width="1" height="10" fill="#fff"/>
<rect x="677" y="440" width="1" height="10" fill="#fff"/>
<rect x="734" y="255" width="1" height="10" fill="#fff"/>
<rect x="734" y="440" width="1" height="10" fill="#fff"/>
<rect x="790" y="255" width="1" height="10" fill="#fff"/>
<rect x="790" y="440" width="1" height="10" fill="#fff"/>
<rect x="211" y="255" width="1" height="6" fill="#fff"/>
<rect x="211" y="444" width="1" height="6" fill="#fff"/>
<rect x="218" y="255" width="1" height="6" fill="#fff"/>
<rect x="218" y="444" width="1" height="6" fill="#fff"/>
<rect x="230" y="255" width="1" height="6" fill="#fff"/>
<rect x="230" y="444" width="1" height="6" fill="#fff"/>
<rect x="236" y="255" width="1" height="6" fill="#fff"/>
<rect x="236" y="444" width="1" height="6" fill="#fff"/>
<rect x="243" y="255" width="1" height="6" fill="#fff"/>
<rect x="243" y="444" width="1" height="6" fill="#fff"/>
<rect x="249" y="255" width="1" height="6" fill="#fff"/>
<rect x="249" y="444" width="1" height="6" fill="#fff"/>
<rect x="255" y="255" width="1" height="6" fill="#fff"/>
<rect x="255" y="444" width="1" height="6" fill="#fff"/>
<rect x="262" y="255" width="1" height="6" fill="#fff"/>
<rect x="262" y="444" width="1" height="6" fill="#fff"/>
<rect x="268" y="255" width="1" height="6" fill="#fff"/>
<rect x="268" y="444" width="1" height="6" fill="#fff"/>
<rect x="274" y="255" width="1" height="6" fill="#fff"/>
<rect x="274" y="444" width="1" height="6" fill="#fff"/>
<rect x="287" y="255" width="1" height="6" fill="#fff"/>
<rect x="287" y="444" width="1" height="6" fill="#fff"/>
<rect x="293" y="255" width="1" height="6" fill="#fff"/>
<rect x="293" y="444" width="1" height="6" fill="#fff"/>
<rect x="299" y="255" width="1" height="6" fill="#fff"/>
<rect x="299" y="444" width="1" height="6" fill="#fff"/>
<rect x="306" y="255" width="1" height="6" fill="#fff"/>
<rect x="306" y="444" width="1" height="6" fill="#fff"/>
<rect x="312" y="255" width="1" height="6" fill="#fff"/>
<rect x="312" y="444" width="1" height="6" fill="#fff"/>
<rect x="318" y="255" width="1" height="6" fill="#fff"/>
<rect x="318" y="444" width="1" height="6" fill="#fff"/>
<rect x="325" y="255" width="1" height="6" fill="#fff"/>
<rect x="325" y="444" width="1" height="6" fill="#fff"/>
<rect x="331" y="255" width="1" height="6" fill="#fff"/>
<rect x="331" y="444" width="1" height="6" fill="#fff"/>
<rect x="343" y="255" width="1" height="6" fill="#fff"/>
<rect x="343" y="444" width="1" height="6" fill="#fff"/>
<rect x="350" y="255" width="1" height="6" fill="#fff"/>
<rect x="350" y="444" width="1" height="6" fill="#fff"/>
<rect x="356" y="255" width="1" height="6" fill="#fff"/>
<rect x="356" y="444" width="1" height="6" fill="#fff"/>
<rect x="362" y="255" width="1" height="6" fill="#fff"/>
<rect x="362" y="444" width="1" height="6" fill="#fff"/>
<rect x="369" y="255" width="1" height="6" fill="#fff"/>
<rect x="369" y="444" width="1" height="6" fill="#fff"/>
<rect x="375" y="255" width="1" height="6" fill="#fff"/>
<rect x="375" y="444" width="1" height="6" fill="#fff"/>
<rect x="381" y="255" width="1" height="6" fill="#fff"/>
<rect x="381" y="444" width="1" height="6" fill="#fff"/>
<rect x="388" y="255" width="1" height="6" fill="#fff"/>
<rect x="388" y="444" width="1" height="6" fill="#fff"/>
<rect x="400" y="255" width="1" height="6" fill="#fff"/>
<rect x="400" y="444" width="1" height="6" fill="#fff"/>
<rect x="406" y="255" width="1" height="6" fill="#fff"/>
<rect x="406" y="444" width="1" height="6" fill="#fff"/>
<rect x="413" y="255" width="1" height="6" fill="#fff"/>
<rect x="413" y="444" width="1" height="6" fill="#fff"/>
<rect x="419" y="255" width="1" height="6" fill="#fff"/>
<rect x="419" y="444" width="1" height="6" fill="#fff"/>
<rect x="425" y="255" width="1" height="6" fill="#fff"/>
<rect x="425" y="444" width="1" height="6" fill="#fff"/>
<rect x="432" y="255" width="1" height="6" fill="#fff"/>
<rect x="432" y="444" width="1" height="6" fill="#fff"/>
<rect x="438" y="255" width="1" height="6" fill="#fff"/>
<rect x="438" y="444" width="1" height="6" fill="#fff"/>
<rect x="444" y="255" width="1" height="6" fill="#fff"/>
<rect x="444" y="444" width="1" height="6" fill="#fff"/>
<rect x="457" y="255" width="1" height="6" fill="#fff"/>
<rect x="457" y="444" width="1" height="6" fill="#fff"/>
<rect x="463" y="255" width="1" height="6" fill="#fff"/>
<rect x="463" y="444" width="1" height="6" fill="#fff"/>
<rect x="469" y="255" width="1" height="6" fill="#fff"/>
<rect x="469" y="444" width="1" height="6" fill="#fff"/>
<rect x="476" y="255" width="1" height="6" fill="#fff"/>
<rect x="476" y="444" width="1" height="6" fill="#fff"/>
<rect x="482" y="255" width="1" height="6" fill="#fff"/>
<rect x="482" y="444" width="1" height="6" fill="#fff"/>
<rect x="488" y="255" width="1" height="6" fill="#fff"/>
<rect x="488" y="444" width="1" height="6" fill="#fff"/>
<rect x="495" y="255" width="1" height="6" fill="#fff"/>
<rect x="495" y="444" width="1" height="6" fill="#fff"/>
<rect x="501" y="255" width="1" height="6" fill="#fff"/>
<rect x="501" y="444" width="1" height="6" fill="#fff"/>
<rect x="513" y="255" width="1" height="6" fill="#fff"/>
<rect x="513" y="444" width="1" height="6" fill="#fff"/>
<rect x="520" y="255" width="1" height="6" fill="#fff"/>
<rect x="520" y="444" width="1" height="6" fill="#fff"/>
<rect x="526" y="255" width="1" height="6" fill="#fff"/>
<rect x="526" y="444" width="1" height="6" fill="#fff"/>
<rect x="532" y="255" width="1" height="6" fill="#fff"/>
<rect x="532" y="444" width="1" height="6" fill="#fff"/>
<rect x="539" y="255" width="1" height="6" fill="#fff"/>
<rect x="539" y="444" width="1" height="6" fill="#fff"/>
<rect x="545" y="255" width="1" height="6" fill="#fff"/>
<rect x="545" y="444" width="1" height="6" fill="#fff"/>
<rect x="551" y="255" width="1" height="6" fill="#fff"/>
<rect x="551" y="444" width="1" height="6" fill="#fff"/>
<rect x="558" y="255" width="1" height="6" fill="#fff"/>
<rect x="558" y="444" width="1" height="6" fill="#fff"/>
<rect x="570" y="255" width="1" height="6" fill="#fff"/>
<rect x="570" y="444" width="1" height="6" fill="#fff"/>
<rect x="576" y="255" width="1" height="6" fill="#fff"/>
<rect x="576" y="444" width="1" height="6" fill="#fff"/>
<rect x="583" y="255" width="1" height="6" fill="#fff"/>
<rect x="583" y="444" width="1" height="6" fill="#fff"/>
<rect x="589" y="255" width="1" height="6" fill="#fff"/>
<rect x="589" y="444" width="1" height="6" fill="#fff"/>
<rect x="595" y="255" width="1" height="6" fill="#fff"/>
<rect x="595" y="444" width="1" height="6" fill="#fff"/>
<rect x="602" y="255" width="1" height="6" fill="#fff"/>
<rect x="602" y="444" width="1" height="6" fill="#fff"/>
<rect x="608" y="255" width="1" height="6" fill="#fff"/>
<rect x="608" y="444" width="1" height="6" fill="#fff"/>
<rect x="614" y="255" width="1" height="6" fill="#fff"/>
<rect x="614" y="444" width="1" height="6" fill="#fff"/>
<rect x="627" y="255" width="1" height="6" fill="#fff"/>
<rect x="627" y="444" width="1" height="6" fill="#fff"/>
<rect x="633" y="255" width="1" height="6" fill="#fff"/>
<rect x="633" y="444" width="1" height="6" fill="#fff"/>
<rect x="639" y="255" width="1" height="6" fill="#fff"/>
<rect x="639" y="444" width="1" height="6" fill="#fff"/>
<rect x="646" y="255" width="1" height="6" fill="#fff"/>
<rect x="646" y="444" width="1" height="6" fill="#fff"/>
<rect x="652" y="255" width="1" height="6" fill="#fff"/>
<rect x="652" y="444" width="1" height="6" fill="#fff"/>
<rect x="658" y="255" width="1" height="6" fill="#fff"/>
<rect x="658" y="444" width="1" height="6" fill="#fff"/>
<rect x="665" y="255" width="1" height="6" fill="#fff"/>
<rect x="665" y="444" width="1" height="6" fill="#fff"/>
<rect x="671" y="255" width="1" height="6" fill="#fff"/>
<rect x="671" y="444" width="1" height="6" fill="#fff"/>
<rect x="683" y="255" width="1" height="6" fill="#fff"/>
<rect x="683" y="444" width="1" height="6" fill="#fff"/>
<rect x="690" y="255" width="1" height="6" fill="#fff"/>
<rect x="690" y="444" width="1" height="6" fill="#fff"/>
<rect x="696" y="255" width="1" height="6" fill="#fff"/>
<rect x="696" y="444" width="1" height="6" fill="#fff"/>
<rect x="702" y="255" width="1" height="6" fill="#fff"/>
<rect x="702" y="444" width="1" height="6" fill="#fff"/>
<rect x="709" y="255" width="1" height="6" fill="#fff"/>
<rect x="709" y="444" width="1" height="6" fill="#fff"/>
<rect x="715" y="255" width="1" height="6" fill="#fff"/>
<rect x="715" y="444" width="1" height="6" fill="#fff"/>
<rect x="721" y="255" width="1" height="6" fill="#fff"/>
<rect x="721" y="444" width="1" height="6" fill="#fff"/>
<rect x="727" y="255" width="1" height="6" fill="#fff"/>
<rect x="727" y="444" width="1" height="6" fill="#fff"/>
<rect x="740" y="255" width="1" height="6" fill="#fff"/>
<rect x="740" y="444" width="1" height="6" fill="#fff"/>
<rect x="746" y="255" width="1" height="6" fill="#fff"/>
<rect x="746" y="444" width="1" height="6" fill="#fff"/>
<rect x="753" y="255" width="1" height="6" fill="#fff"/>
<rect x="753" y="444" width="1" height="6" fill="#fff"/>
<rect x="759" y="255" width="1" height="6" fill="#fff"/>
<rect x="759" y="444" width="1" height="6" fill="#fff"/>
<rect x="765" y="255" width="1" height="6" fill="#fff"/>
<rect x="765" y="444" width="1" height="6" fill="#fff"/>
<rect x="772" y="255" width="1" height="6" fill="#fff"/>
<rect x="772" y="444" width="1" height="6" fill="#fff"/>
<rect x="778" y="255" width="1" height="6" fill="#fff"/>
<rect x="778" y="444" width="1" height="6" fill="#fff"/>
<rect x="784" y="255" width="1" height="6" fill="#fff"/>
<rect x="784" y="444" width="1" height="6" fill="#fff"/>
<rect x="797" y="255" width="1" height="6" fill="#fff"/>
<rect x="797" y="444" width="1" height="6" fill="#fff"/>
<rect x="803" y="255" width="1" height="6" fill="#fff"/>
<rect x="803" y="444" width="1" height="6" fill="#fff"/>
<rect x="809" y="255" width="1" height="6" fill="#fff"/>
<rect x="809" y="444" width="1" height="6" fill="#fff"/>
<rect x="816" y="255" width="1" height="6" fill="#fff"/>
<rect x="816" y="444" width="1" height="6" fill="#fff"/>
<rect x="822" y="255" width="1" height="6" fill="#fff"/>
<rect x="822" y="444" width="1" height="6" fill="#fff"/>
<rect x="828" y="255" width="1" height="6" fill="#fff"/>
<rect x="828" y="444" width="1" height="6" fill="#fff"/>
<rect x="201" y="501" width="638" height="1" fill="#fff"/>
<rect x="201" y="678" width="638" height="1" fill="#fff"/>
<rect x="210" y="501" width="1" height="178" fill="#fff"/>
<rect x="829" y="501" width="1" height="178" fill="#fff"/>
<rect x="224" y="501" width="1" height="10" fill="#fff"/>
<rect x="224" y="669" width="1" height="10" fill="#fff"/>
<rect x="281" y="501" width="1" height="10" fill="#fff"/>
<rect x="281" y="669" width="1" height="10" fill="#fff"/>
<rect x="337" y="501" width="1" height="10" fill="#fff"/>
<rect x="337" y="669" width="1" height="10" fill="#fff"/>
<rect x="394" y="501" width="1" height="10" fill="#fff"/>
<rect x="394" y="669" width="1" height="10" fill="#fff"/>
<rect x="451" y="501" width="1" height="10" fill="#fff"/>
<rect x="451" y="669" width="1" height="10" fill="#fff"/>
<rect x="507" y="501" width="1" height="10" fill="#fff"/>
<rect x="507" y="669" width="1" height="10" fill="#fff"/>
<rect x="564" y="501" width="1" height="10" fill="#fff"/>
<rect x="564" y="669" width="1" height="10" fill="#fff"/>
<rect x="620" y="501" width="1" height="10" fill="#fff"/>
<rect x="620" y="669" width="1" height="10" fill="#fff"/>
<rect x="677" y="501" width="1" height="10" fill="#fff"/>
<rect x="677" y="669" width="1" height="10" fill="#fff"/>
<rect x="734" y="501" width="1" height="10" fill="#fff"/>
<rect x="734" y="669" width="1" height="10" fill="#fff"/>
<rect x="790" y="501" width="1" height="10" fill="#fff"/>
<rect x="790" y="669" width="1" height="10" fill="#fff"/>
<rect x="211" y="501" width="1" height="6" fill="#fff"/>
<rect x="211" y="673" width="1" height="6" fill="#fff"/>
<rect x="218" y="501" width="1" height="6" fill="#fff"/>
<rect x="218" y="673" width="1" height="6" fill="#fff"/>
<rect x="230" y="501" width="1" height="6" fill="#fff"/>
<rect x="230" y="673" width="1" height="6" fill="#fff"/>
<rect x="236" y="501" width="1" height="6" fill="#fff"/>
<rect x="236" y="673" width="1" height="6" fill="#fff"/>
<rect x="243" y="501" width="1" height="6" fill="#fff"/>
<rect x="243" y="673" width="1" height="6" fill="#fff"/>
<rect x="249" y="501" width="1" height="6" fill="#fff"/>
<rect x="249" y="673" width="1" height="6" fill="#fff"/>
<rect x="255" y="501" width="1" height="6" fill="#fff"/>
<rect x="255" y="673" width="1" height="6" fill="#fff"/>
<rect x="262" y="501" width="1" height="6" fill="#fff"/>
<rect x="262" y="673" width="1" height="6" fill="#fff"/>
<rect x="268" y="501" width="1" height="6" fill="#fff"/>
<rect x="268" y="673" width="1" height="6" fill="#fff"/>
<rect x="274" y="501" width="1" height="6" fill="#fff"/>
<rect x="274" y="673" width="1" height="6" fill="#fff"/>
<rect x="287" y="501" width="1" height="6" fill="#fff"/>
<rect x="287" y="673" width="1" height="6" fill="#fff"/>
<rect x="293" y="501" width="1" height="6" fill="#fff"/>
<rect x="293" y="673" width="1" height="6" fill="#fff"/>
<rect x="299" y="501" width="1" height="6" fill="#fff"/>
<rect x="299" y="673" width="1" height="6" fill="#fff"/>
<rect x="306" y="501" width="1" height="6" fill="#fff"/>
<rect x="306" y="673" width="1" height="6" fill="#fff"/>
<rect x="312" y="501" width="1" height="6" fill="#fff"/>
<rect x="312" y="673" width="1" height="6" fill="#fff"/>
<rect x="318" y="501" width="1" height="6" fill="#fff"/>
<rect x="318" y="673" width="1" height="6" fill="#fff"/>
<rect x="325" y="501" width="1" height="6" fill="#fff"/>
<rect x="325" y="673" width="1" height="6" fill="#fff"/>
<rect x="331" y="501" width="1" height="6" fill="#fff"/>
<rect x="331" y="673" width="1" height="6" fill="#fff"/>
<rect x="343" y="501" width="1" height="6" fill="#fff"/>
<rect x="343" y="673" width="1" height="6" fill="#fff"/>
<rect x="350" y="501" width="1" height="6" fill="#fff"/>
<rect x="350" y="673" width="1" height="6" fill="#fff"/>
<rect x="356" y="501" width="1" height="6" fill="#fff"/>
<rect x="356" y="673" width="1" height="6" fill="#fff"/>
<rect x="362" y="501" width="1" height="6" fill="#fff"/>
<rect x="362" y="673" width="1" height="6" fill="#fff"/>
<rect x="369" y="501" width="1" height="6" fill="#fff"/>
<rect x="369" y="673" width="1" height="6" fill="#fff"/>
<rect x="375" y="501" width="1" height="6" fill="#fff"/>
<rect x="375" y="673" width="1" height="6" fill="#fff"/>
<rect x="381" y="501" width="1" height="6" fill="#fff"/>
<rect x="381" y="673" width="1" height="6" fill="#fff"/>
<rect x="388" y="501" width="1" height="6" fill="#fff"/>
<rect x="388" y="673" width="1" height="6" fill="#fff"/>
<rect x="400" y="501" width="1" height="6" fill="#fff"/>
<rect x="400" y="673" width="1" height="6" fill="#fff"/>
<rect x="406" y="501" width="1" height="6" fill="#fff"/>
<rect x="406" y="673" width="1" height="6" fill="#fff"/>
<rect x="413" y="501" width="1" height="6" fill="#fff"/>
<rect x="413" y="673" width="1" height="6" fill="#fff"/>
<rect x="419" y="501" width="1" height="6" fill="#fff"/>
<rect x="419" y="673" width="1" height="6" fill="#fff"/>
<rect x="425" y="501" width="1" height="6" fill="#fff"/>
<rect x="425" y="673" width="1" height="6" fill="#fff"/>
<rect x="432" y="501" width="1" height="6" fill="#fff"/>
<rect x="432" y="673" width="1" height="6" fill="#fff"/>
<rect x="438" y="501" width="1" height="6" fill="#fff"/>
<rect x="438" y="673" width="1" height="6" fill="#fff"/>
<rect x="444" y="501" width="1" height="6" fill="#fff"/>
<rect x="444" y="673" width="1" height="6" fill="#fff"/>
<rect x="457" y="501" width="1" height="6" fill="#fff"/>
<rect x="457" y="673" width="1" height="6" fill="#fff"/>
<rect x="463" y="501" width="1" height="6" fill="#fff"/>
<rect x="463" y="673" width="1" height="6" fill="#fff"/>
<rect x="469" y="501" width="1" height="6" fill="#fff"/>
<rect x="469" y="673" width="1" height="6" fill="#fff"/>
<rect x="476" y="501" width="1" height="6" fill="#fff"/>
<rect x="476" y="673" width="1" height="6" fill="#fff"/>
<rect x="482" y="501" width="1" height="6" fill="#fff"/>
<rect x="482" y="673" width="1" height="6" fill="#fff"/>
<rect x="488" y="501" width="1" height="6" fill="#fff"/>
<rect x="488" y="673" width="1" height="6" fill="#fff"/>
<rect x="495" y="501" width="1" height="6" fill="#fff"/>
<rect x="495" y="673" width="1" height="6" fill="#fff"/>
<rect x="501" y="501" width="1" height="6" fill="#fff"/>
<rect x="501" y="673" width="1" height="6" fill="#fff"/>
<rect x="513" y="501" width="1" height="6" fill="#fff"/>
<rect x="513" y="673" width="1" height="6" fill="#fff"/>
<rect x="520" y="501" width="1" height="6" fill="#fff"/>
<rect x="520" y="673" width="1" height="6" fill="#fff"/>
<rect x="526" y="501" width="1" height="6" fill="#fff"/>
<rect x="526" y="673" width="1" height="6" fill="#fff"/>
<rect x="532" y="501" width="1" height="6" fill="#fff"/>
<rect x="532" y="673" width="1" height="6" fill="#fff"/>
<rect x="539" y="501" width="1" height="6" fill="#fff"/>
<rect x="539" y="673" width="1" height="6" fill="#fff"/>
<rect x="545" y="501" width="1" height="6" fill="#fff"/>
<rect x="545" y="673" width="1" height="6" fill="#fff"/>
<rect x="551" y="501" width="1" height="6" fill="#fff"/>
<rect x="551" y="673" width="1" height="6" fill="#fff"/>
<rect x="558" y="501" width="1" height="6" fill="#fff"/>
<rect x="558" y="673" width="1" height="6" fill="#fff"/>
<rect x="570" y="501" width="1" height="6" fill="#fff"/>
<rect x="570" y="673" width="1" height="6" fill="#fff"/>
<rect x="576" y="501" width="1" height="6" fill="#fff"/>
<rect x="576" y="673" width="1" height="6" fill="#fff"/>
<rect x="583" y="501" width="1" height="6" fill="#fff"/>
<rect x="583" y="673" width="1" height="6" fill="#fff"/>
<rect x="589" y="501" width="1" height="6" fill="#fff"/>
<rect x="589" y="673" width="1" height="6" fill="#fff"/>
<rect x="595" y="501" width="1" height="6" fill="#fff"/>
<rect x="595" y="673" width="1" height="6" fill="#fff"/>
<rect x="602" y="501" width="1" height="6" fill="#fff"/>
<rect x="602" y="673" width="1" height="6" fill="#fff"/>
<rect x="608" y="501" width="1" height="6" fill="#fff"/>
<rect x="608" y="673" width="1" height="6" fill="#fff"/>
<rect x="614" y="501" width="1" height="6" fill="#fff"/>
<rect x="614" y="673" width="1" height="6" fill="#fff"/>
<rect x="627" y="501" width="1" height="6" fill="#fff"/>
<rect x="627" y="673" width="1" height="6" fill="#fff"/>
<rect x="633" y="501" width="1" height="6" fill="#fff"/>
<rect x="633" y="673" width="1" height="6" fill="#fff"/>
<rect x="639" y="501" width="1" height="6" fill="#fff"/>
<rect x="639" y="673" width="1" height="6" fill="#fff"/>
<rect x="646" y="501" width="1" height="6" fill="#fff"/>
<rect x="646" y="673" width="1" height="6" fill="#fff"/>
<rect x="652" y="501" width="1" height="6" fill="#fff"/>
<rect x="652" y="673" width="1" height="6" fill="#fff"/>
<rect x="658" y="501" width="1" height="6" fill="#fff"/>
<rect x="658" y="673" width="1" height="6" fill="#fff"/>
<rect x="665" y="501" width="1" height="6" fill="#fff"/>
<rect x="665" y="673" width="1" height="6" fill="#fff"/>
<rect x="671" y="501" width="1" height="6" fill="#fff"/>
<rect x="671" y="673" width="1" height="6" fill="#fff"/>
<rect x="683" y="501" width="1" height="6" fill="#fff"/>
<rect x="683" y="673" width="1" height="6" fill="#fff"/>
<rect x="690" y="501" width="1" height="6" fill="#fff"/>
<rect x="690" y="673" width="1" height="6" fill="#fff"/>
<rect x="696" y="501" width="1" height="6" fill="#fff"/>
<rect x="696" y="673" width="1" height="6" fill="#fff"/>
<rect x="702" y="501" width="1" height="6" fill="#fff"/>
<rect x="702" y="673" width="1" height="6" fill="#fff"/>
<rect x="709" y="501" width="1" height="6" fill="#fff"/>
<rect x="709" y="673" width="1" height="6" fill="#fff"/>
<rect x="715" y="501" width="1" height="6" fill="#fff"/>
<rect x="715" y="673" width="1" height="6" fill="#fff"/>
<rect x="721" y="501" width="1" height="6" fill="#fff"/>
<rect x="721" y="673" width="1" height="6" fill="#fff"/>
<rect x="727" y="501" width="1" height="6" fill="#fff"/>
<rect x="727" y="673" width="1" height="6" fill="#fff"/>
<rect x="740" y="501" width="1" height="6" fill="#fff"/>
<rect x="740" y="673" width="1" height="6" fill="#fff"/>
<rect x="746" y="501" width="1" height="6" fill="#fff"/>
<rect x="746" y="673" width="1" height="6" fill="#fff"/>
<rect x="753" y="501" width="1" height="6" fill="#fff"/>
<rect x="753" y="673" width="1" height="6" fill="#fff"/>
<rect x="759" y="501" width="1" height="6" fill="#fff"/>
<rect x="759" y="673" width="1" height="6" fill="#fff"/>
<rect x="765" y="501" width="1" height="6" fill="#fff"/>
<rect x="765" y="673" width="1" height="6" fill="#fff"/>
<rect x="772" y="501" width="1" height="6" fill="#fff"/>
<rect x="772" y="673" width="1" height="6" fill="#fff"/>
<rect x="778" y="501" width="1" height="6" fill="#fff"/>
<rect x="778" y="673" width="1" height="6" fill="#fff"/>
<rect x="784" y="501" width="1" height="6" fill="#fff"/>
<rect x="784" y="673" width="1" height="6" fill="#fff"/>
<rect x="797" y="501" width="1" height="6" fill="#fff"/>
<rect x="797" y="673" width="1" height="6" fill="#fff"/>
<rect x="803" y="501" width="1" height="6" fill="#fff"/>
<rect x="803" y="673" width="1" height="6" fill="#fff"/>
<rect x="809" y="501" width="1" height="6" fill="#fff"/>
<rect x="809" y="673" width="1" height="6" fill="#fff"/>
<rect x="816" y="501" width="1" height="6" fill="#fff"/>
<rect x="816" y="673" width="1" height="6" fill="#fff"/>
<rect x="822" y="501" width="1" height="6" fill="#fff"/>
<rect x="822" y="673" width="1" height="6" fill="#fff"/>
<rect x="828" y="501" width="1" height="6" fill="#fff"/>
<rect x="828" y="673" width="1" height="6" fill="#fff"/>
<rect x="204" y="508" width="7" height="1" fill="#fff"/>
<rect x="829" y="508" width="7" height="1" fill="#fff"/>
<rect x="204" y="515" width="7" height="1" fill="#fff"/>
<rect x="829" y="515" width="7" height="1" fill="#fff"/>
<rect x="204" y="522" width="7" height="1" fill="#fff"/>
<rect x="829" y="522" width="7" height="1" fill="#fff"/>
<rect x="204" y="529" width="7" height="1" fill="#fff"/>
<rect x="829" y="529" width="7" height="1" fill="#fff"/>
<rect x="201" y="536" width="10" height="1" fill="#fff"/>
<rect x="829" y="536" width="10" height="1" fill="#fff"/>
<rect x="204" y="543" width="7" height="1" fill="#fff"/>
<rect x="829" y="543" width="7" height="1" fill="#fff"/>
<rect x="204" y="551" width="7" height="1" fill="#fff"/>
<rect x="829" y="551" width="7" height="1" fill="#fff"/>
<rect x="204" y="558" width="7" height="1" fill="#fff"/>
<rect x="829" y="558" width="7" height="1" fill="#fff"/>
<rect x="204" y="565" width="7" height="1" fill="#fff"/>
<rect x="829" y="565" width="7" height="1" fill="#fff"/>
<rect x="201" y="572" width="10" height="1" fill="#fff"/>
<rect x="829" y="572" width="10" height="1" fill="#fff"/>
<rect x="204" y="579" width="7" height="1" fill="#fff"/>
<rect x="829" y="579" width="7" height="1" fill="#fff"/>
<rect x="204" y="586" width="7" height="1" fill="#fff"/>
<rect x="829" y="586" width="7" height="1" fill="#fff"/>
<rect x="204" y="593" width="7" height="1" fill="#fff"/>
<rect x="829" y="593" width="7" height="1" fill="#fff"/>
<rect x="204" y="600" width="7" height="1" fill="#fff"/>
<rect x="829" y="600" width="7" height="1" fill="#fff"/>
<rect x="201" y="607" width="10" height="1" fill="#fff"/>
<rect x="829" y="607" width="10" height="1" fill="#fff"/>
<rect x="204" y="614" width="7" height="1" fill="#fff"/>
<rect x="829" y="614" width="7" height="1" fill="#fff"/>
<rect x="204" y="621" width="7" height="1" fill="#fff"/>
<rect x="829" y="621" width="7" height="1" fill="#fff"/>
<rect x="204" y="628" width="7" height="1" fill="#fff"/>
<rect x="829" y="628" width="7" height="1" fill="#fff"/>
<rect x="204" y="636" width="7" height="1" fill="#fff"/>
<rect x="829" y="636" width="7" height="1" fill="#fff"/>
<rect x="201" y="643" width="10" height="1" fill="#fff"/>
<rect x="829" y="643" width="10" height="1" fill="#fff"/>
<rect x="204" y="650" width="7" height="1" fill="#fff"/>
<rect x="829" y="650" width="7" height="1" fill="#fff"/>
<rect x="204" y="657" width="7" height="1" fill="#fff"/>
<rect x="829" y="657" width="7" height="1" fill="#fff"/>
<rect x="204" y="664" width="7" height="1" fill="#fff"/>
<rect x="829" y="664" width="7" height="1" fill="#fff"/>
<rect x="204" y="671" width="7" height="1" fill="#fff"/>
<rect x="829" y="671" width="7" height="1" fill="#fff"/>
</g>
<g opacity="0.999">
<text class="l" x="416.8" y="30.5" textLength="83.4" lengthAdjust="spacingAndGlyphs">2006/153</text>
<text class="l" x="510.4" y="30.5" textLength="114" lengthAdjust="spacingAndGlyphs">23:53:00.000</text>
<text class="l" x="265" y="52.4" textLength="109.4" lengthAdjust="spacingAndGlyphs">ELSSCIL/MEx</text>
<text class="l" x="386.7" y="52.4" textLength="65.7" lengthAdjust="spacingAndGlyphs">ELS-07</text>
<text class="l" x="461.9" y="52.4" textLength="52" lengthAdjust="spacingAndGlyphs">LR-Bk</text>
<text class="l" x="534.2" y="52.4" textLength="242" lengthAdjust="spacingAndGlyphs">(ergs/(cm**2-sr-sec-eV))</text>
<text class="l" x="69.5" y="204.8" textLength="65.2" lengthAdjust="spacingAndGlyphs" transform="rotate(-90 69.5 204.8)">Electron</text>
<text class="l" x="69.5" y="129" textLength="54.5" lengthAdjust="spacingAndGlyphs" transform="rotate(-90 69.5 129)">Energy</text>
<text class="l" x="89.8" y="156.5" textLength="32.2" lengthAdjust="spacingAndGlyphs" transform="rotate(-90 89.8 156.5)">(eV)</text>
<text class="s" x="175.8" y="86.1" textLength="13" lengthAdjust="spacingAndGlyphs">10</text>
<text class="p1" x="190.4" y="79.1">2</text>
<text class="s" x="177.6" y="155.3" textLength="13" lengthAdjust="spacingAndGlyphs">10</text>
<text class="p1" x="192.2" y="148.3">1</text>
<text class="s" x="175.8" y="224.3" textLength="13" lengthAdjust="spacingAndGlyphs">10</text>
<text class="p1" x="190.4" y="217.3">0</text>
<text class="s" x="205.7" y="239" textLength="38" lengthAdjust="spacingAndGlyphs">00:00</text>
<text class="s" x="262.35" y="239" textLength="38" lengthAdjust="spacingAndGlyphs">00:30</text>
<text class="s" x="319" y="239" textLength="38" lengthAdjust="spacingAndGlyphs">01:00</text>
<text class="s" x="375.65" y="239" textLength="38" lengthAdjust="spacingAndGlyphs">01:30</text>
<text class="s" x="432.3" y="239" textLength="38" lengthAdjust="spacingAndGlyphs">02:00</text>
<text class="s" x="488.95" y="239" textLength="38" lengthAdjust="spacingAndGlyphs">02:30</text>
<text class="s" x="545.6" y="239" textLength="38" lengthAdjust="spacingAndGlyphs">03:00</text>
<text class="s" x="602.25" y="239" textLength="38" lengthAdjust="spacingAndGlyphs">03:30</text>
<text class="s" x="658.9" y="239" textLength="38" lengthAdjust="spacingAndGlyphs">04:00</text>
<text class="s" x="715.55" y="239" textLength="38" lengthAdjust="spacingAndGlyphs">04:30</text>
<text class="s" x="772.2" y="239" textLength="38" lengthAdjust="spacingAndGlyphs">05:00</text>
<text class="s" x="117.7" y="239" textLength="64.3" lengthAdjust="spacingAndGlyphs">GMT(min)</text>
<text class="s" x="205.7" y="468" textLength="38" lengthAdjust="spacingAndGlyphs">00:00</text>
<text class="s" x="262.35" y="468" textLength="38" lengthAdjust="spacingAndGlyphs">00:30</text>
<text class="s" x="319" y="468" textLength="38" lengthAdjust="spacingAndGlyphs">01:00</text>
<text class="s" x="375.65" y="468" textLength="38" lengthAdjust="spacingAndGlyphs">01:30</text>
<text class="s" x="432.3" y="468" textLength="38" lengthAdjust="spacingAndGlyphs">02:00</text>
<text class="s" x="488.95" y="468" textLength="38" lengthAdjust="spacingAndGlyphs">02:30</text>
<text class="s" x="545.6" y="468" textLength="38" lengthAdjust="spacingAndGlyphs">03:00</text>
<text class="s" x="602.25" y="468" textLength="38" lengthAdjust="spacingAndGlyphs">03:30</text>
<text class="s" x="658.9" y="468" textLength="38" lengthAdjust="spacingAndGlyphs">04:00</text>
<text class="s" x="715.55" y="468" textLength="38" lengthAdjust="spacingAndGlyphs">04:30</text>
<text class="s" x="772.2" y="468" textLength="38" lengthAdjust="spacingAndGlyphs">05:00</text>
<text class="s" x="117.7" y="468" textLength="64.3" lengthAdjust="spacingAndGlyphs">GMT(min)</text>
<text class="s" x="205.7" y="697" textLength="38" lengthAdjust="spacingAndGlyphs">00:00</text>
<text class="s" x="262.35" y="697" textLength="38" lengthAdjust="spacingAndGlyphs">00:30</text>
<text class="s" x="319" y="697" textLength="38" lengthAdjust="spacingAndGlyphs">01:00</text>
<text class="s" x="375.65" y="697" textLength="38" lengthAdjust="spacingAndGlyphs">01:30</text>
<text class="s" x="432.3" y="697" textLength="38" lengthAdjust="spacingAndGlyphs">02:00</text>
<text class="s" x="488.95" y="697" textLength="38" lengthAdjust="spacingAndGlyphs">02:30</text>
<text class="s" x="545.6" y="697" textLength="38" lengthAdjust="spacingAndGlyphs">03:00</text>
<text class="s" x="602.25" y="697" textLength="38" lengthAdjust="spacingAndGlyphs">03:30</text>
<text class="s" x="658.9" y="697" textLength="38" lengthAdjust="spacingAndGlyphs">04:00</text>
<text class="s" x="715.55" y="697" textLength="38" lengthAdjust="spacingAndGlyphs">04:30</text>
<text class="s" x="772.2" y="697" textLength="38" lengthAdjust="spacingAndGlyphs">05:00</text>
<text class="s" x="117.7" y="697" textLength="64.3" lengthAdjust="spacingAndGlyphs">GMT(min)</text>
<text class="l" x="851.8" y="59.75" textLength="30.1" lengthAdjust="spacingAndGlyphs">DEF</text>
<text class="l" x="894.7" y="82.7" textLength="16.1" lengthAdjust="spacingAndGlyphs">10</text>
<text class="p2" x="914.2" y="74" textLength="13.7" lengthAdjust="spacingAndGlyphs">-3</text>
<text class="l" x="894.7" y="125" textLength="16.1" lengthAdjust="spacingAndGlyphs">10</text>
<text class="p2" x="914.2" y="116.3" textLength="13.7" lengthAdjust="spacingAndGlyphs">-4</text>
<text class="l" x="894.7" y="167.2" textLength="16.1" lengthAdjust="spacingAndGlyphs">10</text>
<text class="p2" x="914.2" y="158.5" textLength="13.7" lengthAdjust="spacingAndGlyphs">-5</text>
<text class="l" x="894.7" y="209.7" textLength="16.1" lengthAdjust="spacingAndGlyphs">10</text>
<text class="p2" x="914.2" y="201" textLength="13.7" lengthAdjust="spacingAndGlyphs">-6</text>
<text class="s" x="74.7" y="268.9" textLength="43.1" lengthAdjust="spacingAndGlyphs">ELS-11</text>
<text class="s" x="126.6" y="268.9" textLength="31.5" lengthAdjust="spacingAndGlyphs">Pitch</text>
<text class="s" x="167.2" y="268.9" textLength="35.8" lengthAdjust="spacingAndGlyphs">Angle</text>
<text class="s b" x="70.9" y="286.4" textLength="46.9" lengthAdjust="spacingAndGlyphs">ELS-10</text>
<text class="s" x="126.6" y="286.4" textLength="31.5" lengthAdjust="spacingAndGlyphs">Pitch</text>
<text class="s" x="167.2" y="286.4" textLength="35.8" lengthAdjust="spacingAndGlyphs">Angle</text>
<text class="s" x="67.9" y="304" textLength="49.9" lengthAdjust="spacingAndGlyphs">ELS-09</text>
<text class="s" x="126.6" y="304" textLength="31.5" lengthAdjust="spacingAndGlyphs">Pitch</text>
<text class="s" x="167.2" y="304" textLength="35.8" lengthAdjust="spacingAndGlyphs">Angle</text>
<text class="s" x="67.9" y="321.5" textLength="49.9" lengthAdjust="spacingAndGlyphs">ELS-08</text>
<text class="s" x="126.6" y="321.5" textLength="31.5" lengthAdjust="spacingAndGlyphs">Pitch</text>
<text class="s" x="167.2" y="321.5" textLength="35.8" lengthAdjust="spacingAndGlyphs">Angle</text>
<text class="s" x="67.9" y="339.1" textLength="49.9" lengthAdjust="spacingAndGlyphs">ELS-07</text>
<text class="s" x="126.6" y="339.1" textLength="31.5" lengthAdjust="spacingAndGlyphs">Pitch</text>
<text class="s" x="167.2" y="339.1" textLength="35.8" lengthAdjust="spacingAndGlyphs">Angle</text>
<text class="s" x="67.9" y="356.6" textLength="49.9" lengthAdjust="spacingAndGlyphs">ELS-06</text>
<text class="s" x="126.6" y="356.6" textLength="31.5" lengthAdjust="spacingAndGlyphs">Pitch</text>
<text class="s" x="167.2" y="356.6" textLength="35.8" lengthAdjust="spacingAndGlyphs">Angle</text>
<text class="s" x="67.9" y="374.2" textLength="49.9" lengthAdjust="spacingAndGlyphs">ELS-05</text>
<text class="s" x="126.6" y="374.2" textLength="31.5" lengthAdjust="spacingAndGlyphs">Pitch</text>
<text class="s" x="167.2" y="374.2" textLength="35.8" lengthAdjust="spacingAndGlyphs">Angle</text>
<text class="s" x="67.9" y="391.8" textLength="49.9" lengthAdjust="spacingAndGlyphs">ELS-04</text>
<text class="s" x="126.6" y="391.8" textLength="31.5" lengthAdjust="spacingAndGlyphs">Pitch</text>
<text class="s" x="167.2" y="391.8" textLength="35.8" lengthAdjust="spacingAndGlyphs">Angle</text>
<text class="s" x="67.9" y="409.3" textLength="49.9" lengthAdjust="spacingAndGlyphs">ELS-03</text>
<text class="s" x="126.6" y="409.3" textLength="31.5" lengthAdjust="spacingAndGlyphs">Pitch</text>
<text class="s" x="167.2" y="409.3" textLength="35.8" lengthAdjust="spacingAndGlyphs">Angle</text>
<text class="s" x="67.9" y="426.9" textLength="49.9" lengthAdjust="spacingAndGlyphs">ELS-02</text>
<text class="s" x="126.6" y="426.9" textLength="31.5" lengthAdjust="spacingAndGlyphs">Pitch</text>
<text class="s" x="167.2" y="426.9" textLength="35.8" lengthAdjust="spacingAndGlyphs">Angle</text>
<text class="s b" x="67.9" y="444.4" textLength="49.9" lengthAdjust="spacingAndGlyphs">ELS-01</text>
<text class="s" x="126.6" y="444.4" textLength="31.5" lengthAdjust="spacingAndGlyphs">Pitch</text>
<text class="s" x="167.2" y="444.4" textLength="35.8" lengthAdjust="spacingAndGlyphs">Angle</text>
<text class="l" x="851.9" y="258.1" textLength="30" lengthAdjust="spacingAndGlyphs">Deg</text>
<text class="l" x="895.2" y="281" textLength="27.3" lengthAdjust="spacingAndGlyphs">180</text>
<text class="l" x="895.2" y="319.6" textLength="27.3" lengthAdjust="spacingAndGlyphs">135</text>
<text class="l" x="895.2" y="358.2" textLength="18.5" lengthAdjust="spacingAndGlyphs">90</text>
<text class="l" x="895.2" y="396.8" textLength="18.5" lengthAdjust="spacingAndGlyphs">45</text>
<text class="l" x="895.2" y="435.4" textLength="9.5" lengthAdjust="spacingAndGlyphs">0</text>
<text class="l" x="211.9" y="492.3" textLength="138.4" lengthAdjust="spacingAndGlyphs">SAF_BXuT/Data</text>
<text class="l" x="359.7" y="492.3" textLength="57.8" lengthAdjust="spacingAndGlyphs">Quality</text>
<text class="l" x="427.5" y="492.3" textLength="20.6" lengthAdjust="spacingAndGlyphs">(L)</text>
<text class="l" x="531.25" y="492.3" textLength="130.65" lengthAdjust="spacingAndGlyphs" style="fill:#00ff00;stroke:#00ff00">MEXORBMC/SPF</text>
<text class="l" x="675.9" y="492.3" textLength="13.5" lengthAdjust="spacingAndGlyphs" style="fill:#00ff00;stroke:#00ff00">X,</text>
<text class="l" x="702.5" y="492.3" textLength="92.2" lengthAdjust="spacingAndGlyphs" style="fill:#00ff00;stroke:#00ff00">Spacecraft</text>
<text class="l" x="805.6" y="492.3" textLength="22.8" lengthAdjust="spacingAndGlyphs" style="fill:#00ff00;stroke:#00ff00">(R)</text>
<text class="s" x="187.4" y="506" textLength="7" lengthAdjust="spacingAndGlyphs">4</text>
<text class="s" x="187.4" y="541.4" textLength="7" lengthAdjust="spacingAndGlyphs">3</text>
<text class="s" x="187.4" y="576.8" textLength="7" lengthAdjust="spacingAndGlyphs">2</text>
<text class="s" x="187.4" y="612.2" textLength="7" lengthAdjust="spacingAndGlyphs">1</text>
<text class="s" x="187.4" y="647.6" textLength="7" lengthAdjust="spacingAndGlyphs">0</text>
<text class="s" x="181.9" y="683" textLength="12.5" lengthAdjust="spacingAndGlyphs">-1</text>
<text class="s" x="846.4" y="506" textLength="52.8" lengthAdjust="spacingAndGlyphs">1.0e+04</text>
<text class="s" x="846.4" y="541.4" textLength="57.2" lengthAdjust="spacingAndGlyphs">6.0e+03</text>
<text class="s" x="846.4" y="576.8" textLength="57.2" lengthAdjust="spacingAndGlyphs">2.0e+03</text>
<text class="s" x="846.4" y="612.2" textLength="67.6" lengthAdjust="spacingAndGlyphs">-2.0e+03</text>
<text class="s" x="846.4" y="647.6" textLength="67.6" lengthAdjust="spacingAndGlyphs">-6.0e+03</text>
<text class="s" x="846.4" y="683" textLength="64.6" lengthAdjust="spacingAndGlyphs">-1.0e+04</text>
<text class="l" x="69.9" y="661" textLength="31.2" lengthAdjust="spacingAndGlyphs" transform="rotate(-90 69.9 661)">Raw</text>
<text class="l" x="69.9" y="618" textLength="34.6" lengthAdjust="spacingAndGlyphs" transform="rotate(-90 69.9 618)">Data</text>
<text class="l" x="69.9" y="571" textLength="52.4" lengthAdjust="spacingAndGlyphs" transform="rotate(-90 69.9 571)">Quality</text>
<text class="l" x="90.2" y="612.8" textLength="46.3" lengthAdjust="spacingAndGlyphs" transform="rotate(-90 90.2 612.8)">(Raw)</text>
<text class="l" x="970" y="504.4" textLength="92" lengthAdjust="spacingAndGlyphs" transform="rotate(90 970 504.4)">Component</text>
<text class="l" x="970" y="606.4" textLength="68.4" lengthAdjust="spacingAndGlyphs" transform="rotate(90 970 606.4)">Distance</text>
<text class="l" x="949.7" y="569.6" textLength="39.4" lengthAdjust="spacingAndGlyphs" transform="rotate(90 949.7 569.6)">(km)</text>
</g>
</svg></body></html>
